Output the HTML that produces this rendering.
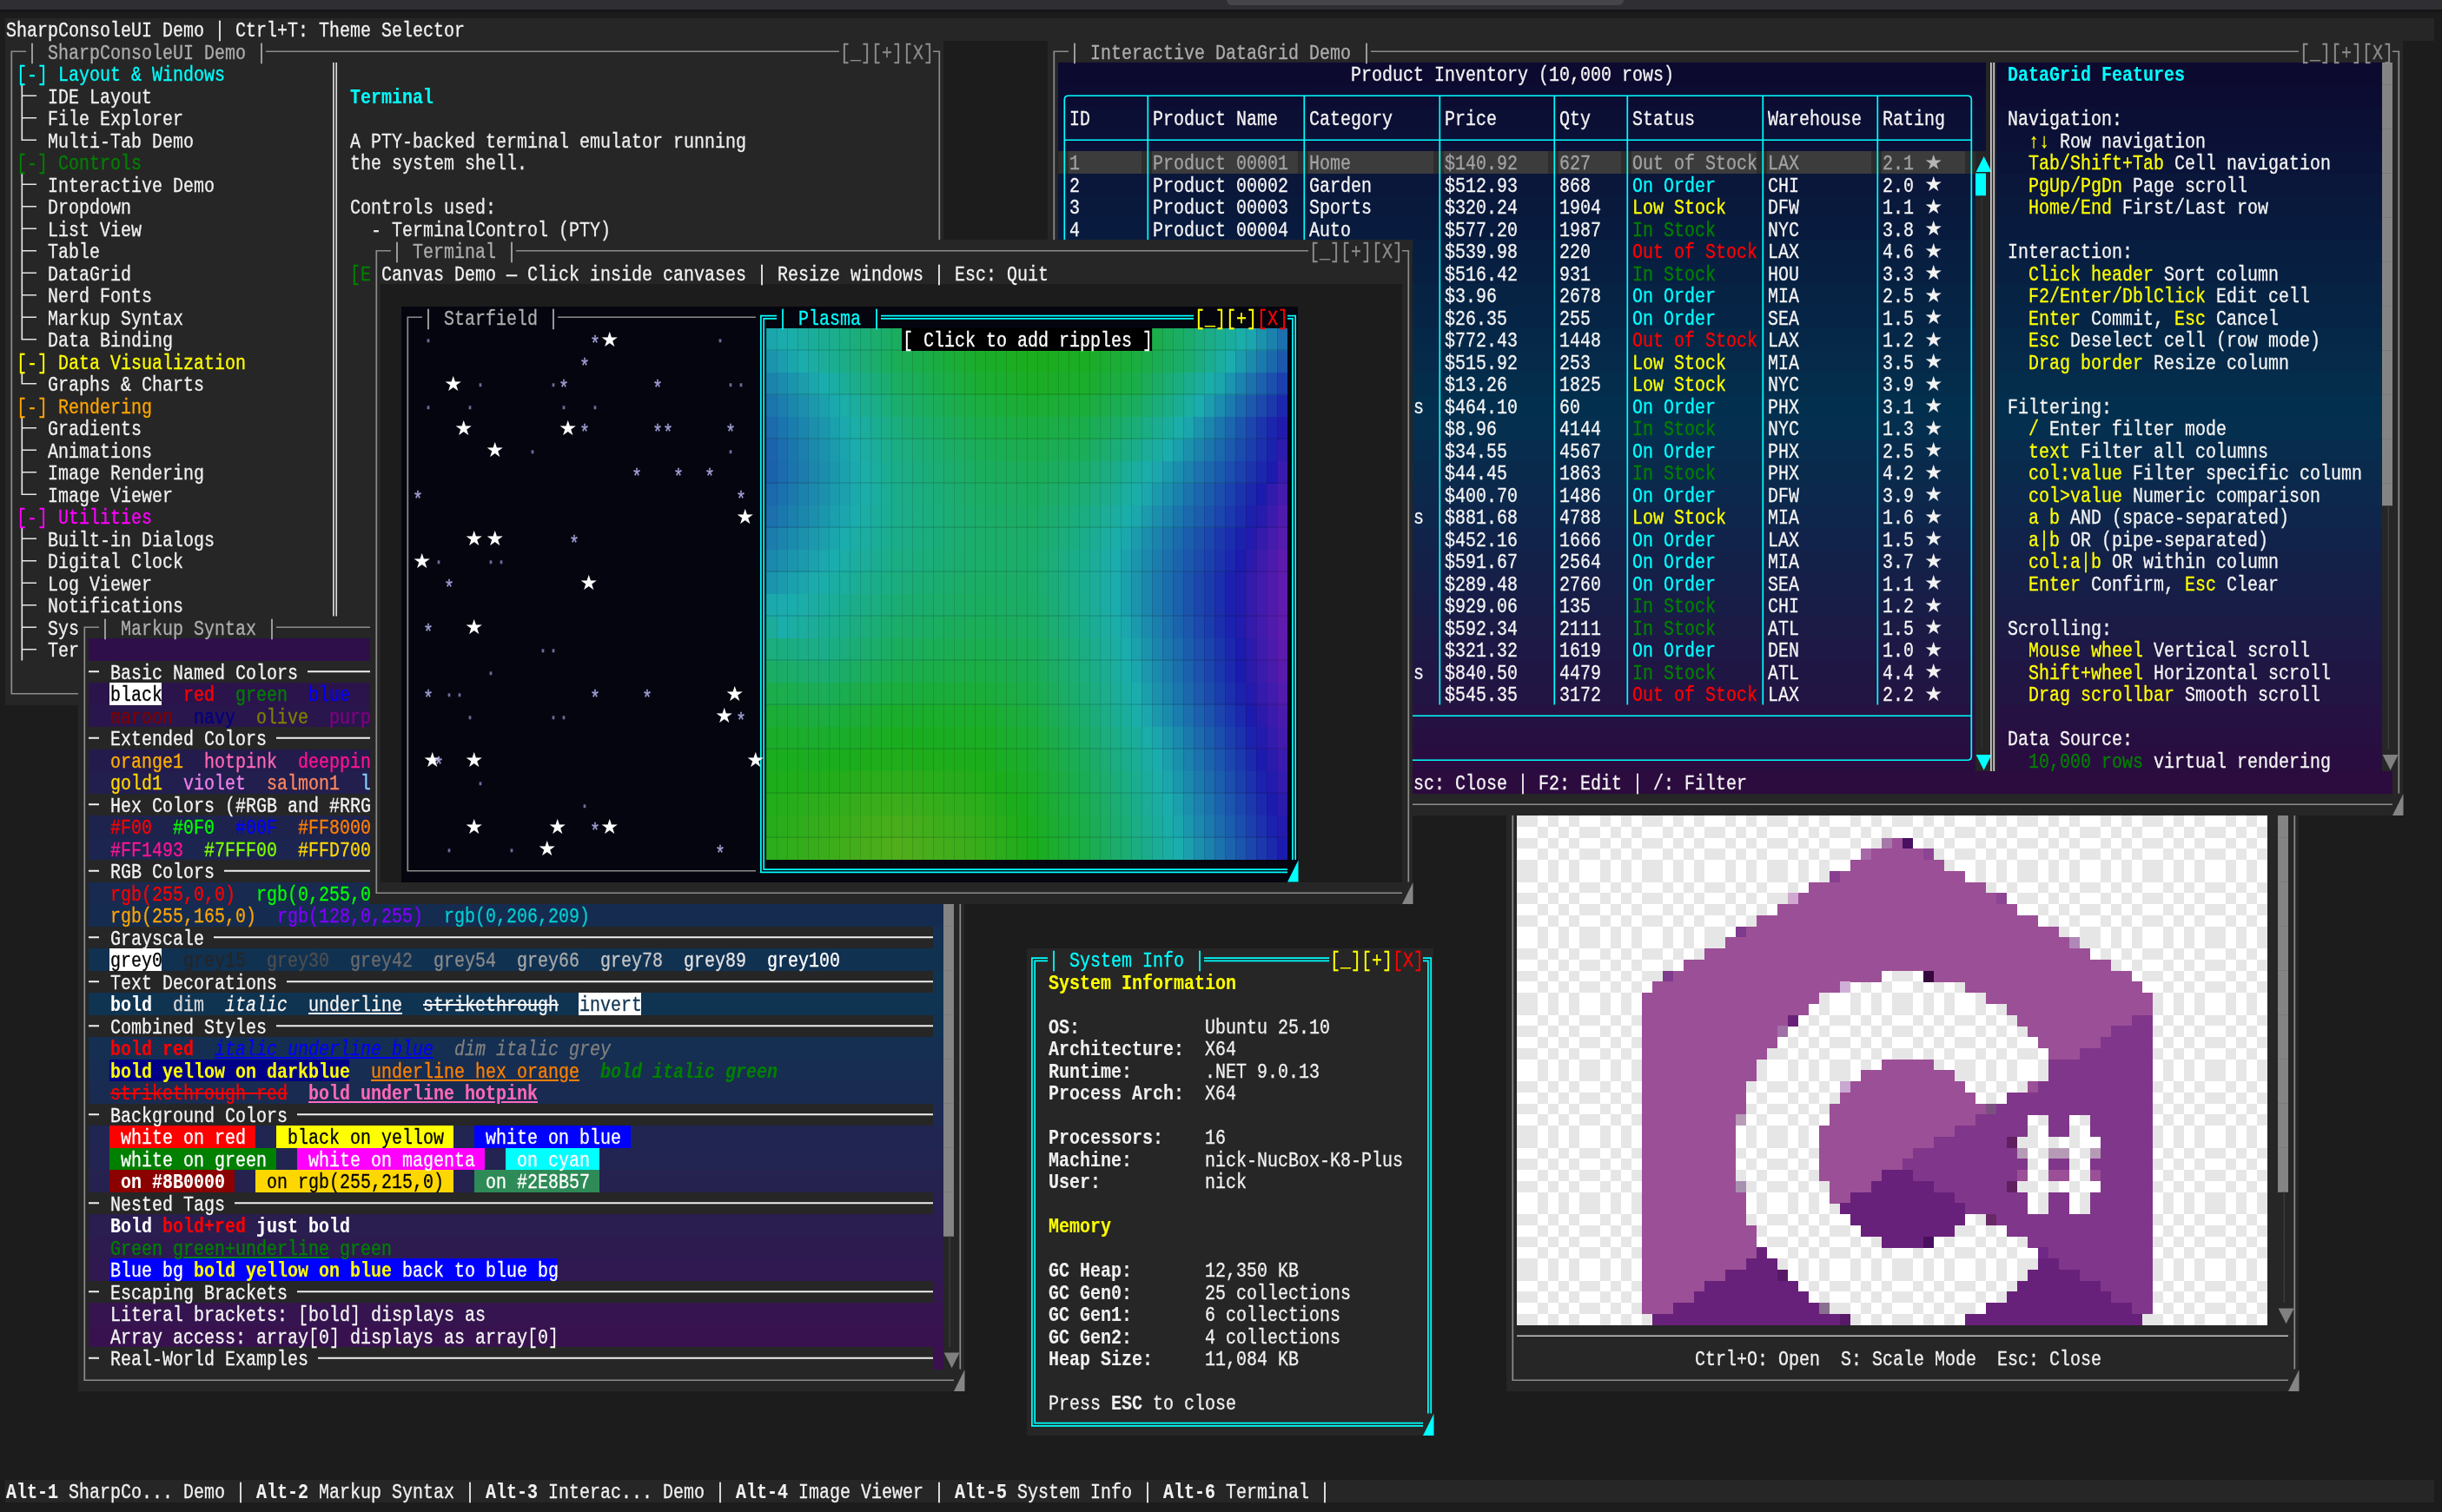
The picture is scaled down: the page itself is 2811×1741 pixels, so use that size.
<!DOCTYPE html>
<html lang="en"><head><meta charset="utf-8"><title>SharpConsoleUI Demo</title>
<style>
html,body{margin:0;padding:0}
body{width:2811px;height:1741px;background:#1c1c1d;overflow:hidden;position:relative;font-family:"Liberation Mono","DejaVu Sans Mono",monospace}
.ab{position:absolute;display:block}
.r{position:absolute;left:6px;width:2796px;height:25.5px}
.r i{position:absolute;top:0;height:100%;display:block}
.t{font-size:23.5px;line-height:25.5px;white-space:pre}
.t span{position:absolute;top:2px;margin-left:1.1px;-webkit-text-stroke:.28px currentColor;transform:scaleX(0.85093);transform-origin:0 0;text-decoration-thickness:1.6px;text-underline-offset:2px}
.t span.st{margin-left:0;-webkit-text-stroke:0;font-family:"DejaVu Sans",sans-serif;font-size:23.4px;transform:none;top:0.5px}
.t span.as{top:7px}
#tx{left:0;top:0;width:100%;height:100%;will-change:transform}
#tb{left:0;top:0;width:100%;height:10.5px;background:#2f2f33}
#tbs{left:0;top:10.5px;width:100%;height:5px;background:linear-gradient(#131315,#1c1c1d)}
#pill{left:1412px;top:-6px;width:457px;height:11.5px;border-radius:6px;background:#46464a}
.t .c0{color:#f2f2f2}
.t .c1{color:#adadad}
.t .c2{color:#8c8c8c}
.t .c3{color:#00ffff}
.t .c4{color:#f4f4f4}
.t .c5{color:#00ffff;font-weight:bold;-webkit-text-stroke:.12px currentColor}
.t .c6{color:#f0f0f0}
.t .c7{color:#eeeeee}
.t .c8{color:#ffff00}
.t .c9{color:#008000}
.t .c10{color:#a2a2a2}
.t .c11{color:#ff0000}
.t .c12{color:#6c6c9c}
.t .c13{color:#a4a4dc}
.t .c14{color:#ffffff}
.t .c15{color:#ffa500}
.t .c16{color:#ff00ff}
.t .c17{color:#000000}
.t .c18{color:#0000ff}
.t .c19{color:#800000}
.t .c20{color:#000080}
.t .c21{color:#808000}
.t .c22{color:#800080}
.t .c23{color:#ffaf00}
.t .c24{color:#ff69b4}
.t .c25{color:#ff1493}
.t .c26{color:#ffd700}
.t .c27{color:#ee82ee}
.t .c28{color:#ff875f}
.t .c29{color:#87cefa}
.t .c30{color:#00ff00}
.t .c31{color:#ff8000}
.t .c32{color:#7fff00}
.t .c33{color:#8000ff}
.t .c34{color:#00ced1}
.t .c35{color:#262626}
.t .c36{color:#4e4e4e}
.t .c37{color:#6c6c6c}
.t .c38{color:#8a8a8a}
.t .c39{color:#a8a8a8}
.t .c40{color:#c6c6c6}
.t .c41{color:#e4e4e4}
.t .c42{color:#ffff00;font-weight:bold;-webkit-text-stroke:.12px currentColor}
.t .c43{color:#ffffff;font-weight:bold;-webkit-text-stroke:.12px currentColor}
.t .c44{color:#dadada}
.t .c45{color:#f4f4f4;font-style:italic}
.t .c46{color:#f4f4f4;text-decoration:underline}
.t .c47{color:#f4f4f4;text-decoration:line-through}
.t .c48{color:#103450}
.t .c49{color:#f0f0f0;font-weight:bold;-webkit-text-stroke:.12px currentColor}
.t .c50{color:#ff0000;font-weight:bold;-webkit-text-stroke:.12px currentColor}
.t .c51{color:#0000ff;font-style:italic;text-decoration:underline}
.t .c52{color:#808080;font-style:italic}
.t .c53{color:#ff8000;text-decoration:underline}
.t .c54{color:#008000;font-weight:bold;-webkit-text-stroke:.12px currentColor;font-style:italic}
.t .c55{color:#ff0000;text-decoration:line-through}
.t .c56{color:#ff69b4;font-weight:bold;-webkit-text-stroke:.12px currentColor;text-decoration:underline}
.t .c57{color:#008000;text-decoration:underline}
.t .c58{color:#f2f2f2;font-weight:bold;-webkit-text-stroke:.12px currentColor}
</style></head><body>
<div class="ab" id="tb"></div><div class="ab" id="tbs"></div><div class="ab" id="pill"></div>
<div class="r" style="top:21px"><i style="left:0px;width:2796px;background:#262626"></i></div>
<div class="r" style="top:46.5px"><i style="left:0px;width:1080px;background:#262626"></i><i style="left:1200px;width:1560px;background:#262626"></i></div>
<div class="r" style="top:72px"><i style="left:0px;width:1080px;background:#262626"></i><i style="left:1200px;width:12px;background:#262626"></i><i style="left:1212px;width:1068px;background:#0d0a30"></i><i style="left:2280px;width:12px;background:#262626"></i><i style="left:2292px;width:456px;background:#0d0a30"></i><i style="left:2748px;width:12px;background:#262626"></i></div>
<div class="r" style="top:97.5px"><i style="left:0px;width:1080px;background:#262626"></i><i style="left:1200px;width:12px;background:#262626"></i><i style="left:1212px;width:1068px;background:#0c0c32"></i><i style="left:2280px;width:12px;background:#262626"></i><i style="left:2292px;width:456px;background:#0c0c32"></i><i style="left:2748px;width:12px;background:#262626"></i></div>
<div class="r" style="top:123px"><i style="left:0px;width:1080px;background:#262626"></i><i style="left:1200px;width:12px;background:#262626"></i><i style="left:1212px;width:1068px;background:#0c0f34"></i><i style="left:2280px;width:12px;background:#262626"></i><i style="left:2292px;width:456px;background:#0c0f34"></i><i style="left:2748px;width:12px;background:#262626"></i></div>
<div class="r" style="top:148.5px"><i style="left:0px;width:1080px;background:#262626"></i><i style="left:1200px;width:12px;background:#262626"></i><i style="left:1212px;width:1068px;background:#0b1136"></i><i style="left:2280px;width:12px;background:#262626"></i><i style="left:2292px;width:456px;background:#0b1136"></i><i style="left:2748px;width:12px;background:#262626"></i></div>
<div class="r" style="top:174px"><i style="left:0px;width:1080px;background:#262626"></i><i style="left:1200px;width:12px;background:#262626"></i><i style="left:1212px;width:12px;background:#2d2d2d"></i><i style="left:1224px;width:84px;background:#3c3c3c"></i><i style="left:1308px;width:12px;background:#2d2d2d"></i><i style="left:1320px;width:168px;background:#3c3c3c"></i><i style="left:1488px;width:12px;background:#2d2d2d"></i><i style="left:1500px;width:144px;background:#3c3c3c"></i><i style="left:1644px;width:12px;background:#2d2d2d"></i><i style="left:1656px;width:120px;background:#3c3c3c"></i><i style="left:1776px;width:12px;background:#2d2d2d"></i><i style="left:1788px;width:72px;background:#3c3c3c"></i><i style="left:1860px;width:12px;background:#2d2d2d"></i><i style="left:1872px;width:144px;background:#3c3c3c"></i><i style="left:2016px;width:12px;background:#2d2d2d"></i><i style="left:2028px;width:120px;background:#3c3c3c"></i><i style="left:2148px;width:12px;background:#2d2d2d"></i><i style="left:2160px;width:96px;background:#3c3c3c"></i><i style="left:2256px;width:12px;background:#2d2d2d"></i><i style="left:2268px;width:12px;background:#252525"></i><i style="left:2280px;width:12px;background:#262626"></i><i style="left:2292px;width:456px;background:#0a1438"></i><i style="left:2748px;width:12px;background:#262626"></i></div>
<div class="r" style="top:199.5px"><i style="left:0px;width:1080px;background:#262626"></i><i style="left:1200px;width:12px;background:#262626"></i><i style="left:1212px;width:1056px;background:#0a163a"></i><i style="left:2268px;width:12px;background:#252525"></i><i style="left:2280px;width:12px;background:#262626"></i><i style="left:2292px;width:456px;background:#0a163a"></i><i style="left:2748px;width:12px;background:#262626"></i></div>
<div class="r" style="top:225px"><i style="left:0px;width:1080px;background:#262626"></i><i style="left:1200px;width:12px;background:#262626"></i><i style="left:1212px;width:1056px;background:#09193c"></i><i style="left:2268px;width:12px;background:#252525"></i><i style="left:2280px;width:12px;background:#262626"></i><i style="left:2292px;width:456px;background:#09193c"></i><i style="left:2748px;width:12px;background:#262626"></i></div>
<div class="r" style="top:250.5px"><i style="left:0px;width:1080px;background:#262626"></i><i style="left:1200px;width:12px;background:#262626"></i><i style="left:1212px;width:1056px;background:#081b3e"></i><i style="left:2268px;width:12px;background:#252525"></i><i style="left:2280px;width:12px;background:#262626"></i><i style="left:2292px;width:456px;background:#081b3e"></i><i style="left:2748px;width:12px;background:#262626"></i></div>
<div class="r" style="top:276px"><i style="left:0px;width:1620px;background:#262626"></i><i style="left:1620px;width:648px;background:#081e40"></i><i style="left:2268px;width:12px;background:#252525"></i><i style="left:2280px;width:12px;background:#262626"></i><i style="left:2292px;width:456px;background:#081e40"></i><i style="left:2748px;width:12px;background:#262626"></i></div>
<div class="r" style="top:301.5px"><i style="left:0px;width:1620px;background:#262626"></i><i style="left:1620px;width:648px;background:#072042"></i><i style="left:2268px;width:12px;background:#252525"></i><i style="left:2280px;width:12px;background:#262626"></i><i style="left:2292px;width:456px;background:#072042"></i><i style="left:2748px;width:12px;background:#262626"></i></div>
<div class="r" style="top:327px"><i style="left:0px;width:432px;background:#262626"></i><i style="left:1608px;width:12px;background:#262626"></i><i style="left:1620px;width:648px;background:#062344"></i><i style="left:2268px;width:12px;background:#252525"></i><i style="left:2280px;width:12px;background:#262626"></i><i style="left:2292px;width:456px;background:#062344"></i><i style="left:2748px;width:12px;background:#262626"></i></div>
<div class="r" style="top:352.5px"><i style="left:0px;width:432px;background:#262626"></i><i style="left:456px;width:1032px;background:#05050f"></i><i style="left:1608px;width:12px;background:#262626"></i><i style="left:1620px;width:648px;background:#062546"></i><i style="left:2268px;width:12px;background:#252525"></i><i style="left:2280px;width:12px;background:#262626"></i><i style="left:2292px;width:456px;background:#062546"></i><i style="left:2748px;width:12px;background:#262626"></i></div>
<div class="r" style="top:378px"><i style="left:0px;width:432px;background:#262626"></i><i style="left:456px;width:420px;background:#05050f"></i><i style="left:876px;width:156px;background:#1eb060"></i><i style="left:1032px;width:288px;background:#000000"></i><i style="left:1320px;width:156px;background:#1eb060"></i><i style="left:1476px;width:12px;background:#05050f"></i><i style="left:1608px;width:12px;background:#262626"></i><i style="left:1620px;width:648px;background:#052848"></i><i style="left:2268px;width:12px;background:#252525"></i><i style="left:2280px;width:12px;background:#262626"></i><i style="left:2292px;width:456px;background:#052848"></i><i style="left:2748px;width:12px;background:#262626"></i></div>
<div class="r" style="top:403.5px"><i style="left:0px;width:432px;background:#262626"></i><i style="left:456px;width:420px;background:#05050f"></i><i style="left:876px;width:600px;background:#1eb060"></i><i style="left:1476px;width:12px;background:#05050f"></i><i style="left:1608px;width:12px;background:#262626"></i><i style="left:1620px;width:648px;background:#052a4a"></i><i style="left:2268px;width:12px;background:#252525"></i><i style="left:2280px;width:12px;background:#262626"></i><i style="left:2292px;width:456px;background:#052a4a"></i><i style="left:2748px;width:12px;background:#262626"></i></div>
<div class="r" style="top:429px"><i style="left:0px;width:432px;background:#262626"></i><i style="left:456px;width:420px;background:#05050f"></i><i style="left:876px;width:600px;background:#1eb060"></i><i style="left:1476px;width:12px;background:#05050f"></i><i style="left:1608px;width:12px;background:#262626"></i><i style="left:1620px;width:648px;background:#042d4c"></i><i style="left:2268px;width:12px;background:#252525"></i><i style="left:2280px;width:12px;background:#262626"></i><i style="left:2292px;width:456px;background:#042d4c"></i><i style="left:2748px;width:12px;background:#262626"></i></div>
<div class="r" style="top:454.5px"><i style="left:0px;width:432px;background:#262626"></i><i style="left:456px;width:420px;background:#05050f"></i><i style="left:876px;width:600px;background:#1eb060"></i><i style="left:1476px;width:12px;background:#05050f"></i><i style="left:1608px;width:12px;background:#262626"></i><i style="left:1620px;width:648px;background:#032f4e"></i><i style="left:2268px;width:12px;background:#252525"></i><i style="left:2280px;width:12px;background:#262626"></i><i style="left:2292px;width:456px;background:#032f4e"></i><i style="left:2748px;width:12px;background:#262626"></i></div>
<div class="r" style="top:480px"><i style="left:0px;width:432px;background:#262626"></i><i style="left:456px;width:420px;background:#05050f"></i><i style="left:876px;width:600px;background:#1eb060"></i><i style="left:1476px;width:12px;background:#05050f"></i><i style="left:1608px;width:12px;background:#262626"></i><i style="left:1620px;width:648px;background:#052f4e"></i><i style="left:2268px;width:12px;background:#252525"></i><i style="left:2280px;width:12px;background:#262626"></i><i style="left:2292px;width:456px;background:#052f4e"></i><i style="left:2748px;width:12px;background:#262626"></i></div>
<div class="r" style="top:505.5px"><i style="left:0px;width:432px;background:#262626"></i><i style="left:456px;width:420px;background:#05050f"></i><i style="left:876px;width:600px;background:#1eb060"></i><i style="left:1476px;width:12px;background:#05050f"></i><i style="left:1608px;width:12px;background:#262626"></i><i style="left:1620px;width:648px;background:#072c4d"></i><i style="left:2268px;width:12px;background:#252525"></i><i style="left:2280px;width:12px;background:#262626"></i><i style="left:2292px;width:456px;background:#072c4d"></i><i style="left:2748px;width:12px;background:#262626"></i></div>
<div class="r" style="top:531px"><i style="left:0px;width:432px;background:#262626"></i><i style="left:456px;width:420px;background:#05050f"></i><i style="left:876px;width:600px;background:#1eb060"></i><i style="left:1476px;width:12px;background:#05050f"></i><i style="left:1608px;width:12px;background:#262626"></i><i style="left:1620px;width:648px;background:#0a2a4c"></i><i style="left:2268px;width:12px;background:#252525"></i><i style="left:2280px;width:12px;background:#262626"></i><i style="left:2292px;width:456px;background:#0a2a4c"></i><i style="left:2748px;width:12px;background:#262626"></i></div>
<div class="r" style="top:556.5px"><i style="left:0px;width:432px;background:#262626"></i><i style="left:456px;width:420px;background:#05050f"></i><i style="left:876px;width:600px;background:#1eb060"></i><i style="left:1476px;width:12px;background:#05050f"></i><i style="left:1608px;width:12px;background:#262626"></i><i style="left:1620px;width:648px;background:#0c284c"></i><i style="left:2268px;width:12px;background:#252525"></i><i style="left:2280px;width:12px;background:#262626"></i><i style="left:2292px;width:456px;background:#0c284c"></i><i style="left:2748px;width:12px;background:#262626"></i></div>
<div class="r" style="top:582px"><i style="left:0px;width:432px;background:#262626"></i><i style="left:456px;width:420px;background:#05050f"></i><i style="left:876px;width:600px;background:#1eb060"></i><i style="left:1476px;width:12px;background:#05050f"></i><i style="left:1608px;width:12px;background:#262626"></i><i style="left:1620px;width:648px;background:#0e264b"></i><i style="left:2268px;width:12px;background:#252525"></i><i style="left:2280px;width:12px;background:#262626"></i><i style="left:2292px;width:444px;background:#0e264b"></i><i style="left:2736px;width:24px;background:#262626"></i></div>
<div class="r" style="top:607.5px"><i style="left:0px;width:432px;background:#262626"></i><i style="left:456px;width:420px;background:#05050f"></i><i style="left:876px;width:600px;background:#1eb060"></i><i style="left:1476px;width:12px;background:#05050f"></i><i style="left:1608px;width:12px;background:#262626"></i><i style="left:1620px;width:648px;background:#11234a"></i><i style="left:2268px;width:12px;background:#252525"></i><i style="left:2280px;width:12px;background:#262626"></i><i style="left:2292px;width:444px;background:#11234a"></i><i style="left:2736px;width:24px;background:#262626"></i></div>
<div class="r" style="top:633px"><i style="left:0px;width:432px;background:#262626"></i><i style="left:456px;width:420px;background:#05050f"></i><i style="left:876px;width:600px;background:#1eb060"></i><i style="left:1476px;width:12px;background:#05050f"></i><i style="left:1608px;width:12px;background:#262626"></i><i style="left:1620px;width:648px;background:#132149"></i><i style="left:2268px;width:12px;background:#252525"></i><i style="left:2280px;width:12px;background:#262626"></i><i style="left:2292px;width:444px;background:#132149"></i><i style="left:2736px;width:24px;background:#262626"></i></div>
<div class="r" style="top:658.5px"><i style="left:0px;width:432px;background:#262626"></i><i style="left:456px;width:420px;background:#05050f"></i><i style="left:876px;width:600px;background:#1eb060"></i><i style="left:1476px;width:12px;background:#05050f"></i><i style="left:1608px;width:12px;background:#262626"></i><i style="left:1620px;width:648px;background:#161f48"></i><i style="left:2268px;width:12px;background:#252525"></i><i style="left:2280px;width:12px;background:#262626"></i><i style="left:2292px;width:444px;background:#161f48"></i><i style="left:2736px;width:24px;background:#262626"></i></div>
<div class="r" style="top:684px"><i style="left:0px;width:432px;background:#262626"></i><i style="left:456px;width:420px;background:#05050f"></i><i style="left:876px;width:600px;background:#1eb060"></i><i style="left:1476px;width:12px;background:#05050f"></i><i style="left:1608px;width:12px;background:#262626"></i><i style="left:1620px;width:648px;background:#181d47"></i><i style="left:2268px;width:12px;background:#252525"></i><i style="left:2280px;width:12px;background:#262626"></i><i style="left:2292px;width:444px;background:#181d47"></i><i style="left:2736px;width:24px;background:#262626"></i></div>
<div class="r" style="top:709.5px"><i style="left:0px;width:432px;background:#262626"></i><i style="left:456px;width:420px;background:#05050f"></i><i style="left:876px;width:600px;background:#1eb060"></i><i style="left:1476px;width:12px;background:#05050f"></i><i style="left:1608px;width:12px;background:#262626"></i><i style="left:1620px;width:648px;background:#1b1b46"></i><i style="left:2268px;width:12px;background:#252525"></i><i style="left:2280px;width:12px;background:#262626"></i><i style="left:2292px;width:444px;background:#1b1b46"></i><i style="left:2736px;width:24px;background:#262626"></i></div>
<div class="r" style="top:735px"><i style="left:0px;width:96px;background:#262626"></i><i style="left:96px;width:324px;background:#2f0f4a"></i><i style="left:420px;width:12px;background:#262626"></i><i style="left:456px;width:420px;background:#05050f"></i><i style="left:876px;width:600px;background:#1eb060"></i><i style="left:1476px;width:12px;background:#05050f"></i><i style="left:1608px;width:12px;background:#262626"></i><i style="left:1620px;width:648px;background:#1d1845"></i><i style="left:2268px;width:12px;background:#252525"></i><i style="left:2280px;width:12px;background:#262626"></i><i style="left:2292px;width:444px;background:#1d1845"></i><i style="left:2736px;width:24px;background:#262626"></i></div>
<div class="r" style="top:760.5px"><i style="left:0px;width:432px;background:#262626"></i><i style="left:456px;width:420px;background:#05050f"></i><i style="left:876px;width:600px;background:#1eb060"></i><i style="left:1476px;width:12px;background:#05050f"></i><i style="left:1608px;width:12px;background:#262626"></i><i style="left:1620px;width:648px;background:#201644"></i><i style="left:2268px;width:12px;background:#252525"></i><i style="left:2280px;width:12px;background:#262626"></i><i style="left:2292px;width:444px;background:#201644"></i><i style="left:2736px;width:24px;background:#262626"></i></div>
<div class="r" style="top:786px"><i style="left:0px;width:96px;background:#262626"></i><i style="left:96px;width:24px;background:#2b144b"></i><i style="left:120px;width:60px;background:#ffffff"></i><i style="left:180px;width:240px;background:#2b144b"></i><i style="left:420px;width:12px;background:#262626"></i><i style="left:456px;width:420px;background:#05050f"></i><i style="left:876px;width:600px;background:#1eb060"></i><i style="left:1476px;width:12px;background:#05050f"></i><i style="left:1608px;width:12px;background:#262626"></i><i style="left:1620px;width:648px;background:#221443"></i><i style="left:2268px;width:12px;background:#252525"></i><i style="left:2280px;width:12px;background:#262626"></i><i style="left:2292px;width:444px;background:#221443"></i><i style="left:2736px;width:24px;background:#262626"></i></div>
<div class="r" style="top:811.5px"><i style="left:84px;width:12px;background:#262626"></i><i style="left:96px;width:324px;background:#29164c"></i><i style="left:420px;width:12px;background:#262626"></i><i style="left:456px;width:420px;background:#05050f"></i><i style="left:876px;width:600px;background:#1eb060"></i><i style="left:1476px;width:12px;background:#05050f"></i><i style="left:1608px;width:12px;background:#262626"></i><i style="left:1620px;width:648px;background:#251242"></i><i style="left:2268px;width:12px;background:#252525"></i><i style="left:2280px;width:12px;background:#262626"></i><i style="left:2292px;width:444px;background:#251242"></i><i style="left:2736px;width:24px;background:#262626"></i></div>
<div class="r" style="top:837px"><i style="left:84px;width:348px;background:#262626"></i><i style="left:456px;width:420px;background:#05050f"></i><i style="left:876px;width:600px;background:#1eb060"></i><i style="left:1476px;width:12px;background:#05050f"></i><i style="left:1608px;width:12px;background:#262626"></i><i style="left:1620px;width:648px;background:#270f41"></i><i style="left:2268px;width:12px;background:#252525"></i><i style="left:2280px;width:12px;background:#262626"></i><i style="left:2292px;width:444px;background:#270f41"></i><i style="left:2736px;width:24px;background:#262626"></i></div>
<div class="r" style="top:862.5px"><i style="left:84px;width:12px;background:#262626"></i><i style="left:96px;width:324px;background:#241b4d"></i><i style="left:420px;width:12px;background:#262626"></i><i style="left:456px;width:420px;background:#05050f"></i><i style="left:876px;width:600px;background:#1eb060"></i><i style="left:1476px;width:12px;background:#05050f"></i><i style="left:1608px;width:12px;background:#262626"></i><i style="left:1620px;width:648px;background:#2a0d40"></i><i style="left:2268px;width:12px;background:#252525"></i><i style="left:2280px;width:12px;background:#262626"></i><i style="left:2292px;width:444px;background:#2a0d40"></i><i style="left:2736px;width:24px;background:#262626"></i></div>
<div class="r" style="top:888px"><i style="left:84px;width:12px;background:#262626"></i><i style="left:96px;width:324px;background:#221e4d"></i><i style="left:420px;width:12px;background:#262626"></i><i style="left:456px;width:420px;background:#05050f"></i><i style="left:876px;width:600px;background:#1eb060"></i><i style="left:1476px;width:12px;background:#05050f"></i><i style="left:1608px;width:12px;background:#262626"></i><i style="left:1620px;width:1128px;background:#2c0b3f"></i><i style="left:2748px;width:12px;background:#262626"></i></div>
<div class="r" style="top:913.5px"><i style="left:84px;width:348px;background:#262626"></i><i style="left:456px;width:420px;background:#05050f"></i><i style="left:876px;width:600px;background:#1eb060"></i><i style="left:1476px;width:12px;background:#05050f"></i><i style="left:1608px;width:1152px;background:#262626"></i></div>
<div class="r" style="top:939px"><i style="left:84px;width:12px;background:#262626"></i><i style="left:96px;width:324px;background:#1e234e"></i><i style="left:420px;width:12px;background:#262626"></i><i style="left:456px;width:420px;background:#05050f"></i><i style="left:876px;width:600px;background:#1eb060"></i><i style="left:1476px;width:12px;background:#05050f"></i><i style="left:1608px;width:12px;background:#262626"></i><i style="left:1728px;width:12px;background:#262626"></i><i style="left:1740px;width:864px;background:#f2f2f2"></i><i style="left:2604px;width:36px;background:#262626"></i></div>
<div class="r" style="top:964.5px"><i style="left:84px;width:12px;background:#262626"></i><i style="left:96px;width:324px;background:#1c254f"></i><i style="left:420px;width:12px;background:#262626"></i><i style="left:456px;width:420px;background:#05050f"></i><i style="left:876px;width:600px;background:#1eb060"></i><i style="left:1476px;width:12px;background:#05050f"></i><i style="left:1608px;width:12px;background:#262626"></i><i style="left:1728px;width:12px;background:#262626"></i><i style="left:1740px;width:864px;background:#f2f2f2"></i><i style="left:2604px;width:36px;background:#262626"></i></div>
<div class="r" style="top:990px"><i style="left:84px;width:348px;background:#262626"></i><i style="left:456px;width:1032px;background:#05050f"></i><i style="left:1608px;width:12px;background:#262626"></i><i style="left:1728px;width:12px;background:#262626"></i><i style="left:1740px;width:864px;background:#f2f2f2"></i><i style="left:2604px;width:36px;background:#262626"></i></div>
<div class="r" style="top:1015.5px"><i style="left:84px;width:12px;background:#262626"></i><i style="left:96px;width:324px;background:#182a50"></i><i style="left:420px;width:1200px;background:#262626"></i><i style="left:1728px;width:12px;background:#262626"></i><i style="left:1740px;width:864px;background:#f2f2f2"></i><i style="left:2604px;width:36px;background:#262626"></i></div>
<div class="r" style="top:1041px"><i style="left:84px;width:12px;background:#262626"></i><i style="left:96px;width:996px;background:#152c50"></i><i style="left:1092px;width:12px;background:#262626"></i><i style="left:1728px;width:12px;background:#262626"></i><i style="left:1740px;width:864px;background:#f2f2f2"></i><i style="left:2604px;width:36px;background:#262626"></i></div>
<div class="r" style="top:1066.5px"><i style="left:84px;width:984px;background:#262626"></i><i style="left:1068px;width:24px;background:#132f51"></i><i style="left:1092px;width:12px;background:#262626"></i><i style="left:1728px;width:12px;background:#262626"></i><i style="left:1740px;width:864px;background:#f2f2f2"></i><i style="left:2604px;width:36px;background:#262626"></i></div>
<div class="r" style="top:1092px"><i style="left:84px;width:12px;background:#262626"></i><i style="left:96px;width:24px;background:#113151"></i><i style="left:120px;width:60px;background:#ffffff"></i><i style="left:180px;width:912px;background:#113151"></i><i style="left:1092px;width:12px;background:#262626"></i><i style="left:1176px;width:468px;background:#262626"></i><i style="left:1728px;width:12px;background:#262626"></i><i style="left:1740px;width:864px;background:#f2f2f2"></i><i style="left:2604px;width:36px;background:#262626"></i></div>
<div class="r" style="top:1117.5px"><i style="left:84px;width:984px;background:#262626"></i><i style="left:1068px;width:24px;background:#0f3452"></i><i style="left:1092px;width:12px;background:#262626"></i><i style="left:1176px;width:468px;background:#262626"></i><i style="left:1728px;width:12px;background:#262626"></i><i style="left:1740px;width:864px;background:#f2f2f2"></i><i style="left:2604px;width:36px;background:#262626"></i></div>
<div class="r" style="top:1143px"><i style="left:84px;width:12px;background:#262626"></i><i style="left:96px;width:564px;background:#0f3452"></i><i style="left:660px;width:72px;background:#ffffff"></i><i style="left:732px;width:360px;background:#0f3452"></i><i style="left:1092px;width:12px;background:#262626"></i><i style="left:1176px;width:468px;background:#262626"></i><i style="left:1728px;width:12px;background:#262626"></i><i style="left:1740px;width:864px;background:#f2f2f2"></i><i style="left:2604px;width:36px;background:#262626"></i></div>
<div class="r" style="top:1168.5px"><i style="left:84px;width:984px;background:#262626"></i><i style="left:1068px;width:24px;background:#123252"></i><i style="left:1092px;width:12px;background:#262626"></i><i style="left:1176px;width:468px;background:#262626"></i><i style="left:1728px;width:12px;background:#262626"></i><i style="left:1740px;width:864px;background:#f2f2f2"></i><i style="left:2604px;width:36px;background:#262626"></i></div>
<div class="r" style="top:1194px"><i style="left:84px;width:12px;background:#262626"></i><i style="left:96px;width:996px;background:#152f52"></i><i style="left:1092px;width:12px;background:#262626"></i><i style="left:1176px;width:468px;background:#262626"></i><i style="left:1728px;width:12px;background:#262626"></i><i style="left:1740px;width:864px;background:#f2f2f2"></i><i style="left:2604px;width:36px;background:#262626"></i></div>
<div class="r" style="top:1219.5px"><i style="left:84px;width:12px;background:#262626"></i><i style="left:96px;width:24px;background:#172d51"></i><i style="left:120px;width:276px;background:#000087"></i><i style="left:396px;width:696px;background:#172d51"></i><i style="left:1092px;width:12px;background:#262626"></i><i style="left:1176px;width:468px;background:#262626"></i><i style="left:1728px;width:12px;background:#262626"></i><i style="left:1740px;width:864px;background:#f2f2f2"></i><i style="left:2604px;width:36px;background:#262626"></i></div>
<div class="r" style="top:1245px"><i style="left:84px;width:12px;background:#262626"></i><i style="left:96px;width:996px;background:#1a2b51"></i><i style="left:1092px;width:12px;background:#262626"></i><i style="left:1176px;width:468px;background:#262626"></i><i style="left:1728px;width:12px;background:#262626"></i><i style="left:1740px;width:864px;background:#f2f2f2"></i><i style="left:2604px;width:36px;background:#262626"></i></div>
<div class="r" style="top:1270.5px"><i style="left:84px;width:984px;background:#262626"></i><i style="left:1068px;width:24px;background:#1d2951"></i><i style="left:1092px;width:12px;background:#262626"></i><i style="left:1176px;width:468px;background:#262626"></i><i style="left:1728px;width:12px;background:#262626"></i><i style="left:1740px;width:864px;background:#f2f2f2"></i><i style="left:2604px;width:36px;background:#262626"></i></div>
<div class="r" style="top:1296px"><i style="left:84px;width:12px;background:#262626"></i><i style="left:96px;width:24px;background:#202651"></i><i style="left:120px;width:168px;background:#ff0000"></i><i style="left:288px;width:24px;background:#202651"></i><i style="left:312px;width:204px;background:#ffff00"></i><i style="left:516px;width:24px;background:#202651"></i><i style="left:540px;width:180px;background:#0000ff"></i><i style="left:720px;width:372px;background:#202651"></i><i style="left:1092px;width:12px;background:#262626"></i><i style="left:1176px;width:468px;background:#262626"></i><i style="left:1728px;width:12px;background:#262626"></i><i style="left:1740px;width:864px;background:#f2f2f2"></i><i style="left:2604px;width:36px;background:#262626"></i></div>
<div class="r" style="top:1321.5px"><i style="left:84px;width:12px;background:#262626"></i><i style="left:96px;width:24px;background:#222451"></i><i style="left:120px;width:192px;background:#008000"></i><i style="left:312px;width:24px;background:#222451"></i><i style="left:336px;width:216px;background:#ff00ff"></i><i style="left:552px;width:24px;background:#222451"></i><i style="left:576px;width:108px;background:#00ffff"></i><i style="left:684px;width:408px;background:#222451"></i><i style="left:1092px;width:12px;background:#262626"></i><i style="left:1176px;width:468px;background:#262626"></i><i style="left:1728px;width:12px;background:#262626"></i><i style="left:1740px;width:864px;background:#f2f2f2"></i><i style="left:2604px;width:36px;background:#262626"></i></div>
<div class="r" style="top:1347px"><i style="left:84px;width:12px;background:#262626"></i><i style="left:96px;width:24px;background:#252250"></i><i style="left:120px;width:144px;background:#8b0000"></i><i style="left:264px;width:24px;background:#252250"></i><i style="left:288px;width:228px;background:#ffd700"></i><i style="left:516px;width:24px;background:#252250"></i><i style="left:540px;width:144px;background:#2e8b57"></i><i style="left:684px;width:408px;background:#252250"></i><i style="left:1092px;width:12px;background:#262626"></i><i style="left:1176px;width:468px;background:#262626"></i><i style="left:1728px;width:12px;background:#262626"></i><i style="left:1740px;width:864px;background:#f2f2f2"></i><i style="left:2604px;width:36px;background:#262626"></i></div>
<div class="r" style="top:1372.5px"><i style="left:84px;width:984px;background:#262626"></i><i style="left:1068px;width:24px;background:#282050"></i><i style="left:1092px;width:12px;background:#262626"></i><i style="left:1176px;width:468px;background:#262626"></i><i style="left:1728px;width:12px;background:#262626"></i><i style="left:1740px;width:864px;background:#f2f2f2"></i><i style="left:2604px;width:36px;background:#262626"></i></div>
<div class="r" style="top:1398px"><i style="left:84px;width:12px;background:#262626"></i><i style="left:96px;width:996px;background:#2a1d50"></i><i style="left:1092px;width:12px;background:#262626"></i><i style="left:1176px;width:468px;background:#262626"></i><i style="left:1728px;width:12px;background:#262626"></i><i style="left:1740px;width:864px;background:#f2f2f2"></i><i style="left:2604px;width:36px;background:#262626"></i></div>
<div class="r" style="top:1423.5px"><i style="left:84px;width:12px;background:#262626"></i><i style="left:96px;width:984px;background:#2d1b50"></i><i style="left:1080px;width:24px;background:#262626"></i><i style="left:1176px;width:468px;background:#262626"></i><i style="left:1728px;width:12px;background:#262626"></i><i style="left:1740px;width:864px;background:#f2f2f2"></i><i style="left:2604px;width:36px;background:#262626"></i></div>
<div class="r" style="top:1449px"><i style="left:84px;width:12px;background:#262626"></i><i style="left:96px;width:24px;background:#301950"></i><i style="left:120px;width:516px;background:#0000ff"></i><i style="left:636px;width:444px;background:#301950"></i><i style="left:1080px;width:24px;background:#262626"></i><i style="left:1176px;width:468px;background:#262626"></i><i style="left:1728px;width:12px;background:#262626"></i><i style="left:1740px;width:864px;background:#f2f2f2"></i><i style="left:2604px;width:36px;background:#262626"></i></div>
<div class="r" style="top:1474.5px"><i style="left:84px;width:984px;background:#262626"></i><i style="left:1068px;width:12px;background:#33174f"></i><i style="left:1080px;width:24px;background:#262626"></i><i style="left:1176px;width:468px;background:#262626"></i><i style="left:1728px;width:12px;background:#262626"></i><i style="left:1740px;width:864px;background:#f2f2f2"></i><i style="left:2604px;width:36px;background:#262626"></i></div>
<div class="r" style="top:1500px"><i style="left:84px;width:12px;background:#262626"></i><i style="left:96px;width:984px;background:#35144f"></i><i style="left:1080px;width:24px;background:#262626"></i><i style="left:1176px;width:468px;background:#262626"></i><i style="left:1728px;width:12px;background:#262626"></i><i style="left:1740px;width:864px;background:#f2f2f2"></i><i style="left:2604px;width:36px;background:#262626"></i></div>
<div class="r" style="top:1525.5px"><i style="left:84px;width:12px;background:#262626"></i><i style="left:96px;width:984px;background:#38124f"></i><i style="left:1080px;width:24px;background:#262626"></i><i style="left:1176px;width:468px;background:#262626"></i><i style="left:1728px;width:912px;background:#262626"></i></div>
<div class="r" style="top:1551px"><i style="left:84px;width:984px;background:#262626"></i><i style="left:1068px;width:12px;background:#3b104f"></i><i style="left:1080px;width:24px;background:#262626"></i><i style="left:1176px;width:468px;background:#262626"></i><i style="left:1728px;width:912px;background:#262626"></i></div>
<div class="r" style="top:1576.5px"><i style="left:84px;width:1020px;background:#262626"></i><i style="left:1176px;width:468px;background:#262626"></i><i style="left:1728px;width:912px;background:#262626"></i></div>
<div class="r" style="top:1602px"><i style="left:1176px;width:468px;background:#262626"></i></div>
<div class="r" style="top:1627.5px"><i style="left:1176px;width:468px;background:#262626"></i></div>
<div class="r" style="top:1704px"><i style="left:0px;width:2796px;background:#262626"></i></div>
<svg class="ab" style="left:882px;top:378px" width="600" height="612" viewBox="0 0 50 24" preserveAspectRatio="none" shape-rendering="crispEdges">
<rect x="0" y="0" width="1.02" height="1.02" fill="#1ba6ad"/>
<rect x="1" y="0" width="1.02" height="1.02" fill="#1babad"/>
<rect x="2" y="0" width="1.02" height="1.02" fill="#1badaa"/>
<rect x="3" y="0" width="1.02" height="1.02" fill="#1bada2"/>
<rect x="4" y="0" width="1.02" height="1.02" fill="#1bad9b"/>
<rect x="5" y="0" width="1.02" height="1.02" fill="#1bad93"/>
<rect x="6" y="0" width="1.02" height="1.02" fill="#1bad8c"/>
<rect x="7" y="0" width="1.02" height="1.02" fill="#1bad84"/>
<rect x="8" y="0" width="1.02" height="1.02" fill="#1bad7d"/>
<rect x="9" y="0" width="1.02" height="1.02" fill="#1bad76"/>
<rect x="10" y="0" width="1.02" height="1.02" fill="#1bad6e"/>
<rect x="11" y="0" width="1.02" height="1.02" fill="#1bad67"/>
<rect x="12" y="0" width="1.02" height="1.02" fill="#1bad5f"/>
<rect x="13" y="0" width="1.02" height="1.02" fill="#1bad5c"/>
<rect x="14" y="0" width="1.02" height="1.02" fill="#1bad59"/>
<rect x="15" y="0" width="1.02" height="1.02" fill="#1bad56"/>
<rect x="16" y="0" width="1.02" height="1.02" fill="#1bad53"/>
<rect x="17" y="0" width="1.02" height="1.02" fill="#1bad50"/>
<rect x="18" y="0" width="1.02" height="1.02" fill="#1bad4d"/>
<rect x="19" y="0" width="1.02" height="1.02" fill="#1bad4a"/>
<rect x="20" y="0" width="1.02" height="1.02" fill="#1bad47"/>
<rect x="21" y="0" width="1.02" height="1.02" fill="#1bad44"/>
<rect x="22" y="0" width="1.02" height="1.02" fill="#1bad42"/>
<rect x="23" y="0" width="1.02" height="1.02" fill="#1bad40"/>
<rect x="24" y="0" width="1.02" height="1.02" fill="#1bad3d"/>
<rect x="25" y="0" width="1.02" height="1.02" fill="#1bad3b"/>
<rect x="26" y="0" width="1.02" height="1.02" fill="#1bad3c"/>
<rect x="27" y="0" width="1.02" height="1.02" fill="#1bad3d"/>
<rect x="28" y="0" width="1.02" height="1.02" fill="#1bad3e"/>
<rect x="29" y="0" width="1.02" height="1.02" fill="#1bad3f"/>
<rect x="30" y="0" width="1.02" height="1.02" fill="#1bad40"/>
<rect x="31" y="0" width="1.02" height="1.02" fill="#1bad41"/>
<rect x="32" y="0" width="1.02" height="1.02" fill="#1bad43"/>
<rect x="33" y="0" width="1.02" height="1.02" fill="#1bad45"/>
<rect x="34" y="0" width="1.02" height="1.02" fill="#1bad46"/>
<rect x="35" y="0" width="1.02" height="1.02" fill="#1bad48"/>
<rect x="36" y="0" width="1.02" height="1.02" fill="#1bad4a"/>
<rect x="37" y="0" width="1.02" height="1.02" fill="#1bad4c"/>
<rect x="38" y="0" width="1.02" height="1.02" fill="#1bad57"/>
<rect x="39" y="0" width="1.02" height="1.02" fill="#1bad63"/>
<rect x="40" y="0" width="1.02" height="1.02" fill="#1bad6e"/>
<rect x="41" y="0" width="1.02" height="1.02" fill="#1bad7a"/>
<rect x="42" y="0" width="1.02" height="1.02" fill="#1bad85"/>
<rect x="43" y="0" width="1.02" height="1.02" fill="#1bad91"/>
<rect x="44" y="0" width="1.02" height="1.02" fill="#1bad9c"/>
<rect x="45" y="0" width="1.02" height="1.02" fill="#1bada8"/>
<rect x="46" y="0" width="1.02" height="1.02" fill="#1ba5ad"/>
<rect x="47" y="0" width="1.02" height="1.02" fill="#1b93ad"/>
<rect x="48" y="0" width="1.02" height="1.02" fill="#1b82ad"/>
<rect x="49" y="0" width="1.02" height="1.02" fill="#1b70ad"/>
<rect x="0" y="1" width="1.02" height="1.02" fill="#1b95ad"/>
<rect x="1" y="1" width="1.02" height="1.02" fill="#1b9dad"/>
<rect x="2" y="1" width="1.02" height="1.02" fill="#1ba5ad"/>
<rect x="3" y="1" width="1.02" height="1.02" fill="#1badad"/>
<rect x="4" y="1" width="1.02" height="1.02" fill="#1bada4"/>
<rect x="5" y="1" width="1.02" height="1.02" fill="#1bad9a"/>
<rect x="6" y="1" width="1.02" height="1.02" fill="#1bad91"/>
<rect x="7" y="1" width="1.02" height="1.02" fill="#1bad87"/>
<rect x="8" y="1" width="1.02" height="1.02" fill="#1bad7e"/>
<rect x="9" y="1" width="1.02" height="1.02" fill="#1bad74"/>
<rect x="10" y="1" width="1.02" height="1.02" fill="#1bad6b"/>
<rect x="11" y="1" width="1.02" height="1.02" fill="#1bad61"/>
<rect x="12" y="1" width="1.02" height="1.02" fill="#1bad58"/>
<rect x="13" y="1" width="1.02" height="1.02" fill="#1bad52"/>
<rect x="14" y="1" width="1.02" height="1.02" fill="#1bad4c"/>
<rect x="15" y="1" width="1.02" height="1.02" fill="#1bad47"/>
<rect x="16" y="1" width="1.02" height="1.02" fill="#1bad41"/>
<rect x="17" y="1" width="1.02" height="1.02" fill="#1bad3b"/>
<rect x="18" y="1" width="1.02" height="1.02" fill="#1bad35"/>
<rect x="19" y="1" width="1.02" height="1.02" fill="#1bad2f"/>
<rect x="20" y="1" width="1.02" height="1.02" fill="#1bad2a"/>
<rect x="21" y="1" width="1.02" height="1.02" fill="#1bad27"/>
<rect x="22" y="1" width="1.02" height="1.02" fill="#1bad25"/>
<rect x="23" y="1" width="1.02" height="1.02" fill="#1bad22"/>
<rect x="24" y="1" width="1.02" height="1.02" fill="#1bad20"/>
<rect x="25" y="1" width="1.02" height="1.02" fill="#1bad1d"/>
<rect x="26" y="1" width="1.02" height="1.02" fill="#1bad1f"/>
<rect x="27" y="1" width="1.02" height="1.02" fill="#1bad20"/>
<rect x="28" y="1" width="1.02" height="1.02" fill="#1bad22"/>
<rect x="29" y="1" width="1.02" height="1.02" fill="#1bad23"/>
<rect x="30" y="1" width="1.02" height="1.02" fill="#1bad25"/>
<rect x="31" y="1" width="1.02" height="1.02" fill="#1bad2a"/>
<rect x="32" y="1" width="1.02" height="1.02" fill="#1bad2f"/>
<rect x="33" y="1" width="1.02" height="1.02" fill="#1bad35"/>
<rect x="34" y="1" width="1.02" height="1.02" fill="#1bad3a"/>
<rect x="35" y="1" width="1.02" height="1.02" fill="#1bad40"/>
<rect x="36" y="1" width="1.02" height="1.02" fill="#1bad49"/>
<rect x="37" y="1" width="1.02" height="1.02" fill="#1bad53"/>
<rect x="38" y="1" width="1.02" height="1.02" fill="#1bad5d"/>
<rect x="39" y="1" width="1.02" height="1.02" fill="#1bad67"/>
<rect x="40" y="1" width="1.02" height="1.02" fill="#1bad70"/>
<rect x="41" y="1" width="1.02" height="1.02" fill="#1bad80"/>
<rect x="42" y="1" width="1.02" height="1.02" fill="#1bad8f"/>
<rect x="43" y="1" width="1.02" height="1.02" fill="#1bad9e"/>
<rect x="44" y="1" width="1.02" height="1.02" fill="#1badad"/>
<rect x="45" y="1" width="1.02" height="1.02" fill="#1b9cad"/>
<rect x="46" y="1" width="1.02" height="1.02" fill="#1b8bad"/>
<rect x="47" y="1" width="1.02" height="1.02" fill="#1b7aad"/>
<rect x="48" y="1" width="1.02" height="1.02" fill="#1b69ad"/>
<rect x="49" y="1" width="1.02" height="1.02" fill="#1b58ad"/>
<rect x="0" y="2" width="1.02" height="1.02" fill="#1b84ad"/>
<rect x="1" y="2" width="1.02" height="1.02" fill="#1b8cad"/>
<rect x="2" y="2" width="1.02" height="1.02" fill="#1b94ad"/>
<rect x="3" y="2" width="1.02" height="1.02" fill="#1b9dad"/>
<rect x="4" y="2" width="1.02" height="1.02" fill="#1ba5ad"/>
<rect x="5" y="2" width="1.02" height="1.02" fill="#1badad"/>
<rect x="6" y="2" width="1.02" height="1.02" fill="#1bada3"/>
<rect x="7" y="2" width="1.02" height="1.02" fill="#1bad98"/>
<rect x="8" y="2" width="1.02" height="1.02" fill="#1bad8e"/>
<rect x="9" y="2" width="1.02" height="1.02" fill="#1bad84"/>
<rect x="10" y="2" width="1.02" height="1.02" fill="#1bad79"/>
<rect x="11" y="2" width="1.02" height="1.02" fill="#1bad6f"/>
<rect x="12" y="2" width="1.02" height="1.02" fill="#1bad64"/>
<rect x="13" y="2" width="1.02" height="1.02" fill="#1bad5e"/>
<rect x="14" y="2" width="1.02" height="1.02" fill="#1bad58"/>
<rect x="15" y="2" width="1.02" height="1.02" fill="#1bad52"/>
<rect x="16" y="2" width="1.02" height="1.02" fill="#1bad4c"/>
<rect x="17" y="2" width="1.02" height="1.02" fill="#1bad46"/>
<rect x="18" y="2" width="1.02" height="1.02" fill="#1bad40"/>
<rect x="19" y="2" width="1.02" height="1.02" fill="#1bad39"/>
<rect x="20" y="2" width="1.02" height="1.02" fill="#1bad33"/>
<rect x="21" y="2" width="1.02" height="1.02" fill="#1bad30"/>
<rect x="22" y="2" width="1.02" height="1.02" fill="#1bad2d"/>
<rect x="23" y="2" width="1.02" height="1.02" fill="#1bad2b"/>
<rect x="24" y="2" width="1.02" height="1.02" fill="#1bad28"/>
<rect x="25" y="2" width="1.02" height="1.02" fill="#1bad25"/>
<rect x="26" y="2" width="1.02" height="1.02" fill="#1bad26"/>
<rect x="27" y="2" width="1.02" height="1.02" fill="#1bad28"/>
<rect x="28" y="2" width="1.02" height="1.02" fill="#1bad29"/>
<rect x="29" y="2" width="1.02" height="1.02" fill="#1bad2b"/>
<rect x="30" y="2" width="1.02" height="1.02" fill="#1bad2c"/>
<rect x="31" y="2" width="1.02" height="1.02" fill="#1bad32"/>
<rect x="32" y="2" width="1.02" height="1.02" fill="#1bad39"/>
<rect x="33" y="2" width="1.02" height="1.02" fill="#1bad3f"/>
<rect x="34" y="2" width="1.02" height="1.02" fill="#1bad45"/>
<rect x="35" y="2" width="1.02" height="1.02" fill="#1bad4c"/>
<rect x="36" y="2" width="1.02" height="1.02" fill="#1bad59"/>
<rect x="37" y="2" width="1.02" height="1.02" fill="#1bad66"/>
<rect x="38" y="2" width="1.02" height="1.02" fill="#1bad73"/>
<rect x="39" y="2" width="1.02" height="1.02" fill="#1bad80"/>
<rect x="40" y="2" width="1.02" height="1.02" fill="#1bad8d"/>
<rect x="41" y="2" width="1.02" height="1.02" fill="#1bad9a"/>
<rect x="42" y="2" width="1.02" height="1.02" fill="#1bada7"/>
<rect x="43" y="2" width="1.02" height="1.02" fill="#1ba5ad"/>
<rect x="44" y="2" width="1.02" height="1.02" fill="#1b94ad"/>
<rect x="45" y="2" width="1.02" height="1.02" fill="#1b83ad"/>
<rect x="46" y="2" width="1.02" height="1.02" fill="#1b72ad"/>
<rect x="47" y="2" width="1.02" height="1.02" fill="#1b61ad"/>
<rect x="48" y="2" width="1.02" height="1.02" fill="#1b50ad"/>
<rect x="49" y="2" width="1.02" height="1.02" fill="#1b40ad"/>
<rect x="0" y="3" width="1.02" height="1.02" fill="#1b75ad"/>
<rect x="1" y="3" width="1.02" height="1.02" fill="#1b7ead"/>
<rect x="2" y="3" width="1.02" height="1.02" fill="#1b87ad"/>
<rect x="3" y="3" width="1.02" height="1.02" fill="#1b8fad"/>
<rect x="4" y="3" width="1.02" height="1.02" fill="#1b98ad"/>
<rect x="5" y="3" width="1.02" height="1.02" fill="#1ba0ad"/>
<rect x="6" y="3" width="1.02" height="1.02" fill="#1ba9ad"/>
<rect x="7" y="3" width="1.02" height="1.02" fill="#1bada8"/>
<rect x="8" y="3" width="1.02" height="1.02" fill="#1bad9d"/>
<rect x="9" y="3" width="1.02" height="1.02" fill="#1bad92"/>
<rect x="10" y="3" width="1.02" height="1.02" fill="#1bad87"/>
<rect x="11" y="3" width="1.02" height="1.02" fill="#1bad7b"/>
<rect x="12" y="3" width="1.02" height="1.02" fill="#1bad70"/>
<rect x="13" y="3" width="1.02" height="1.02" fill="#1bad6a"/>
<rect x="14" y="3" width="1.02" height="1.02" fill="#1bad64"/>
<rect x="15" y="3" width="1.02" height="1.02" fill="#1bad5e"/>
<rect x="16" y="3" width="1.02" height="1.02" fill="#1bad58"/>
<rect x="17" y="3" width="1.02" height="1.02" fill="#1bad52"/>
<rect x="18" y="3" width="1.02" height="1.02" fill="#1bad4c"/>
<rect x="19" y="3" width="1.02" height="1.02" fill="#1bad46"/>
<rect x="20" y="3" width="1.02" height="1.02" fill="#1bad40"/>
<rect x="21" y="3" width="1.02" height="1.02" fill="#1bad3d"/>
<rect x="22" y="3" width="1.02" height="1.02" fill="#1bad3b"/>
<rect x="23" y="3" width="1.02" height="1.02" fill="#1bad38"/>
<rect x="24" y="3" width="1.02" height="1.02" fill="#1bad36"/>
<rect x="25" y="3" width="1.02" height="1.02" fill="#1bad33"/>
<rect x="26" y="3" width="1.02" height="1.02" fill="#1bad35"/>
<rect x="27" y="3" width="1.02" height="1.02" fill="#1bad36"/>
<rect x="28" y="3" width="1.02" height="1.02" fill="#1bad38"/>
<rect x="29" y="3" width="1.02" height="1.02" fill="#1bad39"/>
<rect x="30" y="3" width="1.02" height="1.02" fill="#1bad3b"/>
<rect x="31" y="3" width="1.02" height="1.02" fill="#1bad42"/>
<rect x="32" y="3" width="1.02" height="1.02" fill="#1bad49"/>
<rect x="33" y="3" width="1.02" height="1.02" fill="#1bad51"/>
<rect x="34" y="3" width="1.02" height="1.02" fill="#1bad58"/>
<rect x="35" y="3" width="1.02" height="1.02" fill="#1bad5f"/>
<rect x="36" y="3" width="1.02" height="1.02" fill="#1bad6c"/>
<rect x="37" y="3" width="1.02" height="1.02" fill="#1bad79"/>
<rect x="38" y="3" width="1.02" height="1.02" fill="#1bad86"/>
<rect x="39" y="3" width="1.02" height="1.02" fill="#1bad93"/>
<rect x="40" y="3" width="1.02" height="1.02" fill="#1bada0"/>
<rect x="41" y="3" width="1.02" height="1.02" fill="#1badad"/>
<rect x="42" y="3" width="1.02" height="1.02" fill="#1b9dad"/>
<rect x="43" y="3" width="1.02" height="1.02" fill="#1b8cad"/>
<rect x="44" y="3" width="1.02" height="1.02" fill="#1b7bad"/>
<rect x="45" y="3" width="1.02" height="1.02" fill="#1b6aad"/>
<rect x="46" y="3" width="1.02" height="1.02" fill="#1b59ad"/>
<rect x="47" y="3" width="1.02" height="1.02" fill="#1b49ad"/>
<rect x="48" y="3" width="1.02" height="1.02" fill="#1b38ad"/>
<rect x="49" y="3" width="1.02" height="1.02" fill="#1b27ad"/>
<rect x="0" y="4" width="1.02" height="1.02" fill="#1b6bad"/>
<rect x="1" y="4" width="1.02" height="1.02" fill="#1b74ad"/>
<rect x="2" y="4" width="1.02" height="1.02" fill="#1b7dad"/>
<rect x="3" y="4" width="1.02" height="1.02" fill="#1b86ad"/>
<rect x="4" y="4" width="1.02" height="1.02" fill="#1b8fad"/>
<rect x="5" y="4" width="1.02" height="1.02" fill="#1b97ad"/>
<rect x="6" y="4" width="1.02" height="1.02" fill="#1ba0ad"/>
<rect x="7" y="4" width="1.02" height="1.02" fill="#1ba9ad"/>
<rect x="8" y="4" width="1.02" height="1.02" fill="#1bada8"/>
<rect x="9" y="4" width="1.02" height="1.02" fill="#1bad9d"/>
<rect x="10" y="4" width="1.02" height="1.02" fill="#1bad92"/>
<rect x="11" y="4" width="1.02" height="1.02" fill="#1bad87"/>
<rect x="12" y="4" width="1.02" height="1.02" fill="#1bad7d"/>
<rect x="13" y="4" width="1.02" height="1.02" fill="#1bad76"/>
<rect x="14" y="4" width="1.02" height="1.02" fill="#1bad70"/>
<rect x="15" y="4" width="1.02" height="1.02" fill="#1bad6a"/>
<rect x="16" y="4" width="1.02" height="1.02" fill="#1bad64"/>
<rect x="17" y="4" width="1.02" height="1.02" fill="#1bad5e"/>
<rect x="18" y="4" width="1.02" height="1.02" fill="#1bad58"/>
<rect x="19" y="4" width="1.02" height="1.02" fill="#1bad52"/>
<rect x="20" y="4" width="1.02" height="1.02" fill="#1bad4c"/>
<rect x="21" y="4" width="1.02" height="1.02" fill="#1bad4a"/>
<rect x="22" y="4" width="1.02" height="1.02" fill="#1bad48"/>
<rect x="23" y="4" width="1.02" height="1.02" fill="#1bad46"/>
<rect x="24" y="4" width="1.02" height="1.02" fill="#1bad44"/>
<rect x="25" y="4" width="1.02" height="1.02" fill="#1bad42"/>
<rect x="26" y="4" width="1.02" height="1.02" fill="#1bad44"/>
<rect x="27" y="4" width="1.02" height="1.02" fill="#1bad46"/>
<rect x="28" y="4" width="1.02" height="1.02" fill="#1bad48"/>
<rect x="29" y="4" width="1.02" height="1.02" fill="#1bad4a"/>
<rect x="30" y="4" width="1.02" height="1.02" fill="#1bad4c"/>
<rect x="31" y="4" width="1.02" height="1.02" fill="#1bad55"/>
<rect x="32" y="4" width="1.02" height="1.02" fill="#1bad5d"/>
<rect x="33" y="4" width="1.02" height="1.02" fill="#1bad66"/>
<rect x="34" y="4" width="1.02" height="1.02" fill="#1bad6f"/>
<rect x="35" y="4" width="1.02" height="1.02" fill="#1bad78"/>
<rect x="36" y="4" width="1.02" height="1.02" fill="#1bad84"/>
<rect x="37" y="4" width="1.02" height="1.02" fill="#1bad90"/>
<rect x="38" y="4" width="1.02" height="1.02" fill="#1bad9b"/>
<rect x="39" y="4" width="1.02" height="1.02" fill="#1bada7"/>
<rect x="40" y="4" width="1.02" height="1.02" fill="#1ba5ad"/>
<rect x="41" y="4" width="1.02" height="1.02" fill="#1b95ad"/>
<rect x="42" y="4" width="1.02" height="1.02" fill="#1b86ad"/>
<rect x="43" y="4" width="1.02" height="1.02" fill="#1b76ad"/>
<rect x="44" y="4" width="1.02" height="1.02" fill="#1b66ad"/>
<rect x="45" y="4" width="1.02" height="1.02" fill="#1b56ad"/>
<rect x="46" y="4" width="1.02" height="1.02" fill="#1b46ad"/>
<rect x="47" y="4" width="1.02" height="1.02" fill="#1b36ad"/>
<rect x="48" y="4" width="1.02" height="1.02" fill="#1b26ad"/>
<rect x="49" y="4" width="1.02" height="1.02" fill="#201bad"/>
<rect x="0" y="5" width="1.02" height="1.02" fill="#1b64ad"/>
<rect x="1" y="5" width="1.02" height="1.02" fill="#1b6dad"/>
<rect x="2" y="5" width="1.02" height="1.02" fill="#1b76ad"/>
<rect x="3" y="5" width="1.02" height="1.02" fill="#1b80ad"/>
<rect x="4" y="5" width="1.02" height="1.02" fill="#1b89ad"/>
<rect x="5" y="5" width="1.02" height="1.02" fill="#1b92ad"/>
<rect x="6" y="5" width="1.02" height="1.02" fill="#1b9bad"/>
<rect x="7" y="5" width="1.02" height="1.02" fill="#1ba4ad"/>
<rect x="8" y="5" width="1.02" height="1.02" fill="#1badad"/>
<rect x="9" y="5" width="1.02" height="1.02" fill="#1bada3"/>
<rect x="10" y="5" width="1.02" height="1.02" fill="#1bad99"/>
<rect x="11" y="5" width="1.02" height="1.02" fill="#1bad8e"/>
<rect x="12" y="5" width="1.02" height="1.02" fill="#1bad84"/>
<rect x="13" y="5" width="1.02" height="1.02" fill="#1bad7e"/>
<rect x="14" y="5" width="1.02" height="1.02" fill="#1bad79"/>
<rect x="15" y="5" width="1.02" height="1.02" fill="#1bad73"/>
<rect x="16" y="5" width="1.02" height="1.02" fill="#1bad6e"/>
<rect x="17" y="5" width="1.02" height="1.02" fill="#1bad68"/>
<rect x="18" y="5" width="1.02" height="1.02" fill="#1bad63"/>
<rect x="19" y="5" width="1.02" height="1.02" fill="#1bad5d"/>
<rect x="20" y="5" width="1.02" height="1.02" fill="#1bad58"/>
<rect x="21" y="5" width="1.02" height="1.02" fill="#1bad56"/>
<rect x="22" y="5" width="1.02" height="1.02" fill="#1bad54"/>
<rect x="23" y="5" width="1.02" height="1.02" fill="#1bad52"/>
<rect x="24" y="5" width="1.02" height="1.02" fill="#1bad50"/>
<rect x="25" y="5" width="1.02" height="1.02" fill="#1bad4e"/>
<rect x="26" y="5" width="1.02" height="1.02" fill="#1bad51"/>
<rect x="27" y="5" width="1.02" height="1.02" fill="#1bad53"/>
<rect x="28" y="5" width="1.02" height="1.02" fill="#1bad55"/>
<rect x="29" y="5" width="1.02" height="1.02" fill="#1bad58"/>
<rect x="30" y="5" width="1.02" height="1.02" fill="#1bad5a"/>
<rect x="31" y="5" width="1.02" height="1.02" fill="#1bad64"/>
<rect x="32" y="5" width="1.02" height="1.02" fill="#1bad6e"/>
<rect x="33" y="5" width="1.02" height="1.02" fill="#1bad78"/>
<rect x="34" y="5" width="1.02" height="1.02" fill="#1bad81"/>
<rect x="35" y="5" width="1.02" height="1.02" fill="#1bad8b"/>
<rect x="36" y="5" width="1.02" height="1.02" fill="#1bad97"/>
<rect x="37" y="5" width="1.02" height="1.02" fill="#1bada2"/>
<rect x="38" y="5" width="1.02" height="1.02" fill="#1badad"/>
<rect x="39" y="5" width="1.02" height="1.02" fill="#1b9fad"/>
<rect x="40" y="5" width="1.02" height="1.02" fill="#1b91ad"/>
<rect x="41" y="5" width="1.02" height="1.02" fill="#1b84ad"/>
<rect x="42" y="5" width="1.02" height="1.02" fill="#1b76ad"/>
<rect x="43" y="5" width="1.02" height="1.02" fill="#1b68ad"/>
<rect x="44" y="5" width="1.02" height="1.02" fill="#1b5aad"/>
<rect x="45" y="5" width="1.02" height="1.02" fill="#1b4cad"/>
<rect x="46" y="5" width="1.02" height="1.02" fill="#1b3ead"/>
<rect x="47" y="5" width="1.02" height="1.02" fill="#1b30ad"/>
<rect x="48" y="5" width="1.02" height="1.02" fill="#1b22ad"/>
<rect x="49" y="5" width="1.02" height="1.02" fill="#2c1bad"/>
<rect x="0" y="6" width="1.02" height="1.02" fill="#1b62ad"/>
<rect x="1" y="6" width="1.02" height="1.02" fill="#1b6bad"/>
<rect x="2" y="6" width="1.02" height="1.02" fill="#1b74ad"/>
<rect x="3" y="6" width="1.02" height="1.02" fill="#1b7cad"/>
<rect x="4" y="6" width="1.02" height="1.02" fill="#1b85ad"/>
<rect x="5" y="6" width="1.02" height="1.02" fill="#1b8ead"/>
<rect x="6" y="6" width="1.02" height="1.02" fill="#1b97ad"/>
<rect x="7" y="6" width="1.02" height="1.02" fill="#1ba0ad"/>
<rect x="8" y="6" width="1.02" height="1.02" fill="#1ba9ad"/>
<rect x="9" y="6" width="1.02" height="1.02" fill="#1bada8"/>
<rect x="10" y="6" width="1.02" height="1.02" fill="#1bad9e"/>
<rect x="11" y="6" width="1.02" height="1.02" fill="#1bad93"/>
<rect x="12" y="6" width="1.02" height="1.02" fill="#1bad89"/>
<rect x="13" y="6" width="1.02" height="1.02" fill="#1bad84"/>
<rect x="14" y="6" width="1.02" height="1.02" fill="#1bad7e"/>
<rect x="15" y="6" width="1.02" height="1.02" fill="#1bad79"/>
<rect x="16" y="6" width="1.02" height="1.02" fill="#1bad74"/>
<rect x="17" y="6" width="1.02" height="1.02" fill="#1bad6f"/>
<rect x="18" y="6" width="1.02" height="1.02" fill="#1bad6a"/>
<rect x="19" y="6" width="1.02" height="1.02" fill="#1bad64"/>
<rect x="20" y="6" width="1.02" height="1.02" fill="#1bad5f"/>
<rect x="21" y="6" width="1.02" height="1.02" fill="#1bad5e"/>
<rect x="22" y="6" width="1.02" height="1.02" fill="#1bad5c"/>
<rect x="23" y="6" width="1.02" height="1.02" fill="#1bad5b"/>
<rect x="24" y="6" width="1.02" height="1.02" fill="#1bad59"/>
<rect x="25" y="6" width="1.02" height="1.02" fill="#1bad58"/>
<rect x="26" y="6" width="1.02" height="1.02" fill="#1bad5b"/>
<rect x="27" y="6" width="1.02" height="1.02" fill="#1bad5f"/>
<rect x="28" y="6" width="1.02" height="1.02" fill="#1bad62"/>
<rect x="29" y="6" width="1.02" height="1.02" fill="#1bad66"/>
<rect x="30" y="6" width="1.02" height="1.02" fill="#1bad69"/>
<rect x="31" y="6" width="1.02" height="1.02" fill="#1bad74"/>
<rect x="32" y="6" width="1.02" height="1.02" fill="#1bad7f"/>
<rect x="33" y="6" width="1.02" height="1.02" fill="#1bad8a"/>
<rect x="34" y="6" width="1.02" height="1.02" fill="#1bad95"/>
<rect x="35" y="6" width="1.02" height="1.02" fill="#1bad9f"/>
<rect x="36" y="6" width="1.02" height="1.02" fill="#1bada9"/>
<rect x="37" y="6" width="1.02" height="1.02" fill="#1ba7ad"/>
<rect x="38" y="6" width="1.02" height="1.02" fill="#1b9aad"/>
<rect x="39" y="6" width="1.02" height="1.02" fill="#1b8ead"/>
<rect x="40" y="6" width="1.02" height="1.02" fill="#1b81ad"/>
<rect x="41" y="6" width="1.02" height="1.02" fill="#1b74ad"/>
<rect x="42" y="6" width="1.02" height="1.02" fill="#1b67ad"/>
<rect x="43" y="6" width="1.02" height="1.02" fill="#1b5bad"/>
<rect x="44" y="6" width="1.02" height="1.02" fill="#1b4ead"/>
<rect x="45" y="6" width="1.02" height="1.02" fill="#1b41ad"/>
<rect x="46" y="6" width="1.02" height="1.02" fill="#1b34ad"/>
<rect x="47" y="6" width="1.02" height="1.02" fill="#1b28ad"/>
<rect x="48" y="6" width="1.02" height="1.02" fill="#1b1bad"/>
<rect x="49" y="6" width="1.02" height="1.02" fill="#381bad"/>
<rect x="0" y="7" width="1.02" height="1.02" fill="#1b69ad"/>
<rect x="1" y="7" width="1.02" height="1.02" fill="#1b71ad"/>
<rect x="2" y="7" width="1.02" height="1.02" fill="#1b79ad"/>
<rect x="3" y="7" width="1.02" height="1.02" fill="#1b81ad"/>
<rect x="4" y="7" width="1.02" height="1.02" fill="#1b89ad"/>
<rect x="5" y="7" width="1.02" height="1.02" fill="#1b91ad"/>
<rect x="6" y="7" width="1.02" height="1.02" fill="#1b99ad"/>
<rect x="7" y="7" width="1.02" height="1.02" fill="#1ba1ad"/>
<rect x="8" y="7" width="1.02" height="1.02" fill="#1ba9ad"/>
<rect x="9" y="7" width="1.02" height="1.02" fill="#1bada9"/>
<rect x="10" y="7" width="1.02" height="1.02" fill="#1bad9f"/>
<rect x="11" y="7" width="1.02" height="1.02" fill="#1bad95"/>
<rect x="12" y="7" width="1.02" height="1.02" fill="#1bad8b"/>
<rect x="13" y="7" width="1.02" height="1.02" fill="#1bad86"/>
<rect x="14" y="7" width="1.02" height="1.02" fill="#1bad81"/>
<rect x="15" y="7" width="1.02" height="1.02" fill="#1bad7d"/>
<rect x="16" y="7" width="1.02" height="1.02" fill="#1bad78"/>
<rect x="17" y="7" width="1.02" height="1.02" fill="#1bad73"/>
<rect x="18" y="7" width="1.02" height="1.02" fill="#1bad6e"/>
<rect x="19" y="7" width="1.02" height="1.02" fill="#1bad69"/>
<rect x="20" y="7" width="1.02" height="1.02" fill="#1bad64"/>
<rect x="21" y="7" width="1.02" height="1.02" fill="#1bad63"/>
<rect x="22" y="7" width="1.02" height="1.02" fill="#1bad62"/>
<rect x="23" y="7" width="1.02" height="1.02" fill="#1bad61"/>
<rect x="24" y="7" width="1.02" height="1.02" fill="#1bad60"/>
<rect x="25" y="7" width="1.02" height="1.02" fill="#1bad5f"/>
<rect x="26" y="7" width="1.02" height="1.02" fill="#1bad64"/>
<rect x="27" y="7" width="1.02" height="1.02" fill="#1bad68"/>
<rect x="28" y="7" width="1.02" height="1.02" fill="#1bad6c"/>
<rect x="29" y="7" width="1.02" height="1.02" fill="#1bad71"/>
<rect x="30" y="7" width="1.02" height="1.02" fill="#1bad75"/>
<rect x="31" y="7" width="1.02" height="1.02" fill="#1bad7f"/>
<rect x="32" y="7" width="1.02" height="1.02" fill="#1bad8a"/>
<rect x="33" y="7" width="1.02" height="1.02" fill="#1bad94"/>
<rect x="34" y="7" width="1.02" height="1.02" fill="#1bad9e"/>
<rect x="35" y="7" width="1.02" height="1.02" fill="#1bada8"/>
<rect x="36" y="7" width="1.02" height="1.02" fill="#1ba7ad"/>
<rect x="37" y="7" width="1.02" height="1.02" fill="#1b9aad"/>
<rect x="38" y="7" width="1.02" height="1.02" fill="#1b8ead"/>
<rect x="39" y="7" width="1.02" height="1.02" fill="#1b81ad"/>
<rect x="40" y="7" width="1.02" height="1.02" fill="#1b74ad"/>
<rect x="41" y="7" width="1.02" height="1.02" fill="#1b67ad"/>
<rect x="42" y="7" width="1.02" height="1.02" fill="#1b5bad"/>
<rect x="43" y="7" width="1.02" height="1.02" fill="#1b4ead"/>
<rect x="44" y="7" width="1.02" height="1.02" fill="#1b41ad"/>
<rect x="45" y="7" width="1.02" height="1.02" fill="#1b34ad"/>
<rect x="46" y="7" width="1.02" height="1.02" fill="#1b28ad"/>
<rect x="47" y="7" width="1.02" height="1.02" fill="#1b1bad"/>
<rect x="48" y="7" width="1.02" height="1.02" fill="#301bad"/>
<rect x="49" y="7" width="1.02" height="1.02" fill="#441bad"/>
<rect x="0" y="8" width="1.02" height="1.02" fill="#1b70ad"/>
<rect x="1" y="8" width="1.02" height="1.02" fill="#1b78ad"/>
<rect x="2" y="8" width="1.02" height="1.02" fill="#1b80ad"/>
<rect x="3" y="8" width="1.02" height="1.02" fill="#1b87ad"/>
<rect x="4" y="8" width="1.02" height="1.02" fill="#1b8fad"/>
<rect x="5" y="8" width="1.02" height="1.02" fill="#1b97ad"/>
<rect x="6" y="8" width="1.02" height="1.02" fill="#1b9ead"/>
<rect x="7" y="8" width="1.02" height="1.02" fill="#1ba6ad"/>
<rect x="8" y="8" width="1.02" height="1.02" fill="#1badad"/>
<rect x="9" y="8" width="1.02" height="1.02" fill="#1bada5"/>
<rect x="10" y="8" width="1.02" height="1.02" fill="#1bad9c"/>
<rect x="11" y="8" width="1.02" height="1.02" fill="#1bad94"/>
<rect x="12" y="8" width="1.02" height="1.02" fill="#1bad8b"/>
<rect x="13" y="8" width="1.02" height="1.02" fill="#1bad87"/>
<rect x="14" y="8" width="1.02" height="1.02" fill="#1bad83"/>
<rect x="15" y="8" width="1.02" height="1.02" fill="#1bad7e"/>
<rect x="16" y="8" width="1.02" height="1.02" fill="#1bad7a"/>
<rect x="17" y="8" width="1.02" height="1.02" fill="#1bad76"/>
<rect x="18" y="8" width="1.02" height="1.02" fill="#1bad72"/>
<rect x="19" y="8" width="1.02" height="1.02" fill="#1bad6d"/>
<rect x="20" y="8" width="1.02" height="1.02" fill="#1bad69"/>
<rect x="21" y="8" width="1.02" height="1.02" fill="#1bad68"/>
<rect x="22" y="8" width="1.02" height="1.02" fill="#1bad67"/>
<rect x="23" y="8" width="1.02" height="1.02" fill="#1bad66"/>
<rect x="24" y="8" width="1.02" height="1.02" fill="#1bad65"/>
<rect x="25" y="8" width="1.02" height="1.02" fill="#1bad64"/>
<rect x="26" y="8" width="1.02" height="1.02" fill="#1bad6a"/>
<rect x="27" y="8" width="1.02" height="1.02" fill="#1bad70"/>
<rect x="28" y="8" width="1.02" height="1.02" fill="#1bad76"/>
<rect x="29" y="8" width="1.02" height="1.02" fill="#1bad7c"/>
<rect x="30" y="8" width="1.02" height="1.02" fill="#1bad81"/>
<rect x="31" y="8" width="1.02" height="1.02" fill="#1bad8b"/>
<rect x="32" y="8" width="1.02" height="1.02" fill="#1bad95"/>
<rect x="33" y="8" width="1.02" height="1.02" fill="#1bad9f"/>
<rect x="34" y="8" width="1.02" height="1.02" fill="#1bada9"/>
<rect x="35" y="8" width="1.02" height="1.02" fill="#1ba7ad"/>
<rect x="36" y="8" width="1.02" height="1.02" fill="#1b9bad"/>
<rect x="37" y="8" width="1.02" height="1.02" fill="#1b8fad"/>
<rect x="38" y="8" width="1.02" height="1.02" fill="#1b83ad"/>
<rect x="39" y="8" width="1.02" height="1.02" fill="#1b76ad"/>
<rect x="40" y="8" width="1.02" height="1.02" fill="#1b6aad"/>
<rect x="41" y="8" width="1.02" height="1.02" fill="#1b5ead"/>
<rect x="42" y="8" width="1.02" height="1.02" fill="#1b52ad"/>
<rect x="43" y="8" width="1.02" height="1.02" fill="#1b46ad"/>
<rect x="44" y="8" width="1.02" height="1.02" fill="#1b39ad"/>
<rect x="45" y="8" width="1.02" height="1.02" fill="#1b2dad"/>
<rect x="46" y="8" width="1.02" height="1.02" fill="#1b21ad"/>
<rect x="47" y="8" width="1.02" height="1.02" fill="#251bad"/>
<rect x="48" y="8" width="1.02" height="1.02" fill="#3a1bad"/>
<rect x="49" y="8" width="1.02" height="1.02" fill="#4e1bad"/>
<rect x="0" y="9" width="1.02" height="1.02" fill="#1b7dad"/>
<rect x="1" y="9" width="1.02" height="1.02" fill="#1b84ad"/>
<rect x="2" y="9" width="1.02" height="1.02" fill="#1b8bad"/>
<rect x="3" y="9" width="1.02" height="1.02" fill="#1b91ad"/>
<rect x="4" y="9" width="1.02" height="1.02" fill="#1b98ad"/>
<rect x="5" y="9" width="1.02" height="1.02" fill="#1b9fad"/>
<rect x="6" y="9" width="1.02" height="1.02" fill="#1ba6ad"/>
<rect x="7" y="9" width="1.02" height="1.02" fill="#1badad"/>
<rect x="8" y="9" width="1.02" height="1.02" fill="#1bada6"/>
<rect x="9" y="9" width="1.02" height="1.02" fill="#1bad9f"/>
<rect x="10" y="9" width="1.02" height="1.02" fill="#1bad97"/>
<rect x="11" y="9" width="1.02" height="1.02" fill="#1bad90"/>
<rect x="12" y="9" width="1.02" height="1.02" fill="#1bad89"/>
<rect x="13" y="9" width="1.02" height="1.02" fill="#1bad85"/>
<rect x="14" y="9" width="1.02" height="1.02" fill="#1bad81"/>
<rect x="15" y="9" width="1.02" height="1.02" fill="#1bad7d"/>
<rect x="16" y="9" width="1.02" height="1.02" fill="#1bad79"/>
<rect x="17" y="9" width="1.02" height="1.02" fill="#1bad75"/>
<rect x="18" y="9" width="1.02" height="1.02" fill="#1bad71"/>
<rect x="19" y="9" width="1.02" height="1.02" fill="#1bad6d"/>
<rect x="20" y="9" width="6.02" height="1.02" fill="#1bad69"/>
<rect x="26" y="9" width="1.02" height="1.02" fill="#1bad6f"/>
<rect x="27" y="9" width="1.02" height="1.02" fill="#1bad76"/>
<rect x="28" y="9" width="1.02" height="1.02" fill="#1bad7c"/>
<rect x="29" y="9" width="1.02" height="1.02" fill="#1bad82"/>
<rect x="30" y="9" width="1.02" height="1.02" fill="#1bad89"/>
<rect x="31" y="9" width="1.02" height="1.02" fill="#1bad93"/>
<rect x="32" y="9" width="1.02" height="1.02" fill="#1bad9e"/>
<rect x="33" y="9" width="1.02" height="1.02" fill="#1bada8"/>
<rect x="34" y="9" width="1.02" height="1.02" fill="#1ba7ad"/>
<rect x="35" y="9" width="1.02" height="1.02" fill="#1b9bad"/>
<rect x="36" y="9" width="1.02" height="1.02" fill="#1b8fad"/>
<rect x="37" y="9" width="1.02" height="1.02" fill="#1b83ad"/>
<rect x="38" y="9" width="1.02" height="1.02" fill="#1b76ad"/>
<rect x="39" y="9" width="1.02" height="1.02" fill="#1b6aad"/>
<rect x="40" y="9" width="1.02" height="1.02" fill="#1b5ead"/>
<rect x="41" y="9" width="1.02" height="1.02" fill="#1b52ad"/>
<rect x="42" y="9" width="1.02" height="1.02" fill="#1b46ad"/>
<rect x="43" y="9" width="1.02" height="1.02" fill="#1b39ad"/>
<rect x="44" y="9" width="1.02" height="1.02" fill="#1b2dad"/>
<rect x="45" y="9" width="1.02" height="1.02" fill="#1b21ad"/>
<rect x="46" y="9" width="1.02" height="1.02" fill="#231bad"/>
<rect x="47" y="9" width="1.02" height="1.02" fill="#341bad"/>
<rect x="48" y="9" width="1.02" height="1.02" fill="#451bad"/>
<rect x="49" y="9" width="1.02" height="1.02" fill="#551bad"/>
<rect x="0" y="10" width="1.02" height="1.02" fill="#1b89ad"/>
<rect x="1" y="10" width="1.02" height="1.02" fill="#1b8fad"/>
<rect x="2" y="10" width="1.02" height="1.02" fill="#1b95ad"/>
<rect x="3" y="10" width="1.02" height="1.02" fill="#1b9bad"/>
<rect x="4" y="10" width="1.02" height="1.02" fill="#1ba1ad"/>
<rect x="5" y="10" width="1.02" height="1.02" fill="#1ba7ad"/>
<rect x="6" y="10" width="1.02" height="1.02" fill="#1badad"/>
<rect x="7" y="10" width="1.02" height="1.02" fill="#1bada6"/>
<rect x="8" y="10" width="1.02" height="1.02" fill="#1bada0"/>
<rect x="9" y="10" width="1.02" height="1.02" fill="#1bad99"/>
<rect x="10" y="10" width="1.02" height="1.02" fill="#1bad92"/>
<rect x="11" y="10" width="1.02" height="1.02" fill="#1bad8b"/>
<rect x="12" y="10" width="1.02" height="1.02" fill="#1bad84"/>
<rect x="13" y="10" width="1.02" height="1.02" fill="#1bad81"/>
<rect x="14" y="10" width="1.02" height="1.02" fill="#1bad7d"/>
<rect x="15" y="10" width="1.02" height="1.02" fill="#1bad7a"/>
<rect x="16" y="10" width="1.02" height="1.02" fill="#1bad76"/>
<rect x="17" y="10" width="1.02" height="1.02" fill="#1bad73"/>
<rect x="18" y="10" width="1.02" height="1.02" fill="#1bad70"/>
<rect x="19" y="10" width="1.02" height="1.02" fill="#1bad6c"/>
<rect x="20" y="10" width="1.02" height="1.02" fill="#1bad69"/>
<rect x="21" y="10" width="3.02" height="1.02" fill="#1bad6a"/>
<rect x="24" y="10" width="2.02" height="1.02" fill="#1bad6b"/>
<rect x="26" y="10" width="1.02" height="1.02" fill="#1bad73"/>
<rect x="27" y="10" width="1.02" height="1.02" fill="#1bad7a"/>
<rect x="28" y="10" width="1.02" height="1.02" fill="#1bad81"/>
<rect x="29" y="10" width="1.02" height="1.02" fill="#1bad89"/>
<rect x="30" y="10" width="1.02" height="1.02" fill="#1bad90"/>
<rect x="31" y="10" width="1.02" height="1.02" fill="#1bad9a"/>
<rect x="32" y="10" width="1.02" height="1.02" fill="#1bada4"/>
<rect x="33" y="10" width="1.02" height="1.02" fill="#1badad"/>
<rect x="34" y="10" width="1.02" height="1.02" fill="#1ba1ad"/>
<rect x="35" y="10" width="1.02" height="1.02" fill="#1b95ad"/>
<rect x="36" y="10" width="1.02" height="1.02" fill="#1b89ad"/>
<rect x="37" y="10" width="1.02" height="1.02" fill="#1b7dad"/>
<rect x="38" y="10" width="1.02" height="1.02" fill="#1b70ad"/>
<rect x="39" y="10" width="1.02" height="1.02" fill="#1b64ad"/>
<rect x="40" y="10" width="1.02" height="1.02" fill="#1b58ad"/>
<rect x="41" y="10" width="1.02" height="1.02" fill="#1b4cad"/>
<rect x="42" y="10" width="1.02" height="1.02" fill="#1b40ad"/>
<rect x="43" y="10" width="1.02" height="1.02" fill="#1b33ad"/>
<rect x="44" y="10" width="1.02" height="1.02" fill="#1b27ad"/>
<rect x="45" y="10" width="1.02" height="1.02" fill="#1b1bad"/>
<rect x="46" y="10" width="1.02" height="1.02" fill="#2b1bad"/>
<rect x="47" y="10" width="1.02" height="1.02" fill="#3c1bad"/>
<rect x="48" y="10" width="1.02" height="1.02" fill="#4c1bad"/>
<rect x="49" y="10" width="1.02" height="1.02" fill="#5d1bad"/>
<rect x="0" y="11" width="1.02" height="1.02" fill="#1b95ad"/>
<rect x="1" y="11" width="1.02" height="1.02" fill="#1b9aad"/>
<rect x="2" y="11" width="1.02" height="1.02" fill="#1ba0ad"/>
<rect x="3" y="11" width="1.02" height="1.02" fill="#1ba5ad"/>
<rect x="4" y="11" width="1.02" height="1.02" fill="#1babad"/>
<rect x="5" y="11" width="1.02" height="1.02" fill="#1badaa"/>
<rect x="6" y="11" width="1.02" height="1.02" fill="#1bada4"/>
<rect x="7" y="11" width="1.02" height="1.02" fill="#1bad9d"/>
<rect x="8" y="11" width="1.02" height="1.02" fill="#1bad97"/>
<rect x="9" y="11" width="1.02" height="1.02" fill="#1bad90"/>
<rect x="10" y="11" width="1.02" height="1.02" fill="#1bad8a"/>
<rect x="11" y="11" width="1.02" height="1.02" fill="#1bad83"/>
<rect x="12" y="11" width="1.02" height="1.02" fill="#1bad7d"/>
<rect x="13" y="11" width="1.02" height="1.02" fill="#1bad7a"/>
<rect x="14" y="11" width="1.02" height="1.02" fill="#1bad76"/>
<rect x="15" y="11" width="1.02" height="1.02" fill="#1bad73"/>
<rect x="16" y="11" width="1.02" height="1.02" fill="#1bad70"/>
<rect x="17" y="11" width="1.02" height="1.02" fill="#1bad6d"/>
<rect x="18" y="11" width="1.02" height="1.02" fill="#1bad6a"/>
<rect x="19" y="11" width="1.02" height="1.02" fill="#1bad67"/>
<rect x="20" y="11" width="1.02" height="1.02" fill="#1bad64"/>
<rect x="21" y="11" width="1.02" height="1.02" fill="#1bad65"/>
<rect x="22" y="11" width="1.02" height="1.02" fill="#1bad66"/>
<rect x="23" y="11" width="1.02" height="1.02" fill="#1bad67"/>
<rect x="24" y="11" width="1.02" height="1.02" fill="#1bad68"/>
<rect x="25" y="11" width="1.02" height="1.02" fill="#1bad69"/>
<rect x="26" y="11" width="1.02" height="1.02" fill="#1bad71"/>
<rect x="27" y="11" width="1.02" height="1.02" fill="#1bad79"/>
<rect x="28" y="11" width="1.02" height="1.02" fill="#1bad80"/>
<rect x="29" y="11" width="1.02" height="1.02" fill="#1bad88"/>
<rect x="30" y="11" width="1.02" height="1.02" fill="#1bad90"/>
<rect x="31" y="11" width="1.02" height="1.02" fill="#1bad9a"/>
<rect x="32" y="11" width="1.02" height="1.02" fill="#1bada4"/>
<rect x="33" y="11" width="1.02" height="1.02" fill="#1badad"/>
<rect x="34" y="11" width="1.02" height="1.02" fill="#1ba1ad"/>
<rect x="35" y="11" width="1.02" height="1.02" fill="#1b94ad"/>
<rect x="36" y="11" width="1.02" height="1.02" fill="#1b87ad"/>
<rect x="37" y="11" width="1.02" height="1.02" fill="#1b7aad"/>
<rect x="38" y="11" width="1.02" height="1.02" fill="#1b6ead"/>
<rect x="39" y="11" width="1.02" height="1.02" fill="#1b61ad"/>
<rect x="40" y="11" width="1.02" height="1.02" fill="#1b54ad"/>
<rect x="41" y="11" width="1.02" height="1.02" fill="#1b47ad"/>
<rect x="42" y="11" width="1.02" height="1.02" fill="#1b3bad"/>
<rect x="43" y="11" width="1.02" height="1.02" fill="#1b2ead"/>
<rect x="44" y="11" width="1.02" height="1.02" fill="#1b21ad"/>
<rect x="45" y="11" width="1.02" height="1.02" fill="#221bad"/>
<rect x="46" y="11" width="1.02" height="1.02" fill="#321bad"/>
<rect x="47" y="11" width="1.02" height="1.02" fill="#411bad"/>
<rect x="48" y="11" width="1.02" height="1.02" fill="#501bad"/>
<rect x="49" y="11" width="1.02" height="1.02" fill="#5f1bad"/>
<rect x="0" y="12" width="1.02" height="1.02" fill="#1ba9ad"/>
<rect x="1" y="12" width="1.02" height="1.02" fill="#1baaad"/>
<rect x="2" y="12" width="1.02" height="1.02" fill="#1bacad"/>
<rect x="3" y="12" width="1.02" height="1.02" fill="#1badaa"/>
<rect x="4" y="12" width="1.02" height="1.02" fill="#1bada4"/>
<rect x="5" y="12" width="1.02" height="1.02" fill="#1bad9e"/>
<rect x="6" y="12" width="1.02" height="1.02" fill="#1bad98"/>
<rect x="7" y="12" width="1.02" height="1.02" fill="#1bad92"/>
<rect x="8" y="12" width="1.02" height="1.02" fill="#1bad8b"/>
<rect x="9" y="12" width="1.02" height="1.02" fill="#1bad85"/>
<rect x="10" y="12" width="1.02" height="1.02" fill="#1bad7f"/>
<rect x="11" y="12" width="1.02" height="1.02" fill="#1bad79"/>
<rect x="12" y="12" width="1.02" height="1.02" fill="#1bad73"/>
<rect x="13" y="12" width="1.02" height="1.02" fill="#1bad70"/>
<rect x="14" y="12" width="1.02" height="1.02" fill="#1bad6e"/>
<rect x="15" y="12" width="1.02" height="1.02" fill="#1bad6b"/>
<rect x="16" y="12" width="1.02" height="1.02" fill="#1bad69"/>
<rect x="17" y="12" width="1.02" height="1.02" fill="#1bad67"/>
<rect x="18" y="12" width="1.02" height="1.02" fill="#1bad64"/>
<rect x="19" y="12" width="1.02" height="1.02" fill="#1bad62"/>
<rect x="20" y="12" width="1.02" height="1.02" fill="#1bad5f"/>
<rect x="21" y="12" width="1.02" height="1.02" fill="#1bad61"/>
<rect x="22" y="12" width="1.02" height="1.02" fill="#1bad62"/>
<rect x="23" y="12" width="1.02" height="1.02" fill="#1bad64"/>
<rect x="24" y="12" width="1.02" height="1.02" fill="#1bad65"/>
<rect x="25" y="12" width="1.02" height="1.02" fill="#1bad67"/>
<rect x="26" y="12" width="1.02" height="1.02" fill="#1bad6e"/>
<rect x="27" y="12" width="1.02" height="1.02" fill="#1bad76"/>
<rect x="28" y="12" width="1.02" height="1.02" fill="#1bad7e"/>
<rect x="29" y="12" width="1.02" height="1.02" fill="#1bad86"/>
<rect x="30" y="12" width="1.02" height="1.02" fill="#1bad8e"/>
<rect x="31" y="12" width="1.02" height="1.02" fill="#1bad98"/>
<rect x="32" y="12" width="1.02" height="1.02" fill="#1bada3"/>
<rect x="33" y="12" width="1.02" height="1.02" fill="#1badad"/>
<rect x="34" y="12" width="1.02" height="1.02" fill="#1ba1ad"/>
<rect x="35" y="12" width="1.02" height="1.02" fill="#1b94ad"/>
<rect x="36" y="12" width="1.02" height="1.02" fill="#1b87ad"/>
<rect x="37" y="12" width="1.02" height="1.02" fill="#1b7aad"/>
<rect x="38" y="12" width="1.02" height="1.02" fill="#1b6ead"/>
<rect x="39" y="12" width="1.02" height="1.02" fill="#1b61ad"/>
<rect x="40" y="12" width="1.02" height="1.02" fill="#1b54ad"/>
<rect x="41" y="12" width="1.02" height="1.02" fill="#1b47ad"/>
<rect x="42" y="12" width="1.02" height="1.02" fill="#1b3bad"/>
<rect x="43" y="12" width="1.02" height="1.02" fill="#1b2ead"/>
<rect x="44" y="12" width="1.02" height="1.02" fill="#1b21ad"/>
<rect x="45" y="12" width="1.02" height="1.02" fill="#221bad"/>
<rect x="46" y="12" width="1.02" height="1.02" fill="#321bad"/>
<rect x="47" y="12" width="1.02" height="1.02" fill="#411bad"/>
<rect x="48" y="12" width="1.02" height="1.02" fill="#501bad"/>
<rect x="49" y="12" width="1.02" height="1.02" fill="#5f1bad"/>
<rect x="0" y="13" width="1.02" height="1.02" fill="#1bad9a"/>
<rect x="1" y="13" width="1.02" height="1.02" fill="#1badaa"/>
<rect x="2" y="13" width="1.02" height="1.02" fill="#1bada4"/>
<rect x="3" y="13" width="1.02" height="1.02" fill="#1bad9f"/>
<rect x="4" y="13" width="1.02" height="1.02" fill="#1bad99"/>
<rect x="5" y="13" width="1.02" height="1.02" fill="#1bad93"/>
<rect x="6" y="13" width="1.02" height="1.02" fill="#1bad8d"/>
<rect x="7" y="13" width="1.02" height="1.02" fill="#1bad87"/>
<rect x="8" y="13" width="1.02" height="1.02" fill="#1bad81"/>
<rect x="9" y="13" width="1.02" height="1.02" fill="#1bad7b"/>
<rect x="10" y="13" width="1.02" height="1.02" fill="#1bad75"/>
<rect x="11" y="13" width="1.02" height="1.02" fill="#1bad6f"/>
<rect x="12" y="13" width="1.02" height="1.02" fill="#1bad69"/>
<rect x="13" y="13" width="1.02" height="1.02" fill="#1bad67"/>
<rect x="14" y="13" width="1.02" height="1.02" fill="#1bad65"/>
<rect x="15" y="13" width="1.02" height="1.02" fill="#1bad63"/>
<rect x="16" y="13" width="1.02" height="1.02" fill="#1bad60"/>
<rect x="17" y="13" width="1.02" height="1.02" fill="#1bad5e"/>
<rect x="18" y="13" width="1.02" height="1.02" fill="#1bad5c"/>
<rect x="19" y="13" width="1.02" height="1.02" fill="#1bad5a"/>
<rect x="20" y="13" width="1.02" height="1.02" fill="#1bad58"/>
<rect x="21" y="13" width="1.02" height="1.02" fill="#1bad5a"/>
<rect x="22" y="13" width="1.02" height="1.02" fill="#1bad5c"/>
<rect x="23" y="13" width="1.02" height="1.02" fill="#1bad5e"/>
<rect x="24" y="13" width="1.02" height="1.02" fill="#1bad60"/>
<rect x="25" y="13" width="1.02" height="1.02" fill="#1bad62"/>
<rect x="26" y="13" width="1.02" height="1.02" fill="#1bad6a"/>
<rect x="27" y="13" width="1.02" height="1.02" fill="#1bad71"/>
<rect x="28" y="13" width="1.02" height="1.02" fill="#1bad79"/>
<rect x="29" y="13" width="1.02" height="1.02" fill="#1bad81"/>
<rect x="30" y="13" width="1.02" height="1.02" fill="#1bad89"/>
<rect x="31" y="13" width="1.02" height="1.02" fill="#1bad93"/>
<rect x="32" y="13" width="1.02" height="1.02" fill="#1bad9e"/>
<rect x="33" y="13" width="1.02" height="1.02" fill="#1bada8"/>
<rect x="34" y="13" width="1.02" height="1.02" fill="#1ba7ad"/>
<rect x="35" y="13" width="1.02" height="1.02" fill="#1b99ad"/>
<rect x="36" y="13" width="1.02" height="1.02" fill="#1b8cad"/>
<rect x="37" y="13" width="1.02" height="1.02" fill="#1b7fad"/>
<rect x="38" y="13" width="1.02" height="1.02" fill="#1b71ad"/>
<rect x="39" y="13" width="1.02" height="1.02" fill="#1b64ad"/>
<rect x="40" y="13" width="1.02" height="1.02" fill="#1b57ad"/>
<rect x="41" y="13" width="1.02" height="1.02" fill="#1b49ad"/>
<rect x="42" y="13" width="1.02" height="1.02" fill="#1b3cad"/>
<rect x="43" y="13" width="1.02" height="1.02" fill="#1b2fad"/>
<rect x="44" y="13" width="1.02" height="1.02" fill="#1b22ad"/>
<rect x="45" y="13" width="1.02" height="1.02" fill="#221bad"/>
<rect x="46" y="13" width="1.02" height="1.02" fill="#321bad"/>
<rect x="47" y="13" width="1.02" height="1.02" fill="#411bad"/>
<rect x="48" y="13" width="1.02" height="1.02" fill="#501bad"/>
<rect x="49" y="13" width="1.02" height="1.02" fill="#5f1bad"/>
<rect x="0" y="14" width="1.02" height="1.02" fill="#1bad7d"/>
<rect x="1" y="14" width="1.02" height="1.02" fill="#1bad7f"/>
<rect x="2" y="14" width="1.02" height="1.02" fill="#1bad81"/>
<rect x="3" y="14" width="1.02" height="1.02" fill="#1bad84"/>
<rect x="4" y="14" width="1.02" height="1.02" fill="#1bad86"/>
<rect x="5" y="14" width="1.02" height="1.02" fill="#1bad89"/>
<rect x="6" y="14" width="1.02" height="1.02" fill="#1bad82"/>
<rect x="7" y="14" width="1.02" height="1.02" fill="#1bad7c"/>
<rect x="8" y="14" width="1.02" height="1.02" fill="#1bad76"/>
<rect x="9" y="14" width="1.02" height="1.02" fill="#1bad70"/>
<rect x="10" y="14" width="1.02" height="1.02" fill="#1bad69"/>
<rect x="11" y="14" width="1.02" height="1.02" fill="#1bad63"/>
<rect x="12" y="14" width="1.02" height="1.02" fill="#1bad5d"/>
<rect x="13" y="14" width="1.02" height="1.02" fill="#1bad5b"/>
<rect x="14" y="14" width="1.02" height="1.02" fill="#1bad59"/>
<rect x="15" y="14" width="1.02" height="1.02" fill="#1bad57"/>
<rect x="16" y="14" width="1.02" height="1.02" fill="#1bad55"/>
<rect x="17" y="14" width="1.02" height="1.02" fill="#1bad54"/>
<rect x="18" y="14" width="1.02" height="1.02" fill="#1bad52"/>
<rect x="19" y="14" width="1.02" height="1.02" fill="#1bad50"/>
<rect x="20" y="14" width="1.02" height="1.02" fill="#1bad4e"/>
<rect x="21" y="14" width="1.02" height="1.02" fill="#1bad51"/>
<rect x="22" y="14" width="1.02" height="1.02" fill="#1bad53"/>
<rect x="23" y="14" width="1.02" height="1.02" fill="#1bad55"/>
<rect x="24" y="14" width="1.02" height="1.02" fill="#1bad58"/>
<rect x="25" y="14" width="1.02" height="1.02" fill="#1bad5a"/>
<rect x="26" y="14" width="1.02" height="1.02" fill="#1bad62"/>
<rect x="27" y="14" width="1.02" height="1.02" fill="#1bad6a"/>
<rect x="28" y="14" width="1.02" height="1.02" fill="#1bad72"/>
<rect x="29" y="14" width="1.02" height="1.02" fill="#1bad7a"/>
<rect x="30" y="14" width="1.02" height="1.02" fill="#1bad81"/>
<rect x="31" y="14" width="1.02" height="1.02" fill="#1bad8c"/>
<rect x="32" y="14" width="1.02" height="1.02" fill="#1bad97"/>
<rect x="33" y="14" width="1.02" height="1.02" fill="#1bada2"/>
<rect x="34" y="14" width="1.02" height="1.02" fill="#1badad"/>
<rect x="35" y="14" width="1.02" height="1.02" fill="#1ba0ad"/>
<rect x="36" y="14" width="1.02" height="1.02" fill="#1b93ad"/>
<rect x="37" y="14" width="1.02" height="1.02" fill="#1b85ad"/>
<rect x="38" y="14" width="1.02" height="1.02" fill="#1b78ad"/>
<rect x="39" y="14" width="1.02" height="1.02" fill="#1b6bad"/>
<rect x="40" y="14" width="1.02" height="1.02" fill="#1b5dad"/>
<rect x="41" y="14" width="1.02" height="1.02" fill="#1b50ad"/>
<rect x="42" y="14" width="1.02" height="1.02" fill="#1b43ad"/>
<rect x="43" y="14" width="1.02" height="1.02" fill="#1b36ad"/>
<rect x="44" y="14" width="1.02" height="1.02" fill="#1b28ad"/>
<rect x="45" y="14" width="1.02" height="1.02" fill="#1b1bad"/>
<rect x="46" y="14" width="1.02" height="1.02" fill="#2b1bad"/>
<rect x="47" y="14" width="1.02" height="1.02" fill="#3c1bad"/>
<rect x="48" y="14" width="1.02" height="1.02" fill="#4c1bad"/>
<rect x="49" y="14" width="1.02" height="1.02" fill="#5d1bad"/>
<rect x="0" y="15" width="1.02" height="1.02" fill="#1bad64"/>
<rect x="1" y="15" width="1.02" height="1.02" fill="#1bad67"/>
<rect x="2" y="15" width="1.02" height="1.02" fill="#1bad69"/>
<rect x="3" y="15" width="1.02" height="1.02" fill="#1bad6b"/>
<rect x="4" y="15" width="1.02" height="1.02" fill="#1bad6e"/>
<rect x="5" y="15" width="1.02" height="1.02" fill="#1bad70"/>
<rect x="6" y="15" width="1.02" height="1.02" fill="#1bad6b"/>
<rect x="7" y="15" width="1.02" height="1.02" fill="#1bad67"/>
<rect x="8" y="15" width="1.02" height="1.02" fill="#1bad62"/>
<rect x="9" y="15" width="1.02" height="1.02" fill="#1bad5d"/>
<rect x="10" y="15" width="1.02" height="1.02" fill="#1bad58"/>
<rect x="11" y="15" width="1.02" height="1.02" fill="#1bad53"/>
<rect x="12" y="15" width="1.02" height="1.02" fill="#1bad4e"/>
<rect x="13" y="15" width="1.02" height="1.02" fill="#1bad4d"/>
<rect x="14" y="15" width="1.02" height="1.02" fill="#1bad4c"/>
<rect x="15" y="15" width="1.02" height="1.02" fill="#1bad4a"/>
<rect x="16" y="15" width="1.02" height="1.02" fill="#1bad49"/>
<rect x="17" y="15" width="1.02" height="1.02" fill="#1bad48"/>
<rect x="18" y="15" width="1.02" height="1.02" fill="#1bad47"/>
<rect x="19" y="15" width="1.02" height="1.02" fill="#1bad46"/>
<rect x="20" y="15" width="1.02" height="1.02" fill="#1bad44"/>
<rect x="21" y="15" width="1.02" height="1.02" fill="#1bad47"/>
<rect x="22" y="15" width="1.02" height="1.02" fill="#1bad4a"/>
<rect x="23" y="15" width="1.02" height="1.02" fill="#1bad4d"/>
<rect x="24" y="15" width="1.02" height="1.02" fill="#1bad50"/>
<rect x="25" y="15" width="1.02" height="1.02" fill="#1bad53"/>
<rect x="26" y="15" width="1.02" height="1.02" fill="#1bad5b"/>
<rect x="27" y="15" width="1.02" height="1.02" fill="#1bad64"/>
<rect x="28" y="15" width="1.02" height="1.02" fill="#1bad6c"/>
<rect x="29" y="15" width="1.02" height="1.02" fill="#1bad74"/>
<rect x="30" y="15" width="1.02" height="1.02" fill="#1bad7d"/>
<rect x="31" y="15" width="1.02" height="1.02" fill="#1bad87"/>
<rect x="32" y="15" width="1.02" height="1.02" fill="#1bad92"/>
<rect x="33" y="15" width="1.02" height="1.02" fill="#1bad9d"/>
<rect x="34" y="15" width="1.02" height="1.02" fill="#1bada8"/>
<rect x="35" y="15" width="1.02" height="1.02" fill="#1ba6ad"/>
<rect x="36" y="15" width="1.02" height="1.02" fill="#1b98ad"/>
<rect x="37" y="15" width="1.02" height="1.02" fill="#1b8bad"/>
<rect x="38" y="15" width="1.02" height="1.02" fill="#1b7dad"/>
<rect x="39" y="15" width="1.02" height="1.02" fill="#1b6fad"/>
<rect x="40" y="15" width="1.02" height="1.02" fill="#1b61ad"/>
<rect x="41" y="15" width="1.02" height="1.02" fill="#1b53ad"/>
<rect x="42" y="15" width="1.02" height="1.02" fill="#1b45ad"/>
<rect x="43" y="15" width="1.02" height="1.02" fill="#1b37ad"/>
<rect x="44" y="15" width="1.02" height="1.02" fill="#1b29ad"/>
<rect x="45" y="15" width="1.02" height="1.02" fill="#1b1bad"/>
<rect x="46" y="15" width="1.02" height="1.02" fill="#2a1bad"/>
<rect x="47" y="15" width="1.02" height="1.02" fill="#391bad"/>
<rect x="48" y="15" width="1.02" height="1.02" fill="#491bad"/>
<rect x="49" y="15" width="1.02" height="1.02" fill="#581bad"/>
<rect x="0" y="16" width="1.02" height="1.02" fill="#1bad4c"/>
<rect x="1" y="16" width="1.02" height="1.02" fill="#1bad4e"/>
<rect x="2" y="16" width="1.02" height="1.02" fill="#1bad51"/>
<rect x="3" y="16" width="1.02" height="1.02" fill="#1bad53"/>
<rect x="4" y="16" width="1.02" height="1.02" fill="#1bad55"/>
<rect x="5" y="16" width="1.02" height="1.02" fill="#1bad58"/>
<rect x="6" y="16" width="1.02" height="1.02" fill="#1bad54"/>
<rect x="7" y="16" width="1.02" height="1.02" fill="#1bad50"/>
<rect x="8" y="16" width="1.02" height="1.02" fill="#1bad4c"/>
<rect x="9" y="16" width="1.02" height="1.02" fill="#1bad49"/>
<rect x="10" y="16" width="1.02" height="1.02" fill="#1bad45"/>
<rect x="11" y="16" width="1.02" height="1.02" fill="#1bad41"/>
<rect x="12" y="16" width="1.02" height="1.02" fill="#1bad3d"/>
<rect x="13" y="16" width="2.02" height="1.02" fill="#1bad3c"/>
<rect x="15" y="16" width="2.02" height="1.02" fill="#1bad3b"/>
<rect x="17" y="16" width="1.02" height="1.02" fill="#1bad3a"/>
<rect x="18" y="16" width="2.02" height="1.02" fill="#1bad39"/>
<rect x="20" y="16" width="1.02" height="1.02" fill="#1bad38"/>
<rect x="21" y="16" width="1.02" height="1.02" fill="#1bad3c"/>
<rect x="22" y="16" width="1.02" height="1.02" fill="#1bad40"/>
<rect x="23" y="16" width="1.02" height="1.02" fill="#1bad44"/>
<rect x="24" y="16" width="1.02" height="1.02" fill="#1bad48"/>
<rect x="25" y="16" width="1.02" height="1.02" fill="#1bad4c"/>
<rect x="26" y="16" width="1.02" height="1.02" fill="#1bad54"/>
<rect x="27" y="16" width="1.02" height="1.02" fill="#1bad5c"/>
<rect x="28" y="16" width="1.02" height="1.02" fill="#1bad65"/>
<rect x="29" y="16" width="1.02" height="1.02" fill="#1bad6d"/>
<rect x="30" y="16" width="1.02" height="1.02" fill="#1bad75"/>
<rect x="31" y="16" width="1.02" height="1.02" fill="#1bad80"/>
<rect x="32" y="16" width="1.02" height="1.02" fill="#1bad8c"/>
<rect x="33" y="16" width="1.02" height="1.02" fill="#1bad97"/>
<rect x="34" y="16" width="1.02" height="1.02" fill="#1bada2"/>
<rect x="35" y="16" width="1.02" height="1.02" fill="#1badad"/>
<rect x="36" y="16" width="1.02" height="1.02" fill="#1b9fad"/>
<rect x="37" y="16" width="1.02" height="1.02" fill="#1b91ad"/>
<rect x="38" y="16" width="1.02" height="1.02" fill="#1b84ad"/>
<rect x="39" y="16" width="1.02" height="1.02" fill="#1b76ad"/>
<rect x="40" y="16" width="1.02" height="1.02" fill="#1b68ad"/>
<rect x="41" y="16" width="1.02" height="1.02" fill="#1b5aad"/>
<rect x="42" y="16" width="1.02" height="1.02" fill="#1b4cad"/>
<rect x="43" y="16" width="1.02" height="1.02" fill="#1b3ead"/>
<rect x="44" y="16" width="1.02" height="1.02" fill="#1b30ad"/>
<rect x="45" y="16" width="1.02" height="1.02" fill="#1b22ad"/>
<rect x="46" y="16" width="1.02" height="1.02" fill="#231bad"/>
<rect x="47" y="16" width="1.02" height="1.02" fill="#321bad"/>
<rect x="48" y="16" width="1.02" height="1.02" fill="#411bad"/>
<rect x="49" y="16" width="1.02" height="1.02" fill="#511bad"/>
<rect x="0" y="17" width="1.02" height="1.02" fill="#1bad36"/>
<rect x="1" y="17" width="1.02" height="1.02" fill="#1bad38"/>
<rect x="2" y="17" width="1.02" height="1.02" fill="#1bad3a"/>
<rect x="3" y="17" width="1.02" height="1.02" fill="#1bad3c"/>
<rect x="4" y="17" width="1.02" height="1.02" fill="#1bad3e"/>
<rect x="5" y="17" width="1.02" height="1.02" fill="#1bad40"/>
<rect x="6" y="17" width="1.02" height="1.02" fill="#1bad3d"/>
<rect x="7" y="17" width="1.02" height="1.02" fill="#1bad3a"/>
<rect x="8" y="17" width="1.02" height="1.02" fill="#1bad37"/>
<rect x="9" y="17" width="1.02" height="1.02" fill="#1bad34"/>
<rect x="10" y="17" width="1.02" height="1.02" fill="#1bad32"/>
<rect x="11" y="17" width="1.02" height="1.02" fill="#1bad2f"/>
<rect x="12" y="17" width="9.02" height="1.02" fill="#1bad2c"/>
<rect x="21" y="17" width="1.02" height="1.02" fill="#1bad30"/>
<rect x="22" y="17" width="1.02" height="1.02" fill="#1bad35"/>
<rect x="23" y="17" width="1.02" height="1.02" fill="#1bad39"/>
<rect x="24" y="17" width="1.02" height="1.02" fill="#1bad3e"/>
<rect x="25" y="17" width="1.02" height="1.02" fill="#1bad42"/>
<rect x="26" y="17" width="1.02" height="1.02" fill="#1bad4b"/>
<rect x="27" y="17" width="1.02" height="1.02" fill="#1bad54"/>
<rect x="28" y="17" width="1.02" height="1.02" fill="#1bad5c"/>
<rect x="29" y="17" width="1.02" height="1.02" fill="#1bad65"/>
<rect x="30" y="17" width="1.02" height="1.02" fill="#1bad6e"/>
<rect x="31" y="17" width="1.02" height="1.02" fill="#1bad79"/>
<rect x="32" y="17" width="1.02" height="1.02" fill="#1bad85"/>
<rect x="33" y="17" width="1.02" height="1.02" fill="#1bad91"/>
<rect x="34" y="17" width="1.02" height="1.02" fill="#1bad9c"/>
<rect x="35" y="17" width="1.02" height="1.02" fill="#1bada8"/>
<rect x="36" y="17" width="1.02" height="1.02" fill="#1ba6ad"/>
<rect x="37" y="17" width="1.02" height="1.02" fill="#1b98ad"/>
<rect x="38" y="17" width="1.02" height="1.02" fill="#1b8bad"/>
<rect x="39" y="17" width="1.02" height="1.02" fill="#1b7dad"/>
<rect x="40" y="17" width="1.02" height="1.02" fill="#1b6fad"/>
<rect x="41" y="17" width="1.02" height="1.02" fill="#1b61ad"/>
<rect x="42" y="17" width="1.02" height="1.02" fill="#1b53ad"/>
<rect x="43" y="17" width="1.02" height="1.02" fill="#1b45ad"/>
<rect x="44" y="17" width="1.02" height="1.02" fill="#1b37ad"/>
<rect x="45" y="17" width="1.02" height="1.02" fill="#1b29ad"/>
<rect x="46" y="17" width="1.02" height="1.02" fill="#1b1bad"/>
<rect x="47" y="17" width="1.02" height="1.02" fill="#2a1bad"/>
<rect x="48" y="17" width="1.02" height="1.02" fill="#3a1bad"/>
<rect x="49" y="17" width="1.02" height="1.02" fill="#491bad"/>
<rect x="0" y="18" width="1.02" height="1.02" fill="#1bad2a"/>
<rect x="1" y="18" width="2.02" height="1.02" fill="#1bad2b"/>
<rect x="3" y="18" width="1.02" height="1.02" fill="#1bad2c"/>
<rect x="4" y="18" width="1.02" height="1.02" fill="#1bad2d"/>
<rect x="5" y="18" width="1.02" height="1.02" fill="#1bad2e"/>
<rect x="6" y="18" width="1.02" height="1.02" fill="#1bad2c"/>
<rect x="7" y="18" width="1.02" height="1.02" fill="#1bad2a"/>
<rect x="8" y="18" width="1.02" height="1.02" fill="#1bad28"/>
<rect x="9" y="18" width="1.02" height="1.02" fill="#1bad26"/>
<rect x="10" y="18" width="1.02" height="1.02" fill="#1bad24"/>
<rect x="11" y="18" width="1.02" height="1.02" fill="#1bad22"/>
<rect x="12" y="18" width="3.02" height="1.02" fill="#1bad20"/>
<rect x="15" y="18" width="3.02" height="1.02" fill="#1bad21"/>
<rect x="18" y="18" width="3.02" height="1.02" fill="#1bad22"/>
<rect x="21" y="18" width="1.02" height="1.02" fill="#1bad27"/>
<rect x="22" y="18" width="1.02" height="1.02" fill="#1bad2b"/>
<rect x="23" y="18" width="1.02" height="1.02" fill="#1bad2f"/>
<rect x="24" y="18" width="1.02" height="1.02" fill="#1bad34"/>
<rect x="25" y="18" width="1.02" height="1.02" fill="#1bad38"/>
<rect x="26" y="18" width="1.02" height="1.02" fill="#1bad41"/>
<rect x="27" y="18" width="1.02" height="1.02" fill="#1bad4a"/>
<rect x="28" y="18" width="1.02" height="1.02" fill="#1bad53"/>
<rect x="29" y="18" width="1.02" height="1.02" fill="#1bad5b"/>
<rect x="30" y="18" width="1.02" height="1.02" fill="#1bad64"/>
<rect x="31" y="18" width="1.02" height="1.02" fill="#1bad6f"/>
<rect x="32" y="18" width="1.02" height="1.02" fill="#1bad7b"/>
<rect x="33" y="18" width="1.02" height="1.02" fill="#1bad86"/>
<rect x="34" y="18" width="1.02" height="1.02" fill="#1bad91"/>
<rect x="35" y="18" width="1.02" height="1.02" fill="#1bad9c"/>
<rect x="36" y="18" width="1.02" height="1.02" fill="#1bada8"/>
<rect x="37" y="18" width="1.02" height="1.02" fill="#1ba6ad"/>
<rect x="38" y="18" width="1.02" height="1.02" fill="#1b97ad"/>
<rect x="39" y="18" width="1.02" height="1.02" fill="#1b89ad"/>
<rect x="40" y="18" width="1.02" height="1.02" fill="#1b7aad"/>
<rect x="41" y="18" width="1.02" height="1.02" fill="#1b6bad"/>
<rect x="42" y="18" width="1.02" height="1.02" fill="#1b5dad"/>
<rect x="43" y="18" width="1.02" height="1.02" fill="#1b4ead"/>
<rect x="44" y="18" width="1.02" height="1.02" fill="#1b40ad"/>
<rect x="45" y="18" width="1.02" height="1.02" fill="#1b31ad"/>
<rect x="46" y="18" width="1.02" height="1.02" fill="#1b22ad"/>
<rect x="47" y="18" width="1.02" height="1.02" fill="#231bad"/>
<rect x="48" y="18" width="1.02" height="1.02" fill="#321bad"/>
<rect x="49" y="18" width="1.02" height="1.02" fill="#421bad"/>
<rect x="0" y="19" width="6.02" height="1.02" fill="#1bad20"/>
<rect x="6" y="19" width="1.02" height="1.02" fill="#1bad1e"/>
<rect x="7" y="19" width="1.02" height="1.02" fill="#1bad1c"/>
<rect x="8" y="19" width="1.02" height="1.02" fill="#1bad1b"/>
<rect x="9" y="19" width="1.02" height="1.02" fill="#1dad1b"/>
<rect x="10" y="19" width="1.02" height="1.02" fill="#1fad1b"/>
<rect x="11" y="19" width="1.02" height="1.02" fill="#20ad1b"/>
<rect x="12" y="19" width="1.02" height="1.02" fill="#22ad1b"/>
<rect x="13" y="19" width="1.02" height="1.02" fill="#21ad1b"/>
<rect x="14" y="19" width="1.02" height="1.02" fill="#20ad1b"/>
<rect x="15" y="19" width="2.02" height="1.02" fill="#1fad1b"/>
<rect x="17" y="19" width="1.02" height="1.02" fill="#1ead1b"/>
<rect x="18" y="19" width="1.02" height="1.02" fill="#1dad1b"/>
<rect x="19" y="19" width="1.02" height="1.02" fill="#1cad1b"/>
<rect x="20" y="19" width="1.02" height="1.02" fill="#1bad1b"/>
<rect x="21" y="19" width="1.02" height="1.02" fill="#1bad1f"/>
<rect x="22" y="19" width="1.02" height="1.02" fill="#1bad24"/>
<rect x="23" y="19" width="1.02" height="1.02" fill="#1bad28"/>
<rect x="24" y="19" width="1.02" height="1.02" fill="#1bad2c"/>
<rect x="25" y="19" width="1.02" height="1.02" fill="#1bad31"/>
<rect x="26" y="19" width="1.02" height="1.02" fill="#1bad3a"/>
<rect x="27" y="19" width="1.02" height="1.02" fill="#1bad42"/>
<rect x="28" y="19" width="1.02" height="1.02" fill="#1bad4b"/>
<rect x="29" y="19" width="1.02" height="1.02" fill="#1bad54"/>
<rect x="30" y="19" width="1.02" height="1.02" fill="#1bad5d"/>
<rect x="31" y="19" width="1.02" height="1.02" fill="#1bad68"/>
<rect x="32" y="19" width="1.02" height="1.02" fill="#1bad74"/>
<rect x="33" y="19" width="1.02" height="1.02" fill="#1bad7f"/>
<rect x="34" y="19" width="1.02" height="1.02" fill="#1bad8b"/>
<rect x="35" y="19" width="1.02" height="1.02" fill="#1bad96"/>
<rect x="36" y="19" width="1.02" height="1.02" fill="#1bada2"/>
<rect x="37" y="19" width="1.02" height="1.02" fill="#1badad"/>
<rect x="38" y="19" width="1.02" height="1.02" fill="#1b9fad"/>
<rect x="39" y="19" width="1.02" height="1.02" fill="#1b90ad"/>
<rect x="40" y="19" width="1.02" height="1.02" fill="#1b81ad"/>
<rect x="41" y="19" width="1.02" height="1.02" fill="#1b73ad"/>
<rect x="42" y="19" width="1.02" height="1.02" fill="#1b64ad"/>
<rect x="43" y="19" width="1.02" height="1.02" fill="#1b55ad"/>
<rect x="44" y="19" width="1.02" height="1.02" fill="#1b47ad"/>
<rect x="45" y="19" width="1.02" height="1.02" fill="#1b38ad"/>
<rect x="46" y="19" width="1.02" height="1.02" fill="#1b2aad"/>
<rect x="47" y="19" width="1.02" height="1.02" fill="#1b1bad"/>
<rect x="48" y="19" width="1.02" height="1.02" fill="#2b1bad"/>
<rect x="49" y="19" width="1.02" height="1.02" fill="#3b1bad"/>
<rect x="0" y="20" width="1.02" height="1.02" fill="#1dad1b"/>
<rect x="1" y="20" width="1.02" height="1.02" fill="#1ead1b"/>
<rect x="2" y="20" width="1.02" height="1.02" fill="#1fad1b"/>
<rect x="3" y="20" width="1.02" height="1.02" fill="#20ad1b"/>
<rect x="4" y="20" width="1.02" height="1.02" fill="#21ad1b"/>
<rect x="5" y="20" width="1.02" height="1.02" fill="#22ad1b"/>
<rect x="6" y="20" width="1.02" height="1.02" fill="#24ad1b"/>
<rect x="7" y="20" width="1.02" height="1.02" fill="#26ad1b"/>
<rect x="8" y="20" width="1.02" height="1.02" fill="#27ad1b"/>
<rect x="9" y="20" width="1.02" height="1.02" fill="#29ad1b"/>
<rect x="10" y="20" width="1.02" height="1.02" fill="#2bad1b"/>
<rect x="11" y="20" width="1.02" height="1.02" fill="#2dad1b"/>
<rect x="12" y="20" width="1.02" height="1.02" fill="#2ead1b"/>
<rect x="13" y="20" width="1.02" height="1.02" fill="#2dad1b"/>
<rect x="14" y="20" width="1.02" height="1.02" fill="#2bad1b"/>
<rect x="15" y="20" width="1.02" height="1.02" fill="#2aad1b"/>
<rect x="16" y="20" width="1.02" height="1.02" fill="#28ad1b"/>
<rect x="17" y="20" width="1.02" height="1.02" fill="#27ad1b"/>
<rect x="18" y="20" width="1.02" height="1.02" fill="#25ad1b"/>
<rect x="19" y="20" width="1.02" height="1.02" fill="#24ad1b"/>
<rect x="20" y="20" width="1.02" height="1.02" fill="#22ad1b"/>
<rect x="21" y="20" width="1.02" height="1.02" fill="#1ead1b"/>
<rect x="22" y="20" width="1.02" height="1.02" fill="#1bad1c"/>
<rect x="23" y="20" width="1.02" height="1.02" fill="#1bad21"/>
<rect x="24" y="20" width="1.02" height="1.02" fill="#1bad25"/>
<rect x="25" y="20" width="1.02" height="1.02" fill="#1bad2a"/>
<rect x="26" y="20" width="1.02" height="1.02" fill="#1bad32"/>
<rect x="27" y="20" width="1.02" height="1.02" fill="#1bad3b"/>
<rect x="28" y="20" width="1.02" height="1.02" fill="#1bad44"/>
<rect x="29" y="20" width="1.02" height="1.02" fill="#1bad4d"/>
<rect x="30" y="20" width="1.02" height="1.02" fill="#1bad55"/>
<rect x="31" y="20" width="1.02" height="1.02" fill="#1bad61"/>
<rect x="32" y="20" width="1.02" height="1.02" fill="#1bad6d"/>
<rect x="33" y="20" width="1.02" height="1.02" fill="#1bad79"/>
<rect x="34" y="20" width="1.02" height="1.02" fill="#1bad84"/>
<rect x="35" y="20" width="1.02" height="1.02" fill="#1bad90"/>
<rect x="36" y="20" width="1.02" height="1.02" fill="#1bad9c"/>
<rect x="37" y="20" width="1.02" height="1.02" fill="#1bada8"/>
<rect x="38" y="20" width="1.02" height="1.02" fill="#1ba6ad"/>
<rect x="39" y="20" width="1.02" height="1.02" fill="#1b97ad"/>
<rect x="40" y="20" width="1.02" height="1.02" fill="#1b89ad"/>
<rect x="41" y="20" width="1.02" height="1.02" fill="#1b7aad"/>
<rect x="42" y="20" width="1.02" height="1.02" fill="#1b6bad"/>
<rect x="43" y="20" width="1.02" height="1.02" fill="#1b5dad"/>
<rect x="44" y="20" width="1.02" height="1.02" fill="#1b4ead"/>
<rect x="45" y="20" width="1.02" height="1.02" fill="#1b40ad"/>
<rect x="46" y="20" width="1.02" height="1.02" fill="#1b31ad"/>
<rect x="47" y="20" width="1.02" height="1.02" fill="#1b22ad"/>
<rect x="48" y="20" width="1.02" height="1.02" fill="#231bad"/>
<rect x="49" y="20" width="1.02" height="1.02" fill="#331bad"/>
<rect x="0" y="21" width="1.02" height="1.02" fill="#22ad1b"/>
<rect x="1" y="21" width="1.02" height="1.02" fill="#25ad1b"/>
<rect x="2" y="21" width="1.02" height="1.02" fill="#27ad1b"/>
<rect x="3" y="21" width="1.02" height="1.02" fill="#2aad1b"/>
<rect x="4" y="21" width="1.02" height="1.02" fill="#2cad1b"/>
<rect x="5" y="21" width="1.02" height="1.02" fill="#2ead1b"/>
<rect x="6" y="21" width="1.02" height="1.02" fill="#31ad1b"/>
<rect x="7" y="21" width="1.02" height="1.02" fill="#33ad1b"/>
<rect x="8" y="21" width="1.02" height="1.02" fill="#35ad1b"/>
<rect x="9" y="21" width="1.02" height="1.02" fill="#37ad1b"/>
<rect x="10" y="21" width="1.02" height="1.02" fill="#39ad1b"/>
<rect x="11" y="21" width="1.02" height="1.02" fill="#3bad1b"/>
<rect x="12" y="21" width="1.02" height="1.02" fill="#3dad1b"/>
<rect x="13" y="21" width="1.02" height="1.02" fill="#3bad1b"/>
<rect x="14" y="21" width="1.02" height="1.02" fill="#39ad1b"/>
<rect x="15" y="21" width="1.02" height="1.02" fill="#37ad1b"/>
<rect x="16" y="21" width="1.02" height="1.02" fill="#35ad1b"/>
<rect x="17" y="21" width="1.02" height="1.02" fill="#32ad1b"/>
<rect x="18" y="21" width="1.02" height="1.02" fill="#30ad1b"/>
<rect x="19" y="21" width="1.02" height="1.02" fill="#2ead1b"/>
<rect x="20" y="21" width="1.02" height="1.02" fill="#2cad1b"/>
<rect x="21" y="21" width="1.02" height="1.02" fill="#27ad1b"/>
<rect x="22" y="21" width="1.02" height="1.02" fill="#21ad1b"/>
<rect x="23" y="21" width="1.02" height="1.02" fill="#1cad1b"/>
<rect x="24" y="21" width="1.02" height="1.02" fill="#1bad1f"/>
<rect x="25" y="21" width="1.02" height="1.02" fill="#1bad25"/>
<rect x="26" y="21" width="1.02" height="1.02" fill="#1bad2d"/>
<rect x="27" y="21" width="1.02" height="1.02" fill="#1bad35"/>
<rect x="28" y="21" width="1.02" height="1.02" fill="#1bad3e"/>
<rect x="29" y="21" width="1.02" height="1.02" fill="#1bad46"/>
<rect x="30" y="21" width="1.02" height="1.02" fill="#1bad4e"/>
<rect x="31" y="21" width="1.02" height="1.02" fill="#1bad5a"/>
<rect x="32" y="21" width="1.02" height="1.02" fill="#1bad66"/>
<rect x="33" y="21" width="1.02" height="1.02" fill="#1bad72"/>
<rect x="34" y="21" width="1.02" height="1.02" fill="#1bad7e"/>
<rect x="35" y="21" width="1.02" height="1.02" fill="#1bad8a"/>
<rect x="36" y="21" width="1.02" height="1.02" fill="#1bad96"/>
<rect x="37" y="21" width="1.02" height="1.02" fill="#1bada1"/>
<rect x="38" y="21" width="1.02" height="1.02" fill="#1badad"/>
<rect x="39" y="21" width="1.02" height="1.02" fill="#1b9fad"/>
<rect x="40" y="21" width="1.02" height="1.02" fill="#1b90ad"/>
<rect x="41" y="21" width="1.02" height="1.02" fill="#1b81ad"/>
<rect x="42" y="21" width="1.02" height="1.02" fill="#1b73ad"/>
<rect x="43" y="21" width="1.02" height="1.02" fill="#1b64ad"/>
<rect x="44" y="21" width="1.02" height="1.02" fill="#1b55ad"/>
<rect x="45" y="21" width="1.02" height="1.02" fill="#1b47ad"/>
<rect x="46" y="21" width="1.02" height="1.02" fill="#1b38ad"/>
<rect x="47" y="21" width="1.02" height="1.02" fill="#1b2aad"/>
<rect x="48" y="21" width="1.02" height="1.02" fill="#1b1bad"/>
<rect x="49" y="21" width="1.02" height="1.02" fill="#2a1bad"/>
<rect x="0" y="22" width="1.02" height="1.02" fill="#27ad1b"/>
<rect x="1" y="22" width="1.02" height="1.02" fill="#2aad1b"/>
<rect x="2" y="22" width="1.02" height="1.02" fill="#2dad1b"/>
<rect x="3" y="22" width="1.02" height="1.02" fill="#30ad1b"/>
<rect x="4" y="22" width="1.02" height="1.02" fill="#33ad1b"/>
<rect x="5" y="22" width="1.02" height="1.02" fill="#36ad1b"/>
<rect x="6" y="22" width="1.02" height="1.02" fill="#39ad1b"/>
<rect x="7" y="22" width="1.02" height="1.02" fill="#3bad1b"/>
<rect x="8" y="22" width="1.02" height="1.02" fill="#3ead1b"/>
<rect x="9" y="22" width="1.02" height="1.02" fill="#41ad1b"/>
<rect x="10" y="22" width="1.02" height="1.02" fill="#44ad1b"/>
<rect x="11" y="22" width="1.02" height="1.02" fill="#46ad1b"/>
<rect x="12" y="22" width="1.02" height="1.02" fill="#49ad1b"/>
<rect x="13" y="22" width="1.02" height="1.02" fill="#47ad1b"/>
<rect x="14" y="22" width="1.02" height="1.02" fill="#44ad1b"/>
<rect x="15" y="22" width="1.02" height="1.02" fill="#41ad1b"/>
<rect x="16" y="22" width="1.02" height="1.02" fill="#3ead1b"/>
<rect x="17" y="22" width="1.02" height="1.02" fill="#3cad1b"/>
<rect x="18" y="22" width="1.02" height="1.02" fill="#39ad1b"/>
<rect x="19" y="22" width="1.02" height="1.02" fill="#36ad1b"/>
<rect x="20" y="22" width="1.02" height="1.02" fill="#33ad1b"/>
<rect x="21" y="22" width="1.02" height="1.02" fill="#2dad1b"/>
<rect x="22" y="22" width="1.02" height="1.02" fill="#28ad1b"/>
<rect x="23" y="22" width="1.02" height="1.02" fill="#22ad1b"/>
<rect x="24" y="22" width="1.02" height="1.02" fill="#1cad1b"/>
<rect x="25" y="22" width="1.02" height="1.02" fill="#1bad20"/>
<rect x="26" y="22" width="1.02" height="1.02" fill="#1bad28"/>
<rect x="27" y="22" width="1.02" height="1.02" fill="#1bad30"/>
<rect x="28" y="22" width="1.02" height="1.02" fill="#1bad39"/>
<rect x="29" y="22" width="1.02" height="1.02" fill="#1bad41"/>
<rect x="30" y="22" width="1.02" height="1.02" fill="#1bad49"/>
<rect x="31" y="22" width="1.02" height="1.02" fill="#1bad55"/>
<rect x="32" y="22" width="1.02" height="1.02" fill="#1bad61"/>
<rect x="33" y="22" width="1.02" height="1.02" fill="#1bad6d"/>
<rect x="34" y="22" width="1.02" height="1.02" fill="#1bad78"/>
<rect x="35" y="22" width="1.02" height="1.02" fill="#1bad84"/>
<rect x="36" y="22" width="1.02" height="1.02" fill="#1bad90"/>
<rect x="37" y="22" width="1.02" height="1.02" fill="#1bad9c"/>
<rect x="38" y="22" width="1.02" height="1.02" fill="#1bada8"/>
<rect x="39" y="22" width="1.02" height="1.02" fill="#1ba6ad"/>
<rect x="40" y="22" width="1.02" height="1.02" fill="#1b97ad"/>
<rect x="41" y="22" width="1.02" height="1.02" fill="#1b89ad"/>
<rect x="42" y="22" width="1.02" height="1.02" fill="#1b7aad"/>
<rect x="43" y="22" width="1.02" height="1.02" fill="#1b6bad"/>
<rect x="44" y="22" width="1.02" height="1.02" fill="#1b5dad"/>
<rect x="45" y="22" width="1.02" height="1.02" fill="#1b4ead"/>
<rect x="46" y="22" width="1.02" height="1.02" fill="#1b40ad"/>
<rect x="47" y="22" width="1.02" height="1.02" fill="#1b31ad"/>
<rect x="48" y="22" width="1.02" height="1.02" fill="#1b22ad"/>
<rect x="49" y="22" width="1.02" height="1.02" fill="#221bad"/>
<rect x="0" y="23" width="1.02" height="1.02" fill="#2cad1b"/>
<rect x="1" y="23" width="1.02" height="1.02" fill="#2fad1b"/>
<rect x="2" y="23" width="1.02" height="1.02" fill="#32ad1b"/>
<rect x="3" y="23" width="1.02" height="1.02" fill="#35ad1b"/>
<rect x="4" y="23" width="1.02" height="1.02" fill="#38ad1b"/>
<rect x="5" y="23" width="1.02" height="1.02" fill="#3bad1b"/>
<rect x="6" y="23" width="1.02" height="1.02" fill="#3ead1b"/>
<rect x="7" y="23" width="1.02" height="1.02" fill="#41ad1b"/>
<rect x="8" y="23" width="1.02" height="1.02" fill="#44ad1b"/>
<rect x="9" y="23" width="1.02" height="1.02" fill="#47ad1b"/>
<rect x="10" y="23" width="1.02" height="1.02" fill="#4aad1b"/>
<rect x="11" y="23" width="1.02" height="1.02" fill="#4dad1b"/>
<rect x="12" y="23" width="1.02" height="1.02" fill="#51ad1b"/>
<rect x="13" y="23" width="1.02" height="1.02" fill="#4ead1b"/>
<rect x="14" y="23" width="1.02" height="1.02" fill="#4aad1b"/>
<rect x="15" y="23" width="1.02" height="1.02" fill="#47ad1b"/>
<rect x="16" y="23" width="1.02" height="1.02" fill="#44ad1b"/>
<rect x="17" y="23" width="1.02" height="1.02" fill="#41ad1b"/>
<rect x="18" y="23" width="1.02" height="1.02" fill="#3ead1b"/>
<rect x="19" y="23" width="1.02" height="1.02" fill="#3bad1b"/>
<rect x="20" y="23" width="1.02" height="1.02" fill="#38ad1b"/>
<rect x="21" y="23" width="1.02" height="1.02" fill="#32ad1b"/>
<rect x="22" y="23" width="1.02" height="1.02" fill="#2cad1b"/>
<rect x="23" y="23" width="1.02" height="1.02" fill="#27ad1b"/>
<rect x="24" y="23" width="1.02" height="1.02" fill="#21ad1b"/>
<rect x="25" y="23" width="1.02" height="1.02" fill="#1bad1b"/>
<rect x="26" y="23" width="1.02" height="1.02" fill="#1bad24"/>
<rect x="27" y="23" width="1.02" height="1.02" fill="#1bad2c"/>
<rect x="28" y="23" width="1.02" height="1.02" fill="#1bad35"/>
<rect x="29" y="23" width="1.02" height="1.02" fill="#1bad3e"/>
<rect x="30" y="23" width="1.02" height="1.02" fill="#1bad47"/>
<rect x="31" y="23" width="1.02" height="1.02" fill="#1bad52"/>
<rect x="32" y="23" width="1.02" height="1.02" fill="#1bad5e"/>
<rect x="33" y="23" width="1.02" height="1.02" fill="#1bad69"/>
<rect x="34" y="23" width="1.02" height="1.02" fill="#1bad74"/>
<rect x="35" y="23" width="1.02" height="1.02" fill="#1bad80"/>
<rect x="36" y="23" width="1.02" height="1.02" fill="#1bad8b"/>
<rect x="37" y="23" width="1.02" height="1.02" fill="#1bad97"/>
<rect x="38" y="23" width="1.02" height="1.02" fill="#1bada2"/>
<rect x="39" y="23" width="1.02" height="1.02" fill="#1badad"/>
<rect x="40" y="23" width="1.02" height="1.02" fill="#1b9fad"/>
<rect x="41" y="23" width="1.02" height="1.02" fill="#1b90ad"/>
<rect x="42" y="23" width="1.02" height="1.02" fill="#1b81ad"/>
<rect x="43" y="23" width="1.02" height="1.02" fill="#1b73ad"/>
<rect x="44" y="23" width="1.02" height="1.02" fill="#1b64ad"/>
<rect x="45" y="23" width="1.02" height="1.02" fill="#1b55ad"/>
<rect x="46" y="23" width="1.02" height="1.02" fill="#1b47ad"/>
<rect x="47" y="23" width="1.02" height="1.02" fill="#1b38ad"/>
<rect x="48" y="23" width="1.02" height="1.02" fill="#1b2aad"/>
<rect x="49" y="23" width="1.02" height="1.02" fill="#1b1bad"/>
</svg>
<div class="ab" style="left:1038px;top:378px;width:288px;height:25.5px;background:#000"></div>
<div class="ab" style="left:882px;top:378px;width:600px;height:612px;background:repeating-linear-gradient(90deg,rgba(0,0,0,.12) 0 1.3px,transparent 1.3px 12px),repeating-linear-gradient(180deg,transparent 0 24.5px,rgba(0,0,0,.10) 24.5px 26px,transparent 26px 51px)"></div>
<svg class="ab" style="left:1746px;top:939px" width="864" height="586.5" viewBox="0 0 72 46" preserveAspectRatio="none" shape-rendering="crispEdges">
<defs><pattern id="ck" width="12" height="12" patternUnits="userSpaceOnUse">
<rect width="12" height="12" fill="#ffffff"/>
<rect x="0" y="0" width="2" height="1" fill="#e6e6e6"/>
<rect x="3" y="0" width="1" height="1" fill="#e6e6e6"/>
<rect x="5" y="0" width="1" height="1" fill="#e6e6e6"/>
<rect x="8" y="0" width="1" height="1" fill="#e6e6e6"/>
<rect x="10" y="0" width="1" height="1" fill="#e6e6e6"/>
<rect x="2" y="1" width="1" height="1" fill="#e6e6e6"/>
<rect x="4" y="1" width="1" height="1" fill="#e6e6e6"/>
<rect x="6" y="1" width="2" height="1" fill="#e6e6e6"/>
<rect x="9" y="1" width="1" height="1" fill="#e6e6e6"/>
<rect x="11" y="1" width="1" height="1" fill="#e6e6e6"/>
<rect x="0" y="2" width="2" height="1" fill="#e6e6e6"/>
<rect x="3" y="2" width="1" height="1" fill="#e6e6e6"/>
<rect x="5" y="2" width="1" height="1" fill="#e6e6e6"/>
<rect x="8" y="2" width="1" height="1" fill="#e6e6e6"/>
<rect x="10" y="2" width="1" height="1" fill="#e6e6e6"/>
<rect x="2" y="3" width="1" height="1" fill="#e6e6e6"/>
<rect x="4" y="3" width="1" height="1" fill="#e6e6e6"/>
<rect x="6" y="3" width="2" height="1" fill="#e6e6e6"/>
<rect x="9" y="3" width="1" height="1" fill="#e6e6e6"/>
<rect x="11" y="3" width="1" height="1" fill="#e6e6e6"/>
<rect x="0" y="4" width="2" height="1" fill="#e6e6e6"/>
<rect x="3" y="4" width="1" height="1" fill="#e6e6e6"/>
<rect x="5" y="4" width="1" height="1" fill="#e6e6e6"/>
<rect x="8" y="4" width="1" height="1" fill="#e6e6e6"/>
<rect x="10" y="4" width="1" height="1" fill="#e6e6e6"/>
<rect x="0" y="5" width="2" height="1" fill="#e6e6e6"/>
<rect x="3" y="5" width="1" height="1" fill="#e6e6e6"/>
<rect x="5" y="5" width="1" height="1" fill="#e6e6e6"/>
<rect x="8" y="5" width="1" height="1" fill="#e6e6e6"/>
<rect x="10" y="5" width="1" height="1" fill="#e6e6e6"/>
<rect x="2" y="6" width="1" height="1" fill="#e6e6e6"/>
<rect x="4" y="6" width="1" height="1" fill="#e6e6e6"/>
<rect x="6" y="6" width="2" height="1" fill="#e6e6e6"/>
<rect x="9" y="6" width="1" height="1" fill="#e6e6e6"/>
<rect x="11" y="6" width="1" height="1" fill="#e6e6e6"/>
<rect x="0" y="7" width="2" height="1" fill="#e6e6e6"/>
<rect x="3" y="7" width="1" height="1" fill="#e6e6e6"/>
<rect x="5" y="7" width="1" height="1" fill="#e6e6e6"/>
<rect x="8" y="7" width="1" height="1" fill="#e6e6e6"/>
<rect x="10" y="7" width="1" height="1" fill="#e6e6e6"/>
<rect x="2" y="8" width="1" height="1" fill="#e6e6e6"/>
<rect x="4" y="8" width="1" height="1" fill="#e6e6e6"/>
<rect x="6" y="8" width="2" height="1" fill="#e6e6e6"/>
<rect x="9" y="8" width="1" height="1" fill="#e6e6e6"/>
<rect x="11" y="8" width="1" height="1" fill="#e6e6e6"/>
<rect x="0" y="9" width="2" height="1" fill="#e6e6e6"/>
<rect x="3" y="9" width="1" height="1" fill="#e6e6e6"/>
<rect x="5" y="9" width="1" height="1" fill="#e6e6e6"/>
<rect x="8" y="9" width="1" height="1" fill="#e6e6e6"/>
<rect x="10" y="9" width="1" height="1" fill="#e6e6e6"/>
<rect x="2" y="10" width="1" height="1" fill="#e6e6e6"/>
<rect x="4" y="10" width="1" height="1" fill="#e6e6e6"/>
<rect x="6" y="10" width="2" height="1" fill="#e6e6e6"/>
<rect x="9" y="10" width="1" height="1" fill="#e6e6e6"/>
<rect x="11" y="10" width="1" height="1" fill="#e6e6e6"/>
<rect x="2" y="11" width="1" height="1" fill="#e6e6e6"/>
<rect x="4" y="11" width="1" height="1" fill="#e6e6e6"/>
<rect x="6" y="11" width="2" height="1" fill="#e6e6e6"/>
<rect x="9" y="11" width="1" height="1" fill="#e6e6e6"/>
<rect x="11" y="11" width="1" height="1" fill="#e6e6e6"/>
</pattern></defs>
<rect width="72" height="46" fill="url(#ck)"/>
<rect x="35" y="2" width="1.02" height="1.02" fill="#a678a8"/>
<rect x="36" y="2" width="1.02" height="1.02" fill="#9b4f96"/>
<rect x="37" y="2" width="1.02" height="1.02" fill="#4a1060"/>
<rect x="33" y="3" width="1.02" height="1.02" fill="#a868a8"/>
<rect x="34" y="3" width="5.02" height="1.02" fill="#9b4f96"/>
<rect x="39" y="3" width="1.02" height="1.02" fill="#8e4494"/>
<rect x="32" y="4" width="9.02" height="1.02" fill="#9b4f96"/>
<rect x="30" y="5" width="1.02" height="1.02" fill="#8a3e90"/>
<rect x="31" y="5" width="12.02" height="1.02" fill="#9b4f96"/>
<rect x="28" y="6" width="17.02" height="1.02" fill="#9b4f96"/>
<rect x="26" y="7" width="1.02" height="1.02" fill="#d0a8d0"/>
<rect x="27" y="7" width="19.02" height="1.02" fill="#9b4f96"/>
<rect x="46" y="7" width="1.02" height="1.02" fill="#8e4494"/>
<rect x="25" y="8" width="23.02" height="1.02" fill="#9b4f96"/>
<rect x="23" y="9" width="27.02" height="1.02" fill="#9b4f96"/>
<rect x="21" y="10" width="1.02" height="1.02" fill="#7e3a8c"/>
<rect x="22" y="10" width="30.02" height="1.02" fill="#9b4f96"/>
<rect x="20" y="11" width="33.02" height="1.02" fill="#9b4f96"/>
<rect x="53" y="11" width="1.02" height="1.02" fill="#b088b8"/>
<rect x="18" y="12" width="37.02" height="1.02" fill="#9b4f96"/>
<rect x="16" y="13" width="41.02" height="1.02" fill="#9b4f96"/>
<rect x="14" y="14" width="1.02" height="1.02" fill="#7e3a8c"/>
<rect x="15" y="14" width="20.02" height="1.02" fill="#9b4f96"/>
<rect x="39" y="14" width="1.02" height="1.02" fill="#35083d"/>
<rect x="40" y="14" width="19.02" height="1.02" fill="#9b4f96"/>
<rect x="13" y="15" width="18.02" height="1.02" fill="#9b4f96"/>
<rect x="31" y="15" width="1.02" height="1.02" fill="#d0b0d8"/>
<rect x="43" y="15" width="17.02" height="1.02" fill="#9b4f96"/>
<rect x="12" y="16" width="17.02" height="1.02" fill="#9b4f96"/>
<rect x="45" y="16" width="16.02" height="1.02" fill="#9b4f96"/>
<rect x="12" y="17" width="16.02" height="1.02" fill="#9b4f96"/>
<rect x="47" y="17" width="14.02" height="1.02" fill="#9b4f96"/>
<rect x="12" y="18" width="14.02" height="1.02" fill="#9b4f96"/>
<rect x="26" y="18" width="1.02" height="1.02" fill="#68217a"/>
<rect x="48" y="18" width="11.02" height="1.02" fill="#9b4f96"/>
<rect x="59" y="18" width="2.02" height="1.02" fill="#80368a"/>
<rect x="12" y="19" width="13.02" height="1.02" fill="#9b4f96"/>
<rect x="25" y="19" width="1.02" height="1.02" fill="#a070a8"/>
<rect x="49" y="19" width="8.02" height="1.02" fill="#9b4f96"/>
<rect x="57" y="19" width="4.02" height="1.02" fill="#80368a"/>
<rect x="12" y="20" width="13.02" height="1.02" fill="#9b4f96"/>
<rect x="50" y="20" width="6.02" height="1.02" fill="#9b4f96"/>
<rect x="56" y="20" width="5.02" height="1.02" fill="#80368a"/>
<rect x="12" y="21" width="12.02" height="1.02" fill="#9b4f96"/>
<rect x="51" y="21" width="3.02" height="1.02" fill="#9b4f96"/>
<rect x="54" y="21" width="7.02" height="1.02" fill="#80368a"/>
<rect x="12" y="22" width="11.02" height="1.02" fill="#9b4f96"/>
<rect x="35" y="22" width="5.02" height="1.02" fill="#9b4f96"/>
<rect x="51" y="22" width="10.02" height="1.02" fill="#80368a"/>
<rect x="12" y="23" width="11.02" height="1.02" fill="#9b4f96"/>
<rect x="33" y="23" width="9.02" height="1.02" fill="#9b4f96"/>
<rect x="51" y="23" width="10.02" height="1.02" fill="#80368a"/>
<rect x="12" y="24" width="10.02" height="1.02" fill="#9b4f96"/>
<rect x="31" y="24" width="1.02" height="1.02" fill="#c8a8d0"/>
<rect x="32" y="24" width="11.02" height="1.02" fill="#9b4f96"/>
<rect x="49" y="24" width="1.02" height="1.02" fill="#9b4f96"/>
<rect x="50" y="24" width="11.02" height="1.02" fill="#80368a"/>
<rect x="12" y="25" width="10.02" height="1.02" fill="#9b4f96"/>
<rect x="31" y="25" width="13.02" height="1.02" fill="#9b4f96"/>
<rect x="47" y="25" width="14.02" height="1.02" fill="#80368a"/>
<rect x="12" y="26" width="10.02" height="1.02" fill="#9b4f96"/>
<rect x="30" y="26" width="15.02" height="1.02" fill="#9b4f96"/>
<rect x="45" y="26" width="1.02" height="1.02" fill="#7a5080"/>
<rect x="46" y="26" width="15.02" height="1.02" fill="#80368a"/>
<rect x="12" y="27" width="9.02" height="1.02" fill="#9b4f96"/>
<rect x="21" y="27" width="1.02" height="1.02" fill="#b89cb8"/>
<rect x="30" y="27" width="14.02" height="1.02" fill="#9b4f96"/>
<rect x="44" y="27" width="5.02" height="1.02" fill="#80368a"/>
<rect x="51" y="27" width="2.02" height="1.02" fill="#80368a"/>
<rect x="55" y="27" width="6.02" height="1.02" fill="#80368a"/>
<rect x="12" y="28" width="9.02" height="1.02" fill="#9b4f96"/>
<rect x="29" y="28" width="13.02" height="1.02" fill="#9b4f96"/>
<rect x="42" y="28" width="7.02" height="1.02" fill="#80368a"/>
<rect x="51" y="28" width="2.02" height="1.02" fill="#80368a"/>
<rect x="55" y="28" width="6.02" height="1.02" fill="#80368a"/>
<rect x="12" y="29" width="9.02" height="1.02" fill="#9b4f96"/>
<rect x="29" y="29" width="11.02" height="1.02" fill="#9b4f96"/>
<rect x="40" y="29" width="7.02" height="1.02" fill="#80368a"/>
<rect x="47" y="29" width="1.02" height="1.02" fill="#602060"/>
<rect x="56" y="29" width="5.02" height="1.02" fill="#80368a"/>
<rect x="12" y="30" width="9.02" height="1.02" fill="#9b4f96"/>
<rect x="29" y="30" width="9.02" height="1.02" fill="#9b4f96"/>
<rect x="38" y="30" width="10.02" height="1.02" fill="#80368a"/>
<rect x="48" y="30" width="1.02" height="1.02" fill="#b59bb6"/>
<rect x="51" y="30" width="2.02" height="1.02" fill="#b59bb6"/>
<rect x="55" y="30" width="1.02" height="1.02" fill="#b59bb6"/>
<rect x="56" y="30" width="5.02" height="1.02" fill="#80368a"/>
<rect x="12" y="31" width="9.02" height="1.02" fill="#9b4f96"/>
<rect x="29" y="31" width="8.02" height="1.02" fill="#9b4f96"/>
<rect x="37" y="31" width="12.02" height="1.02" fill="#80368a"/>
<rect x="51" y="31" width="2.02" height="1.02" fill="#80368a"/>
<rect x="55" y="31" width="6.02" height="1.02" fill="#80368a"/>
<rect x="12" y="32" width="9.02" height="1.02" fill="#9b4f96"/>
<rect x="29" y="32" width="6.02" height="1.02" fill="#9b4f96"/>
<rect x="35" y="32" width="3.02" height="1.02" fill="#68217a"/>
<rect x="38" y="32" width="10.02" height="1.02" fill="#80368a"/>
<rect x="48" y="32" width="1.02" height="1.02" fill="#9b4f96"/>
<rect x="51" y="32" width="2.02" height="1.02" fill="#9b4f96"/>
<rect x="55" y="32" width="1.02" height="1.02" fill="#9b4f96"/>
<rect x="56" y="32" width="5.02" height="1.02" fill="#80368a"/>
<rect x="12" y="33" width="9.02" height="1.02" fill="#9b4f96"/>
<rect x="21" y="33" width="1.02" height="1.02" fill="#a890b0"/>
<rect x="30" y="33" width="4.02" height="1.02" fill="#9b4f96"/>
<rect x="34" y="33" width="6.02" height="1.02" fill="#68217a"/>
<rect x="40" y="33" width="7.02" height="1.02" fill="#80368a"/>
<rect x="47" y="33" width="1.02" height="1.02" fill="#602060"/>
<rect x="56" y="33" width="5.02" height="1.02" fill="#80368a"/>
<rect x="12" y="34" width="10.02" height="1.02" fill="#9b4f96"/>
<rect x="30" y="34" width="2.02" height="1.02" fill="#9b4f96"/>
<rect x="32" y="34" width="10.02" height="1.02" fill="#68217a"/>
<rect x="42" y="34" width="7.02" height="1.02" fill="#80368a"/>
<rect x="51" y="34" width="2.02" height="1.02" fill="#80368a"/>
<rect x="55" y="34" width="6.02" height="1.02" fill="#80368a"/>
<rect x="12" y="35" width="10.02" height="1.02" fill="#9b4f96"/>
<rect x="31" y="35" width="12.02" height="1.02" fill="#68217a"/>
<rect x="43" y="35" width="6.02" height="1.02" fill="#80368a"/>
<rect x="51" y="35" width="2.02" height="1.02" fill="#80368a"/>
<rect x="55" y="35" width="6.02" height="1.02" fill="#80368a"/>
<rect x="12" y="36" width="10.02" height="1.02" fill="#9b4f96"/>
<rect x="32" y="36" width="11.02" height="1.02" fill="#68217a"/>
<rect x="45" y="36" width="1.02" height="1.02" fill="#682868"/>
<rect x="46" y="36" width="15.02" height="1.02" fill="#80368a"/>
<rect x="12" y="37" width="11.02" height="1.02" fill="#9b4f96"/>
<rect x="33" y="37" width="9.02" height="1.02" fill="#68217a"/>
<rect x="47" y="37" width="14.02" height="1.02" fill="#80368a"/>
<rect x="12" y="38" width="11.02" height="1.02" fill="#9b4f96"/>
<rect x="35" y="38" width="4.02" height="1.02" fill="#68217a"/>
<rect x="39" y="38" width="1.02" height="1.02" fill="#4a1060"/>
<rect x="49" y="38" width="12.02" height="1.02" fill="#80368a"/>
<rect x="12" y="39" width="11.02" height="1.02" fill="#9b4f96"/>
<rect x="23" y="39" width="1.02" height="1.02" fill="#68217a"/>
<rect x="50" y="39" width="1.02" height="1.02" fill="#702888"/>
<rect x="51" y="39" width="10.02" height="1.02" fill="#80368a"/>
<rect x="12" y="40" width="10.02" height="1.02" fill="#9b4f96"/>
<rect x="22" y="40" width="3.02" height="1.02" fill="#68217a"/>
<rect x="50" y="40" width="2.02" height="1.02" fill="#68217a"/>
<rect x="52" y="40" width="9.02" height="1.02" fill="#80368a"/>
<rect x="12" y="41" width="8.02" height="1.02" fill="#9b4f96"/>
<rect x="20" y="41" width="5.02" height="1.02" fill="#68217a"/>
<rect x="25" y="41" width="1.02" height="1.02" fill="#581868"/>
<rect x="49" y="41" width="5.02" height="1.02" fill="#68217a"/>
<rect x="54" y="41" width="7.02" height="1.02" fill="#80368a"/>
<rect x="12" y="42" width="6.02" height="1.02" fill="#9b4f96"/>
<rect x="18" y="42" width="9.02" height="1.02" fill="#68217a"/>
<rect x="48" y="42" width="8.02" height="1.02" fill="#68217a"/>
<rect x="56" y="42" width="5.02" height="1.02" fill="#80368a"/>
<rect x="12" y="43" width="5.02" height="1.02" fill="#9b4f96"/>
<rect x="17" y="43" width="11.02" height="1.02" fill="#68217a"/>
<rect x="47" y="43" width="10.02" height="1.02" fill="#68217a"/>
<rect x="57" y="43" width="4.02" height="1.02" fill="#80368a"/>
<rect x="12" y="44" width="3.02" height="1.02" fill="#9b4f96"/>
<rect x="15" y="44" width="14.02" height="1.02" fill="#68217a"/>
<rect x="29" y="44" width="1.02" height="1.02" fill="#8a7090"/>
<rect x="45" y="44" width="14.02" height="1.02" fill="#68217a"/>
<rect x="59" y="44" width="2.02" height="1.02" fill="#80368a"/>
<rect x="13" y="45" width="18.02" height="1.02" fill="#68217a"/>
<rect x="31" y="45" width="1.02" height="1.02" fill="#581868"/>
<rect x="43" y="45" width="17.02" height="1.02" fill="#68217a"/>
</svg>
<svg class="ab" style="left:0;top:0" width="2811" height="1741">
<path fill="#848484" d="M2742 72h12v25.8h-12Z"/>
<path fill="#848484" d="M2742 97.5h12v25.8h-12Z"/>
<path fill="#848484" d="M2742 123h12v25.8h-12Z"/>
<path fill="#848484" d="M2742 148.5h12v25.8h-12Z"/>
<path fill="#00ffff" d="M2283.6 180L2292.6 198H2274.6Z"/>
<path fill="#848484" d="M2742 174h12v25.8h-12Z"/>
<path fill="#00ffff" d="M2274 199.5h12v25.8h-12Z"/>
<path fill="#848484" d="M2742 199.5h12v25.8h-12Z"/>
<path fill="#303030" d="M2280.6 225h1.4v25.5h-1.4Z"/>
<path fill="#848484" d="M2742 225h12v25.8h-12Z"/>
<path fill="#303030" d="M2280.6 250.5h1.4v25.5h-1.4Z"/>
<path fill="#848484" d="M2742 250.5h12v25.8h-12Z"/>
<path fill="#303030" d="M2280.6 276h1.4v25.5h-1.4Z"/>
<path fill="#848484" d="M2742 276h12v25.8h-12Z"/>
<path fill="#303030" d="M2280.6 301.5h1.4v25.5h-1.4Z"/>
<path fill="#848484" d="M2742 301.5h12v25.8h-12Z"/>
<path fill="#303030" d="M2280.6 327h1.4v25.5h-1.4Z"/>
<path fill="#848484" d="M2742 327h12v25.8h-12Z"/>
<path fill="#303030" d="M2280.6 352.5h1.4v25.5h-1.4Z"/>
<path fill="#848484" d="M2742 352.5h12v25.8h-12Z"/>
<path fill="#303030" d="M2280.6 378h1.4v25.5h-1.4Z"/>
<path fill="#848484" d="M2742 378h12v25.8h-12Z"/>
<path fill="#303030" d="M2280.6 403.5h1.4v25.5h-1.4Z"/>
<path fill="#848484" d="M2742 403.5h12v25.8h-12Z"/>
<path fill="#303030" d="M2280.6 429h1.4v25.5h-1.4Z"/>
<path fill="#848484" d="M2742 429h12v25.8h-12Z"/>
<path fill="#303030" d="M2280.6 454.5h1.4v25.5h-1.4Z"/>
<path fill="#848484" d="M2742 454.5h12v25.8h-12Z"/>
<path fill="#303030" d="M2280.6 480h1.4v25.5h-1.4Z"/>
<path fill="#848484" d="M2742 480h12v25.8h-12Z"/>
<path fill="#303030" d="M2280.6 505.5h1.4v25.5h-1.4Z"/>
<path fill="#848484" d="M2742 505.5h12v25.8h-12Z"/>
<path fill="#303030" d="M2280.6 531h1.4v25.5h-1.4Z"/>
<path fill="#848484" d="M2742 531h12v25.8h-12Z"/>
<path fill="#303030" d="M2280.6 556.5h1.4v25.5h-1.4Z"/>
<path fill="#848484" d="M2742 556.5h12v25.8h-12Z"/>
<path fill="#303030" d="M2280.6 582h1.4v25.5h-1.4Z"/>
<path fill="#3c3c3c" d="M2748.6 582h1.4v25.5h-1.4Z"/>
<path fill="#303030" d="M2280.6 607.5h1.4v25.5h-1.4Z"/>
<path fill="#3c3c3c" d="M2748.6 607.5h1.4v25.5h-1.4Z"/>
<path fill="#303030" d="M2280.6 633h1.4v25.5h-1.4Z"/>
<path fill="#3c3c3c" d="M2748.6 633h1.4v25.5h-1.4Z"/>
<path fill="#303030" d="M2280.6 658.5h1.4v25.5h-1.4Z"/>
<path fill="#3c3c3c" d="M2748.6 658.5h1.4v25.5h-1.4Z"/>
<path fill="#303030" d="M2280.6 684h1.4v25.5h-1.4Z"/>
<path fill="#3c3c3c" d="M2748.6 684h1.4v25.5h-1.4Z"/>
<path fill="#303030" d="M2280.6 709.5h1.4v25.5h-1.4Z"/>
<path fill="#3c3c3c" d="M2748.6 709.5h1.4v25.5h-1.4Z"/>
<path fill="#303030" d="M2280.6 735h1.4v25.5h-1.4Z"/>
<path fill="#3c3c3c" d="M2748.6 735h1.4v25.5h-1.4Z"/>
<path fill="#303030" d="M2280.6 760.5h1.4v25.5h-1.4Z"/>
<path fill="#3c3c3c" d="M2748.6 760.5h1.4v25.5h-1.4Z"/>
<path fill="#303030" d="M2280.6 786h1.4v25.5h-1.4Z"/>
<path fill="#3c3c3c" d="M2748.6 786h1.4v25.5h-1.4Z"/>
<path fill="#303030" d="M2280.6 811.5h1.4v25.5h-1.4Z"/>
<path fill="#3c3c3c" d="M2748.6 811.5h1.4v25.5h-1.4Z"/>
<path fill="#303030" d="M2280.6 837h1.4v25.5h-1.4Z"/>
<path fill="#3c3c3c" d="M2748.6 837h1.4v25.5h-1.4Z"/>
<path fill="#00ffff" d="M2283.6 886.7L2292.6 869H2274.6Z"/>
<path fill="#808080" d="M2751.6 886.7L2760.6 869H2742.6Z"/>
<path fill="#858585" d="M2766.5 914V939H2754Z"/>
<path fill="#848484" d="M2622 939h12v25.8h-12Z"/>
<path fill="#848484" d="M2622 964.5h12v25.8h-12Z"/>
<path fill="#00ffff" d="M1494.5 990.5V1015.5H1482Z"/>
<path fill="#848484" d="M2622 990h12v25.8h-12Z"/>
<path fill="#858585" d="M1626.5 1016V1041H1614Z"/>
<path fill="#848484" d="M2622 1015.5h12v25.8h-12Z"/>
<path fill="#848484" d="M1086 1041h12v25.8h-12Z"/>
<path fill="#848484" d="M2622 1041h12v25.8h-12Z"/>
<path fill="#848484" d="M1086 1066.5h12v25.8h-12Z"/>
<path fill="#848484" d="M2622 1066.5h12v25.8h-12Z"/>
<path fill="#848484" d="M1086 1092h12v25.8h-12Z"/>
<path fill="#848484" d="M2622 1092h12v25.8h-12Z"/>
<path fill="#848484" d="M1086 1117.5h12v25.8h-12Z"/>
<path fill="#848484" d="M2622 1117.5h12v25.8h-12Z"/>
<path fill="#848484" d="M1086 1143h12v25.8h-12Z"/>
<path fill="#848484" d="M2622 1143h12v25.8h-12Z"/>
<path fill="#848484" d="M1086 1168.5h12v25.8h-12Z"/>
<path fill="#848484" d="M2622 1168.5h12v25.8h-12Z"/>
<path fill="#848484" d="M1086 1194h12v25.8h-12Z"/>
<path fill="#848484" d="M2622 1194h12v25.8h-12Z"/>
<path fill="#848484" d="M1086 1219.5h12v25.8h-12Z"/>
<path fill="#848484" d="M2622 1219.5h12v25.8h-12Z"/>
<path fill="#848484" d="M1086 1245h12v25.8h-12Z"/>
<path fill="#848484" d="M2622 1245h12v25.8h-12Z"/>
<path fill="#848484" d="M1086 1270.5h12v25.8h-12Z"/>
<path fill="#848484" d="M2622 1270.5h12v25.8h-12Z"/>
<path fill="#848484" d="M1086 1296h12v25.8h-12Z"/>
<path fill="#848484" d="M2622 1296h12v25.8h-12Z"/>
<path fill="#848484" d="M1086 1321.5h12v25.8h-12Z"/>
<path fill="#848484" d="M2622 1321.5h12v25.8h-12Z"/>
<path fill="#848484" d="M1086 1347h12v25.8h-12Z"/>
<path fill="#848484" d="M2622 1347h12v25.8h-12Z"/>
<path fill="#848484" d="M1086 1372.5h12v25.8h-12Z"/>
<path fill="#3c3c3c" d="M2628.6 1372.5h1.4v25.5h-1.4Z"/>
<path fill="#848484" d="M1086 1398h12v25.8h-12Z"/>
<path fill="#3c3c3c" d="M2628.6 1398h1.4v25.5h-1.4Z"/>
<path fill="#3c3c3c" d="M1092.6 1423.5h1.4v25.5h-1.4Z"/>
<path fill="#3c3c3c" d="M2628.6 1423.5h1.4v25.5h-1.4Z"/>
<path fill="#3c3c3c" d="M1092.6 1449h1.4v25.5h-1.4Z"/>
<path fill="#3c3c3c" d="M2628.6 1449h1.4v25.5h-1.4Z"/>
<path fill="#3c3c3c" d="M1092.6 1474.5h1.4v25.5h-1.4Z"/>
<path fill="#3c3c3c" d="M2628.6 1474.5h1.4v25.5h-1.4Z"/>
<path fill="#3c3c3c" d="M1092.6 1500h1.4v25.5h-1.4Z"/>
<path fill="#808080" d="M2631.6 1524.2L2640.6 1506.5H2622.6Z"/>
<path fill="#3c3c3c" d="M1092.6 1525.5h1.4v25.5h-1.4Z"/>
<path fill="#808080" d="M1095.6 1575.2L1104.6 1557.5H1086.6Z"/>
<path fill="#858585" d="M1110.5 1577V1602H1098Z"/>
<path fill="#858585" d="M2646.5 1577V1602H2634Z"/>
<path fill="#00ffff" d="M1650.5 1628V1653H1638Z"/>
<path fill="none" stroke="#00ffff" stroke-width="1.7" d="M1225.3 123V114.75Q1225.3 110.25 1229.8 110.25H1230M2269.3 123V114.75Q2269.3 110.25 2264.8 110.25H2262M2269.3 862.5V870.75Q2269.3 875.25 2264.8 875.25H2262M1230 110.25H2262M1224.45 161.25H2270.15M875.05 363.65H894M1014 363.65H1374M1482 363.65H1492.05M878.35 366.95H894M1014 366.95H1374M1482 366.95H1488.75M1626 824.25H2270.15M1626 875.25H2262M875.05 1004.45H1482M878.35 1001.15H1482M1187.05 1103.15H1206M1386 1103.15H1530M1638 1103.15H1648.05M1190.35 1106.45H1206M1386 1106.45H1530M1638 1106.45H1644.75M1187.05 1641.95H1638M1190.35 1638.65H1638M1321.3 109.4V276M1501.3 109.4V276M1657.3 109.4V811.5M1789.3 109.4V811.5M1873.3 109.4V811.5M2029.3 109.4V811.5M2161.3 109.4V811.5M1225.3 123V276M2269.3 123V862.5M875.9 362.8V1005.3M879.2 366.1V1002M1491.2 362.8V990M1487.9 366.1V990M1187.9 1102.3V1642.8M1191.2 1105.6V1639.5M1647.2 1102.3V1627.5M1643.9 1105.6V1627.5"/>
<path fill="none" stroke="#8c8c8c" stroke-width="1.7" d="M12.45 59.25H30M306 59.25H966M1074 59.25H1082.15M1212.45 59.25H1230M1578 59.25H2646M2754 59.25H2762.15M432.45 288.75H450M594 288.75H1506M1614 288.75H1622.15M468.45 365.25H486M642 365.25H870M96.45 722.25H114M318 722.25H426M12.45 798.75H90M1626 926.25H2754M468.45 1002.75H870M432.45 1028.25H1614M96.45 1589.25H1098M1740.45 1589.25H2634M13.3 58.4V799.6M1081.3 58.4V276M1213.3 58.4V276M2761.3 58.4V913.5M433.3 287.9V1029.1M1621.3 287.9V1015.5M469.3 364.4V1003.6M97.3 721.4V1590.1M1741.3 939V1590.1M2641.3 939V1576.5M1105.3 1041V1576.5"/>
<path fill="none" stroke="#e4e4e4" stroke-width="1.7" d="M24.45 110.25H42M24.45 135.75H42M24.45 161.25H42M24.45 212.25H42M24.45 237.75H42M24.45 263.25H42M24.45 288.75H42M24.45 314.25H42M24.45 339.75H42M24.45 365.25H42M24.45 390.75H42M24.45 441.75H42M24.45 492.75H42M24.45 518.25H42M24.45 543.75H42M24.45 569.25H42M24.45 620.25H42M24.45 645.75H42M24.45 671.25H42M24.45 696.75H42M24.45 722.25H42M24.45 747.75H42M25.3 97.5V162.1M25.3 199.5V391.6M25.3 429V442.6M25.3 480V570.1M25.3 607.5V760.5"/>
<path fill="none" stroke="#f0f0f0" stroke-width="2" d="M102 773.25H114M354 773.25H426M102 849.75H114M318 849.75H426M102 926.25H114M102 1002.75H114M258 1002.75H426M102 1079.25H114M246 1079.25H1074M102 1130.25H114M330 1130.25H1074M102 1181.25H114M318 1181.25H1074M102 1283.25H114M342 1283.25H1074M102 1385.25H114M270 1385.25H1074M102 1487.25H114M342 1487.25H1074M102 1563.75H114M366 1563.75H1074"/>
<path fill="none" stroke="#c8c8c8" stroke-width="1.7" d="M1746 1538.25H2634"/>
<path fill="none" stroke="#d8d8d8" stroke-width="1.7" d="M383.9 72V709.5M387.2 72V709.5"/>
<path fill="none" stroke="#d0d0d0" stroke-width="1.7" d="M2291.9 72V888M2295.2 72V888"/>
</svg>
<div class="ab" id="tx">
<div class="r t" style="top:21px"><span class="c0" style="left:0px">SharpConsoleUI Demo | Ctrl+T: Theme Selector</span></div>
<div class="r t" style="top:46.5px"><span class="c1" style="left:24px">| SharpConsoleUI Demo |</span><span class="c2" style="left:960px">[_][+][X]</span><span class="c1" style="left:1224px">| Interactive DataGrid Demo |</span><span class="c2" style="left:2640px">[_][+][X]</span></div>
<div class="r t" style="top:72px"><span class="c3" style="left:12px">[-] Layout &amp; Windows</span><span class="c4" style="left:1548px">Product Inventory (10,000 rows)</span><span class="c5" style="left:2304px">DataGrid Features</span></div>
<div class="r t" style="top:97.5px"><span class="c6" style="left:48px">IDE Layout</span><span class="c5" style="left:396px">Terminal</span></div>
<div class="r t" style="top:123px"><span class="c6" style="left:48px">File Explorer</span><span class="c4" style="left:1224px">ID</span><span class="c4" style="left:1320px">Product Name</span><span class="c4" style="left:1500px">Category</span><span class="c4" style="left:1656px">Price</span><span class="c4" style="left:1788px">Qty</span><span class="c4" style="left:1872px">Status</span><span class="c4" style="left:2028px">Warehouse</span><span class="c4" style="left:2160px">Rating</span><span class="c4" style="left:2304px">Navigation:</span></div>
<div class="r t" style="top:148.5px"><span class="c6" style="left:48px">Multi-Tab Demo</span><span class="c7" style="left:396px">A PTY-backed terminal emulator running</span><span class="c8" style="left:2328px">↑↓</span><span class="c4" style="left:2364px">Row navigation</span></div>
<div class="r t" style="top:174px"><span class="c9" style="left:12px">[-] Controls</span><span class="c7" style="left:396px">the system shell.</span><span class="c10" style="left:1224px">1</span><span class="c10" style="left:1320px">Product 00001</span><span class="c10" style="left:1500px">Home</span><span class="c10" style="left:1656px">$140.92</span><span class="c10" style="left:1788px">627</span><span class="c10" style="left:1872px">Out of Stock</span><span class="c10" style="left:2028px">LAX</span><span class="c10" style="left:2160px">2.1</span><span class="st" style="left:2209.2px;color:#b4b4b4">★</span><span class="c8" style="left:2328px">Tab/Shift+Tab</span><span class="c4" style="left:2496px">Cell navigation</span></div>
<div class="r t" style="top:199.5px"><span class="c6" style="left:48px">Interactive Demo</span><span class="c4" style="left:1224px">2</span><span class="c4" style="left:1320px">Product 00002</span><span class="c4" style="left:1500px">Garden</span><span class="c4" style="left:1656px">$512.93</span><span class="c4" style="left:1788px">868</span><span class="c3" style="left:1872px">On Order</span><span class="c4" style="left:2028px">CHI</span><span class="c4" style="left:2160px">2.0</span><span class="st" style="left:2209.2px;color:#f2f2f2">★</span><span class="c8" style="left:2328px">PgUp/PgDn</span><span class="c4" style="left:2448px">Page scroll</span></div>
<div class="r t" style="top:225px"><span class="c6" style="left:48px">Dropdown</span><span class="c7" style="left:396px">Controls used:</span><span class="c4" style="left:1224px">3</span><span class="c4" style="left:1320px">Product 00003</span><span class="c4" style="left:1500px">Sports</span><span class="c4" style="left:1656px">$320.24</span><span class="c4" style="left:1788px">1904</span><span class="c8" style="left:1872px">Low Stock</span><span class="c4" style="left:2028px">DFW</span><span class="c4" style="left:2160px">1.1</span><span class="st" style="left:2209.2px;color:#f2f2f2">★</span><span class="c8" style="left:2328px">Home/End</span><span class="c4" style="left:2436px">First/Last row</span></div>
<div class="r t" style="top:250.5px"><span class="c6" style="left:48px">List View</span><span class="c7" style="left:420px">- TerminalControl (PTY)</span><span class="c4" style="left:1224px">4</span><span class="c4" style="left:1320px">Product 00004</span><span class="c4" style="left:1500px">Auto</span><span class="c4" style="left:1656px">$577.20</span><span class="c4" style="left:1788px">1987</span><span class="c9" style="left:1872px">In Stock</span><span class="c4" style="left:2028px">NYC</span><span class="c4" style="left:2160px">3.8</span><span class="st" style="left:2209.2px;color:#f2f2f2">★</span></div>
<div class="r t" style="top:276px"><span class="c6" style="left:48px">Table</span><span class="c1" style="left:444px">| Terminal |</span><span class="c2" style="left:1500px">[_][+][X]</span><span class="c4" style="left:1656px">$539.98</span><span class="c4" style="left:1788px">220</span><span class="c11" style="left:1872px">Out of Stock</span><span class="c4" style="left:2028px">LAX</span><span class="c4" style="left:2160px">4.6</span><span class="st" style="left:2209.2px;color:#f2f2f2">★</span><span class="c4" style="left:2304px">Interaction:</span></div>
<div class="r t" style="top:301.5px"><span class="c6" style="left:48px">DataGrid</span><span class="c9" style="left:396px">[E</span><span class="c0" style="left:432px">Canvas Demo — Click inside canvases | Resize windows | Esc: Quit</span><span class="c4" style="left:1656px">$516.42</span><span class="c4" style="left:1788px">931</span><span class="c9" style="left:1872px">In Stock</span><span class="c4" style="left:2028px">HOU</span><span class="c4" style="left:2160px">3.3</span><span class="st" style="left:2209.2px;color:#f2f2f2">★</span><span class="c8" style="left:2328px">Click header</span><span class="c4" style="left:2484px">Sort column</span></div>
<div class="r t" style="top:327px"><span class="c6" style="left:48px">Nerd Fonts</span><span class="c4" style="left:1656px">$3.96</span><span class="c4" style="left:1788px">2678</span><span class="c3" style="left:1872px">On Order</span><span class="c4" style="left:2028px">MIA</span><span class="c4" style="left:2160px">2.5</span><span class="st" style="left:2209.2px;color:#f2f2f2">★</span><span class="c8" style="left:2328px">F2/Enter/DblClick</span><span class="c4" style="left:2544px">Edit cell</span></div>
<div class="r t" style="top:352.5px"><span class="c6" style="left:48px">Markup Syntax</span><span class="c1" style="left:480px">| Starfield |</span><span class="c3" style="left:888px">| Plasma |</span><span class="c8" style="left:1368px">[_][+]</span><span class="c11" style="left:1440px">[X]</span><span class="c4" style="left:1656px">$26.35</span><span class="c4" style="left:1788px">255</span><span class="c3" style="left:1872px">On Order</span><span class="c4" style="left:2028px">SEA</span><span class="c4" style="left:2160px">1.5</span><span class="st" style="left:2209.2px;color:#f2f2f2">★</span><span class="c8" style="left:2328px">Enter</span><span class="c4" style="left:2400px">Commit,</span><span class="c8" style="left:2496px">Esc</span><span class="c4" style="left:2544px">Cancel</span></div>
<div class="r t" style="top:378px"><span class="c6" style="left:48px">Data Binding</span><span class="c12" style="left:480px">·</span><span class="c13 as" style="left:672px">*</span><span class="st" style="left:685.2px;color:#ffffff">★</span><span class="c12" style="left:816px">·</span><span class="c14" style="left:1032px">[ Click to add ripples ]</span><span class="c4" style="left:1656px">$772.43</span><span class="c4" style="left:1788px">1448</span><span class="c11" style="left:1872px">Out of Stock</span><span class="c4" style="left:2028px">LAX</span><span class="c4" style="left:2160px">1.2</span><span class="st" style="left:2209.2px;color:#f2f2f2">★</span><span class="c8" style="left:2328px">Esc</span><span class="c4" style="left:2376px">Deselect cell (row mode)</span></div>
<div class="r t" style="top:403.5px"><span class="c8" style="left:12px">[-] Data Visualization</span><span class="c13 as" style="left:660px">*</span><span class="c4" style="left:1656px">$515.92</span><span class="c4" style="left:1788px">253</span><span class="c8" style="left:1872px">Low Stock</span><span class="c4" style="left:2028px">MIA</span><span class="c4" style="left:2160px">3.5</span><span class="st" style="left:2209.2px;color:#f2f2f2">★</span><span class="c8" style="left:2328px">Drag border</span><span class="c4" style="left:2472px">Resize column</span></div>
<div class="r t" style="top:429px"><span class="c6" style="left:48px">Graphs &amp; Charts</span><span class="st" style="left:505.2px;color:#ffffff">★</span><span class="c12" style="left:540px">·</span><span class="c12" style="left:624px">·</span><span class="c13 as" style="left:636px">*</span><span class="c13 as" style="left:744px">*</span><span class="c12" style="left:828px">··</span><span class="c4" style="left:1656px">$13.26</span><span class="c4" style="left:1788px">1825</span><span class="c8" style="left:1872px">Low Stock</span><span class="c4" style="left:2028px">NYC</span><span class="c4" style="left:2160px">3.9</span><span class="st" style="left:2209.2px;color:#f2f2f2">★</span></div>
<div class="r t" style="top:454.5px"><span class="c15" style="left:12px">[-] Rendering</span><span class="c12" style="left:480px">·</span><span class="c12" style="left:528px">·</span><span class="c12" style="left:636px">·  ·</span><span class="c4" style="left:1620px">s</span><span class="c4" style="left:1656px">$464.10</span><span class="c4" style="left:1788px">60</span><span class="c3" style="left:1872px">On Order</span><span class="c4" style="left:2028px">PHX</span><span class="c4" style="left:2160px">3.1</span><span class="st" style="left:2209.2px;color:#f2f2f2">★</span><span class="c4" style="left:2304px">Filtering:</span></div>
<div class="r t" style="top:480px"><span class="c6" style="left:48px">Gradients</span><span class="st" style="left:517.2px;color:#ffffff">★</span><span class="st" style="left:637.2px;color:#ffffff">★</span><span class="c13 as" style="left:660px">*</span><span class="c13 as" style="left:744px">**</span><span class="c13 as" style="left:828px">*</span><span class="c4" style="left:1656px">$8.96</span><span class="c4" style="left:1788px">4144</span><span class="c9" style="left:1872px">In Stock</span><span class="c4" style="left:2028px">NYC</span><span class="c4" style="left:2160px">1.3</span><span class="st" style="left:2209.2px;color:#f2f2f2">★</span><span class="c8" style="left:2328px">/</span><span class="c4" style="left:2352px">Enter filter mode</span></div>
<div class="r t" style="top:505.5px"><span class="c6" style="left:48px">Animations</span><span class="st" style="left:553.2px;color:#ffffff">★</span><span class="c12" style="left:600px">·</span><span class="c12" style="left:828px">·</span><span class="c4" style="left:1656px">$34.55</span><span class="c4" style="left:1788px">4567</span><span class="c3" style="left:1872px">On Order</span><span class="c4" style="left:2028px">PHX</span><span class="c4" style="left:2160px">2.5</span><span class="st" style="left:2209.2px;color:#f2f2f2">★</span><span class="c8" style="left:2328px">text</span><span class="c4" style="left:2388px">Filter all columns</span></div>
<div class="r t" style="top:531px"><span class="c6" style="left:48px">Image Rendering</span><span class="c13 as" style="left:720px">*</span><span class="c13 as" style="left:768px">*  *</span><span class="c4" style="left:1656px">$44.45</span><span class="c4" style="left:1788px">1863</span><span class="c9" style="left:1872px">In Stock</span><span class="c4" style="left:2028px">PHX</span><span class="c4" style="left:2160px">4.2</span><span class="st" style="left:2209.2px;color:#f2f2f2">★</span><span class="c8" style="left:2328px">col:value</span><span class="c4" style="left:2448px">Filter specific column</span></div>
<div class="r t" style="top:556.5px"><span class="c6" style="left:48px">Image Viewer</span><span class="c13 as" style="left:468px">*</span><span class="c13 as" style="left:840px">*</span><span class="c4" style="left:1656px">$400.70</span><span class="c4" style="left:1788px">1486</span><span class="c3" style="left:1872px">On Order</span><span class="c4" style="left:2028px">DFW</span><span class="c4" style="left:2160px">3.9</span><span class="st" style="left:2209.2px;color:#f2f2f2">★</span><span class="c8" style="left:2328px">col&gt;value</span><span class="c4" style="left:2448px">Numeric comparison</span></div>
<div class="r t" style="top:582px"><span class="c16" style="left:12px">[-] Utilities</span><span class="st" style="left:841.2px;color:#ffffff">★</span><span class="c4" style="left:1620px">s</span><span class="c4" style="left:1656px">$881.68</span><span class="c4" style="left:1788px">4788</span><span class="c8" style="left:1872px">Low Stock</span><span class="c4" style="left:2028px">MIA</span><span class="c4" style="left:2160px">1.6</span><span class="st" style="left:2209.2px;color:#f2f2f2">★</span><span class="c8" style="left:2328px">a b</span><span class="c4" style="left:2376px">AND (space-separated)</span></div>
<div class="r t" style="top:607.5px"><span class="c6" style="left:48px">Built-in Dialogs</span><span class="st" style="left:529.2px;color:#ffffff">★</span><span class="st" style="left:553.2px;color:#ffffff">★</span><span class="c13 as" style="left:648px">*</span><span class="c4" style="left:1656px">$452.16</span><span class="c4" style="left:1788px">1666</span><span class="c3" style="left:1872px">On Order</span><span class="c4" style="left:2028px">LAX</span><span class="c4" style="left:2160px">1.5</span><span class="st" style="left:2209.2px;color:#f2f2f2">★</span><span class="c8" style="left:2328px">a|b</span><span class="c4" style="left:2376px">OR (pipe-separated)</span></div>
<div class="r t" style="top:633px"><span class="c6" style="left:48px">Digital Clock</span><span class="st" style="left:469.2px;color:#ffffff">★</span><span class="c12" style="left:492px">·</span><span class="c12" style="left:552px">··</span><span class="c4" style="left:1656px">$591.67</span><span class="c4" style="left:1788px">2564</span><span class="c3" style="left:1872px">On Order</span><span class="c4" style="left:2028px">MIA</span><span class="c4" style="left:2160px">3.7</span><span class="st" style="left:2209.2px;color:#f2f2f2">★</span><span class="c8" style="left:2328px">col:a|b</span><span class="c4" style="left:2424px">OR within column</span></div>
<div class="r t" style="top:658.5px"><span class="c6" style="left:48px">Log Viewer</span><span class="c13 as" style="left:504px">*</span><span class="st" style="left:661.2px;color:#ffffff">★</span><span class="c4" style="left:1656px">$289.48</span><span class="c4" style="left:1788px">2760</span><span class="c3" style="left:1872px">On Order</span><span class="c4" style="left:2028px">SEA</span><span class="c4" style="left:2160px">1.1</span><span class="st" style="left:2209.2px;color:#f2f2f2">★</span><span class="c8" style="left:2328px">Enter</span><span class="c4" style="left:2400px">Confirm,</span><span class="c8" style="left:2508px">Esc</span><span class="c4" style="left:2556px">Clear</span></div>
<div class="r t" style="top:684px"><span class="c6" style="left:48px">Notifications</span><span class="c4" style="left:1656px">$929.06</span><span class="c4" style="left:1788px">135</span><span class="c9" style="left:1872px">In Stock</span><span class="c4" style="left:2028px">CHI</span><span class="c4" style="left:2160px">1.2</span><span class="st" style="left:2209.2px;color:#f2f2f2">★</span></div>
<div class="r t" style="top:709.5px"><span class="c6" style="left:48px">Sys</span><span class="c1" style="left:108px">| Markup Syntax |</span><span class="c13 as" style="left:480px">*</span><span class="st" style="left:529.2px;color:#ffffff">★</span><span class="c4" style="left:1656px">$592.34</span><span class="c4" style="left:1788px">2111</span><span class="c9" style="left:1872px">In Stock</span><span class="c4" style="left:2028px">ATL</span><span class="c4" style="left:2160px">1.5</span><span class="st" style="left:2209.2px;color:#f2f2f2">★</span><span class="c4" style="left:2304px">Scrolling:</span></div>
<div class="r t" style="top:735px"><span class="c6" style="left:48px">Ter</span><span class="c12" style="left:612px">··</span><span class="c4" style="left:1656px">$321.32</span><span class="c4" style="left:1788px">1619</span><span class="c3" style="left:1872px">On Order</span><span class="c4" style="left:2028px">DEN</span><span class="c4" style="left:2160px">1.0</span><span class="st" style="left:2209.2px;color:#f2f2f2">★</span><span class="c8" style="left:2328px">Mouse wheel</span><span class="c4" style="left:2472px">Vertical scroll</span></div>
<div class="r t" style="top:760.5px"><span class="c4" style="left:120px">Basic Named Colors</span><span class="c12" style="left:552px">·</span><span class="c4" style="left:1620px">s</span><span class="c4" style="left:1656px">$840.50</span><span class="c4" style="left:1788px">4479</span><span class="c9" style="left:1872px">In Stock</span><span class="c4" style="left:2028px">ATL</span><span class="c4" style="left:2160px">4.4</span><span class="st" style="left:2209.2px;color:#f2f2f2">★</span><span class="c8" style="left:2328px">Shift+wheel</span><span class="c4" style="left:2472px">Horizontal scroll</span></div>
<div class="r t" style="top:786px"><span class="c17" style="left:120px">black</span><span class="c11" style="left:204px">red</span><span class="c9" style="left:264px">green</span><span class="c18" style="left:348px">blue</span><span class="c13 as" style="left:480px">*</span><span class="c12" style="left:504px">··</span><span class="c13 as" style="left:672px">*</span><span class="c13 as" style="left:732px">*</span><span class="st" style="left:829.2px;color:#ffffff">★</span><span class="c4" style="left:1656px">$545.35</span><span class="c4" style="left:1788px">3172</span><span class="c11" style="left:1872px">Out of Stock</span><span class="c4" style="left:2028px">LAX</span><span class="c4" style="left:2160px">2.2</span><span class="st" style="left:2209.2px;color:#f2f2f2">★</span><span class="c8" style="left:2328px">Drag scrollbar</span><span class="c4" style="left:2508px">Smooth scroll</span></div>
<div class="r t" style="top:811.5px"><span class="c19" style="left:120px">maroon</span><span class="c20" style="left:216px">navy</span><span class="c21" style="left:288px">olive</span><span class="c22" style="left:372px">purp</span><span class="c12" style="left:528px">·</span><span class="c12" style="left:624px">··</span><span class="st" style="left:817.2px;color:#ffffff">★</span><span class="c13 as" style="left:840px">*</span></div>
<div class="r t" style="top:837px"><span class="c4" style="left:120px">Extended Colors</span><span class="c4" style="left:2304px">Data Source:</span></div>
<div class="r t" style="top:862.5px"><span class="c23" style="left:120px">orange1</span><span class="c24" style="left:228px">hotpink</span><span class="c25" style="left:336px">deeppin</span><span class="st" style="left:481.2px;color:#ffffff">★</span><span class="c13 as" style="left:492px">*</span><span class="st" style="left:529.2px;color:#ffffff">★</span><span class="st" style="left:853.2px;color:#ffffff">★</span><span class="c9" style="left:2328px">10,000 rows</span><span class="c4" style="left:2472px">virtual rendering</span></div>
<div class="r t" style="top:888px"><span class="c26" style="left:120px">gold1</span><span class="c27" style="left:204px">violet</span><span class="c28" style="left:300px">salmon1</span><span class="c29" style="left:408px">l</span><span class="c12" style="left:540px">·</span><span class="c4" style="left:1620px">sc: Close | F2: Edit | /: Filter</span></div>
<div class="r t" style="top:913.5px"><span class="c4" style="left:120px">Hex Colors (#RGB and #RRG</span><span class="c12" style="left:660px">·</span></div>
<div class="r t" style="top:939px"><span class="c11" style="left:120px">#F00</span><span class="c30" style="left:192px">#0F0</span><span class="c18" style="left:264px">#00F</span><span class="c31" style="left:336px">#FF8000</span><span class="st" style="left:529.2px;color:#ffffff">★</span><span class="st" style="left:625.2px;color:#ffffff">★</span><span class="c13 as" style="left:672px">*</span><span class="st" style="left:685.2px;color:#ffffff">★</span></div>
<div class="r t" style="top:964.5px"><span class="c25" style="left:120px">#FF1493</span><span class="c32" style="left:228px">#7FFF00</span><span class="c26" style="left:336px">#FFD700</span><span class="c12" style="left:504px">·</span><span class="c12" style="left:576px">·</span><span class="st" style="left:613.2px;color:#ffffff">★</span><span class="c13 as" style="left:816px">*</span></div>
<div class="r t" style="top:990px"><span class="c4" style="left:120px">RGB Colors</span></div>
<div class="r t" style="top:1015.5px"><span class="c11" style="left:120px">rgb(255,0,0)</span><span class="c30" style="left:288px">rgb(0,255,0</span></div>
<div class="r t" style="top:1041px"><span class="c15" style="left:120px">rgb(255,165,0)</span><span class="c33" style="left:312px">rgb(128,0,255)</span><span class="c34" style="left:504px">rgb(0,206,209)</span></div>
<div class="r t" style="top:1066.5px"><span class="c4" style="left:120px">Grayscale</span></div>
<div class="r t" style="top:1092px"><span class="c17" style="left:120px">grey0</span><span class="c35" style="left:204px">grey15</span><span class="c36" style="left:300px">grey30</span><span class="c37" style="left:396px">grey42</span><span class="c38" style="left:492px">grey54</span><span class="c39" style="left:588px">grey66</span><span class="c40" style="left:684px">grey78</span><span class="c41" style="left:780px">grey89</span><span class="c14" style="left:876px">grey100</span><span class="c3" style="left:1200px">| System Info |</span><span class="c8" style="left:1524px">[_][+]</span><span class="c11" style="left:1596px">[X]</span></div>
<div class="r t" style="top:1117.5px"><span class="c4" style="left:120px">Text Decorations</span><span class="c42" style="left:1200px">System Information</span></div>
<div class="r t" style="top:1143px"><span class="c43" style="left:120px">bold</span><span class="c44" style="left:192px">dim</span><span class="c45" style="left:252px">italic</span><span class="c46" style="left:348px">underline</span><span class="c47" style="left:480px">strikethrough</span><span class="c48" style="left:660px">invert</span></div>
<div class="r t" style="top:1168.5px"><span class="c4" style="left:120px">Combined Styles</span><span class="c49" style="left:1200px">OS:</span><span class="c6" style="left:1380px">Ubuntu 25.10</span></div>
<div class="r t" style="top:1194px"><span class="c50" style="left:120px">bold red</span><span class="c51" style="left:240px">italic underline blue</span><span class="c52" style="left:516px">dim italic grey</span><span class="c49" style="left:1200px">Architecture:</span><span class="c6" style="left:1380px">X64</span></div>
<div class="r t" style="top:1219.5px"><span class="c42" style="left:120px">bold yellow on darkblue</span><span class="c53" style="left:420px">underline hex orange</span><span class="c54" style="left:684px">bold italic green</span><span class="c49" style="left:1200px">Runtime:</span><span class="c6" style="left:1380px">.NET 9.0.13</span></div>
<div class="r t" style="top:1245px"><span class="c55" style="left:120px">strikethrough red</span><span class="c56" style="left:348px">bold underline hotpink</span><span class="c49" style="left:1200px">Process Arch:</span><span class="c6" style="left:1380px">X64</span></div>
<div class="r t" style="top:1270.5px"><span class="c4" style="left:120px">Background Colors</span></div>
<div class="r t" style="top:1296px"><span class="c14" style="left:132px">white on red</span><span class="c17" style="left:324px">black on yellow</span><span class="c14" style="left:552px">white on blue</span><span class="c49" style="left:1200px">Processors:</span><span class="c6" style="left:1380px">16</span></div>
<div class="r t" style="top:1321.5px"><span class="c14" style="left:132px">white on green</span><span class="c14" style="left:348px">white on magenta</span><span class="c14" style="left:588px">on cyan</span><span class="c49" style="left:1200px">Machine:</span><span class="c6" style="left:1380px">nick-NucBox-K8-Plus</span></div>
<div class="r t" style="top:1347px"><span class="c43" style="left:132px">on #8B0000</span><span class="c17" style="left:300px">on rgb(255,215,0)</span><span class="c14" style="left:552px">on #2E8B57</span><span class="c49" style="left:1200px">User:</span><span class="c6" style="left:1380px">nick</span></div>
<div class="r t" style="top:1372.5px"><span class="c4" style="left:120px">Nested Tags</span></div>
<div class="r t" style="top:1398px"><span class="c43" style="left:120px">Bold</span><span class="c50" style="left:180px">bold+red</span><span class="c43" style="left:288px">just bold</span><span class="c42" style="left:1200px">Memory</span></div>
<div class="r t" style="top:1423.5px"><span class="c9" style="left:120px">Green</span><span class="c57" style="left:192px">green+underline</span><span class="c9" style="left:384px">green</span></div>
<div class="r t" style="top:1449px"><span class="c14" style="left:120px">Blue bg</span><span class="c42" style="left:216px">bold yellow on blue</span><span class="c14" style="left:456px">back to blue bg</span><span class="c49" style="left:1200px">GC Heap:</span><span class="c6" style="left:1380px">12,350 KB</span></div>
<div class="r t" style="top:1474.5px"><span class="c4" style="left:120px">Escaping Brackets</span><span class="c49" style="left:1200px">GC Gen0:</span><span class="c6" style="left:1380px">25 collections</span></div>
<div class="r t" style="top:1500px"><span class="c4" style="left:120px">Literal brackets: [bold] displays as</span><span class="c49" style="left:1200px">GC Gen1:</span><span class="c6" style="left:1380px">6 collections</span></div>
<div class="r t" style="top:1525.5px"><span class="c4" style="left:120px">Array access: array[0] displays as array[0]</span><span class="c49" style="left:1200px">GC Gen2:</span><span class="c6" style="left:1380px">4 collections</span></div>
<div class="r t" style="top:1551px"><span class="c4" style="left:120px">Real-World Examples</span><span class="c49" style="left:1200px">Heap Size:</span><span class="c6" style="left:1380px">11,084 KB</span><span class="c6" style="left:1944px">Ctrl+O: Open  S: Scale Mode  Esc: Close</span></div>
<div class="r t" style="top:1602px"><span class="c6" style="left:1200px">Press</span><span class="c49" style="left:1272px">ESC</span><span class="c6" style="left:1320px">to close</span></div>
<div class="r t" style="top:1704px"><span class="c58" style="left:0px">Alt-1</span><span class="c0" style="left:72px">SharpCo... Demo |</span><span class="c58" style="left:288px">Alt-2</span><span class="c0" style="left:360px">Markup Syntax |</span><span class="c58" style="left:552px">Alt-3</span><span class="c0" style="left:624px">Interac... Demo |</span><span class="c58" style="left:840px">Alt-4</span><span class="c0" style="left:912px">Image Viewer |</span><span class="c58" style="left:1092px">Alt-5</span><span class="c0" style="left:1164px">System Info |</span><span class="c58" style="left:1332px">Alt-6</span><span class="c0" style="left:1404px">Terminal |</span></div>
</div>
</body></html>
